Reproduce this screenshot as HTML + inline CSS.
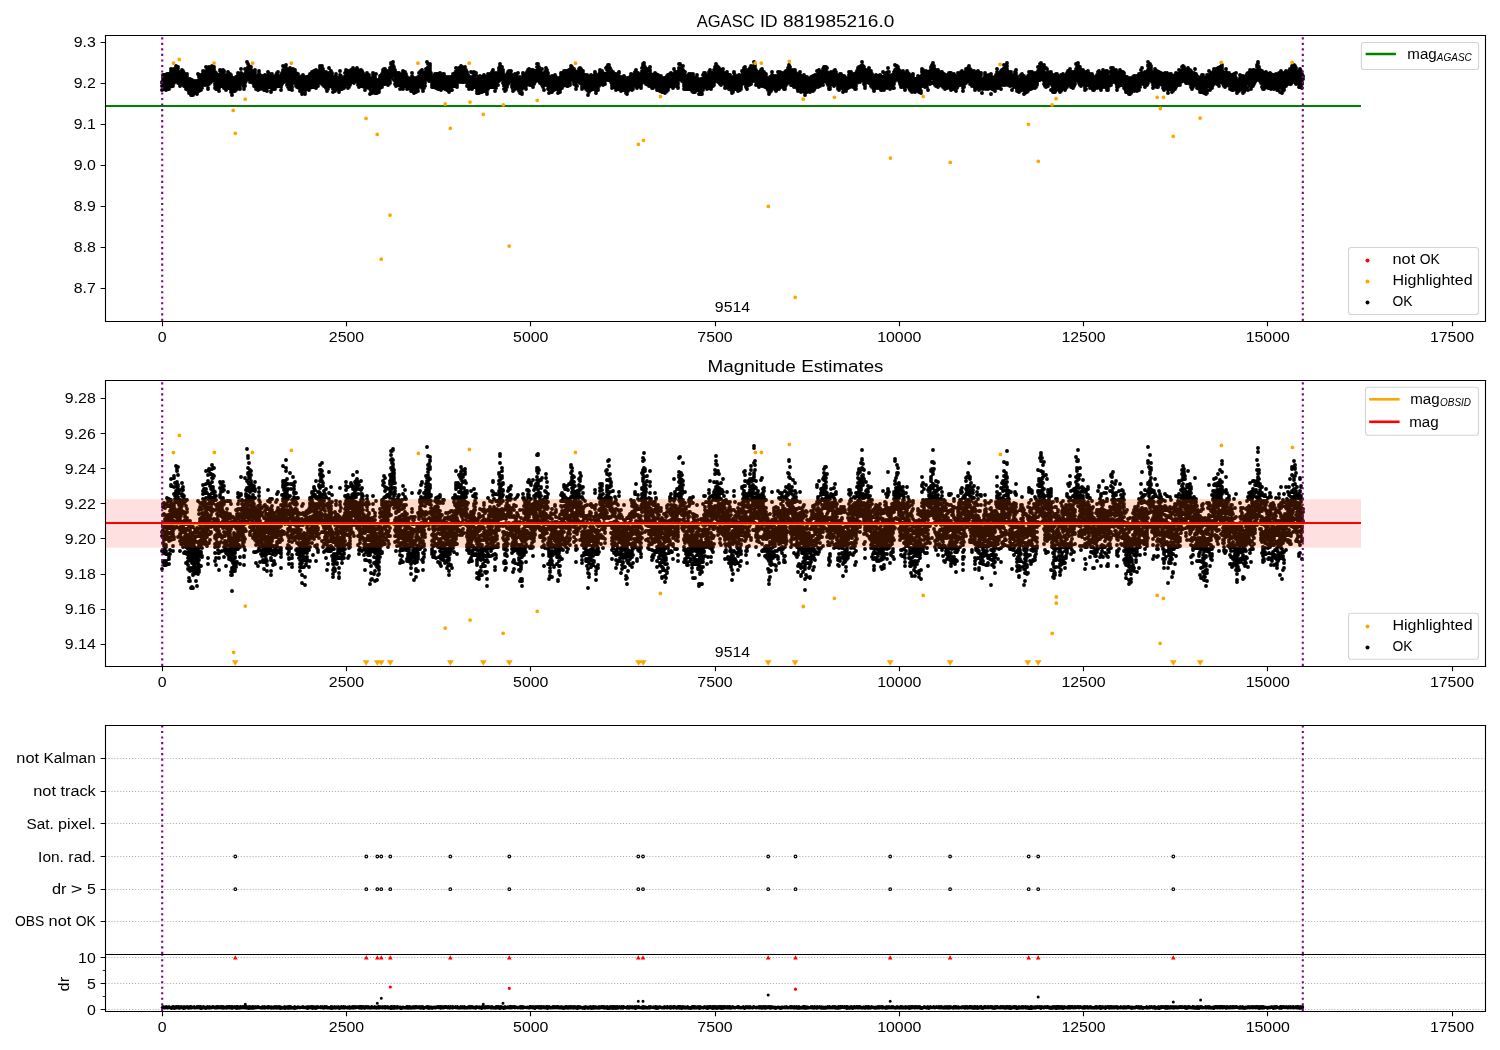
<!DOCTYPE html>
<html><head><meta charset="utf-8"><title>AGASC ID 881985216.0</title><style>html,body{margin:0;padding:0;background:#fff;}svg{display:block;}text{font-family:"Liberation Sans",sans-serif;}svg{will-change:transform;}</style></head><body><svg width="1500" height="1050" viewBox="0 0 1500 1050" font-family="'Liberation Sans', sans-serif" fill="#000">
<rect width="1500" height="1050" fill="#fff"/>
<defs>
<clipPath id="c1"><rect x="105.5" y="35.5" width="1380" height="286"/></clipPath>
<clipPath id="c2"><rect x="105.5" y="380.5" width="1380" height="286"/></clipPath>
<clipPath id="c3"><rect x="105.5" y="725.5" width="1380" height="229"/></clipPath>
<clipPath id="c4"><rect x="105.5" y="954.5" width="1380" height="57"/></clipPath>
</defs>
<g clip-path="url(#c1)">
<path d="M105.5 106H1360" stroke="#008000" stroke-width="2" stroke-linecap="square"/>
<path d="M162 86h0m0 4h0m0-7h0m0-1h0m1-2h0m0 1h0m0 3h0m0 5h0m0-14h0m0 1h0m0 2h0m1-3h0m0 2h0m0 6h0m0 3h0m0 3h0m0-7h0m1 4h0m0-4h0m0-3h0m0 10h0m0-6h0m0-8h0m0 3h0m1 10h0m0-5h0m0 7h0m0-3h0m0-5h0m0 4h0m1-7h0m0 2h0m0-6h0m0 7h0m0-4h0m0-4h0m1 0h0m0 2h0m0 5h0m0-3h0m0 4h0m0 1h0m1-9h0m0 7h0m0 3h0m0 4h0m0-1h0m0-9h0m0 11h0m1-12h0m0 9h0m0-5h0m0 2h0m0 4h0m0-7h0m0-5h0m1 5h0m0-4h0m0 2h0m0-4h0m0-3h0m0 13h0m0-2h0m0-13h0m1 7h0m0 2h0m0 3h0m0 2h0m0-8h0m1 5h0m0-5h0m0 7h0m0-5h0m0 8h0m0 1h0m1-7h0m0-2h0m0-4h0m0 2h0m0 8h0m0-12h0m0-2h0m0 12h0m1-7h0m0 2h0m0-3h0m0 5h0m0 3h0m0-11h0m1 10h0m0-8h0m0 2h0m0 1h0m0-9h0m0 12h0m1-10h0m0 9h0m0-5h0m0-2h0m0-3h0m0 14h0m0-8h0m0 1h0m0 5h0m1-2h0m0-5h0m0 7h0m0-8h0m0 12h0m0-8h0m0-7h0m0-1h0m1 9h0m0-1h0m0-3h0m0 6h0m0 1h0m0 2h0m1-4h0m0 2h0m0 7h0m0-5h0m0-6h0m0 7h0m0 2h0m0-10h0m1 2h0m0 4h0m0-2h0m0 5h0m0 2h0m0-10h0m1 0h0m0-3h0m0 4h0m0 5h0m0-2h0m0-9h0m0 13h0m1-9h0m0 10h0m0-3h0m0-10h0m0 9h0m0-3h0m0 8h0m1-2h0m0-8h0m0 7h0m0-5h0m0 2h0m0 5h0m0-10h0m0-1h0m0 13h0m1-3h0m0-4h0m0 7h0m0-5h0m0-4h0m0-2h0m1 5h0m0 2h0m0 3h0m0-6h0m0 10h0m0-13h0m1 5h0m0 6h0m0-9h0m0 5h0m0-9h0m0 15h0m0-13h0m0 8h0m1 0h0m0 4h0m0-3h0m0-2h0m0 7h0m0-11h0m1 8h0m0 3h0m0 3h0m0-8h0m0-1h0m0-1h0m0-3h0m1 6h0m0-7h0m0 12h0m0-9h0m0 3h0m0 2h0m0 1h0m0 5h0m1-5h0m0-5h0m0-2h0m0 6h0m0 8h0m0-11h0m0 7h0m1-6h0m0 1h0m0-6h0m0 15h0m0-5h0m0-1h0m0-6h0m1 2h0m0-4h0m0 14h0m0-13h0m0 10h0m0-4h0m0 3h0m1-4h0m0-3h0m0 5h0m0 1h0m0 1h0m1-2h0m0-3h0m0-2h0m0-2h0m0-1h0m0 10h0m1-6h0m0 3h0m0 3h0m0-8h0m0 10h0m1-4h0m0 1h0m0-9h0m0 10h0m0-4h0m0 7h0m0-10h0m1 5h0m0-8h0m0 5h0m0 4h0m0-7h0m0 8h0m0-17h0m1 15h0m0-9h0m0 7h0m0 3h0m0-6h0m0 7h0m0-14h0m0-1h0m1 6h0m0 2h0m0 1h0m0-10h0m0 4h0m0-3h0m1 10h0m0-1h0m0-1h0m0-6h0m0 1h0m0 4h0m0 7h0m0-10h0m0 7h0m1 1h0m0-2h0m0-3h0m0-1h0m0-2h0m0-3h0m0-1h0m1-5h0m0 4h0m0 3h0m0-5h0m0 6h0m0 5h0m1-6h0m0 2h0m0 1h0m0 2h0m0-8h0m0-3h0m1 2h0m0 7h0m0-1h0m0-4h0m0 1h0m0 7h0m0-11h0m0 12h0m0-13h0m1-5h0m0 5h0m0 7h0m0-8h0m0 3h0m0 3h0m0 7h0m0-1h0m0-2h0m1-2h0m0-6h0m0 3h0m0 7h0m0-2h0m0 4h0m1 3h0m0 1h0m0-8h0m0-3h0m0-10h0m0 2h0m0 6h0m1 3h0m0-12h0m0 8h0m0 1h0m0-3h0m0 11h0m0-4h0m1-5h0m0 7h0m0-8h0m0-4h0m0 3h0m0 10h0m0-7h0m0 2h0m1-6h0m0 8h0m0-5h0m0 7h0m0-5h0m0-9h0m1 8h0m0-10h0m0 11h0m0-7h0m0-1h0m0 5h0m0 6h0m0-9h0m1 0h0m0-3h0m0 12h0m0-6h0m0 3h0m1-3h0m0-5h0m0 10h0m0-12h0m0 10h0m0-5h0m1 9h0m0-2h0m0-7h0m0 1h0m0 10h0m0 1h0m0 4h0m0-3h0m1 4h0m0-10h0m0-5h0m0 14h0m0-8h0m0-5h0m0 8h0m0-10h0m0 4h0m1 2h0m0 2h0m0 2h0m0-7h0m0 8h0m0-9h0m0 10h0m1-7h0m0 1h0m0 2h0m0-5h0m0-1h0m0 8h0m0 3h0m0 1h0m1-10h0m0 10h0m0 4h0m0-6h0m0-1h0m0-3h0m0-1h0m0-5h0m0 13h0m1-12h0m0 6h0m0 2h0m0-6h0m0-4h0m0-3h0m0 9h0m0-10h0m0 16h0m1-10h0m0 1h0m0 1h0m0 2h0m0 4h0m0-13h0m0 1h0m0 2h0m0 9h0m1-11h0m0 8h0m0-6h0m0 3h0m0 9h0m0-3h0m1 0h0m0-9h0m0 7h0m0-6h0m0 2h0m0-5h0m0-1h0m0-1h0m0 8h0m1-3h0m0 4h0m0 1h0m0-9h0m0 1h0m0 10h0m0 3h0m0 3h0m0-10h0m1 1h0m0-2h0m0 9h0m0-2h0m0-4h0m0 3h0m1-1h0m0-5h0m0 8h0m0-5h0m0 6h0m0 1h0m0 3h0m1-8h0m0 4h0m0-7h0m0-2h0m0-2h0m1 11h0m0-7h0m0 6h0m0 2h0m0-12h0m0-3h0m0 8h0m0 4h0m0-6h0m1 0h0m0 3h0m0 2h0m0 5h0m0-2h0m1-8h0m0 4h0m0 3h0m0 2h0m0-13h0m0 7h0m1-3h0m0 2h0m0-5h0m0 6h0m0 3h0m0 7h0m0-4h0m0 5h0m0-4h0m1 2h0m0-2h0m0-3h0m0-2h0m0 12h0m0-3h0m1-5h0m0 2h0m0-4h0m0-6h0m0 4h0m0-5h0m0 2h0m1 0h0m0 10h0m0-11h0m0 6h0m0 4h0m0-6h0m0 5h0m1-5h0m0-3h0m0 7h0m0 3h0m0 1h0m0-7h0m0-5h0m1-2h0m0 8h0m0-5h0m0 10h0m0-8h0m0 7h0m1-11h0m0 11h0m0-6h0m0 2h0m0-4h0m0 5h0m0-9h0m1-4h0m0 1h0m0 1h0m0 8h0m0-5h0m0 8h0m0-5h0m1 1h0m0-4h0m0 5h0m0 2h0m0-11h0m0 7h0m0-5h0m1 1h0m0-1h0m0 9h0m0-4h0m0-1h0m0 9h0m0-7h0m0 6h0m1-5h0m0-5h0m0-5h0m0 7h0m0-4h0m0-7h0m1 11h0m0-3h0m0-2h0m0-1h0m0 10h0m0-1h0m1-4h0m0 5h0m0-4h0m0-4h0m0 6h0m0 3h0m1 3h0m0-7h0m0 3h0m0 5h0m0-2h0m0-10h0m0 2h0m1-1h0m0-9h0m0 5h0m0 2h0m0 5h0m0 5h0m0-3h0m1-7h0m0-3h0m0 5h0m0-6h0m0 9h0m1-4h0m0-2h0m0-1h0m0-3h0m0-1h0m0-8h0m1 15h0m0-1h0m0-6h0m0-6h0m0 14h0m0-5h0m0-6h0m0 12h0m1-7h0m0-4h0m0 11h0m0-6h0m0-4h0m0 6h0m0-9h0m0 12h0m1-11h0m0 15h0m0-10h0m0 2h0m0 2h0m0-8h0m0 13h0m0-12h0m0 8h0m1-3h0m0 4h0m0-11h0m0 8h0m0-5h0m0 2h0m1 2h0m0 7h0m0-2h0m0-3h0m0-5h0m1 4h0m0 8h0m0-6h0m0 3h0m0-6h0m0-2h0m1 5h0m0-1h0m0 6h0m0-10h0m0 9h0m0 2h0m0-3h0m0-9h0m0 4h0m0 11h0m1-14h0m0 4h0m0-6h0m0 8h0m0 1h0m0 3h0m0-8h0m0 10h0m1-5h0m0 1h0m0 4h0m0-6h0m0 8h0m0-4h0m0 7h0m1-11h0m0 7h0m0-4h0m0 1h0m0-5h0m1 5h0m0 3h0m0 5h0m0-14h0m0 5h0m0-4h0m0 9h0m0-6h0m1-2h0m0 8h0m0-5h0m0 1h0m0-9h0m0 4h0m0-6h0m0 12h0m0-9h0m1 2h0m0-1h0m0 6h0m0-4h0m0 6h0m0 6h0m0-11h0m0 6h0m1-2h0m0 2h0m0 3h0m0-6h0m0-5h0m0 2h0m1 4h0m0-5h0m0 4h0m0-5h0m0 9h0m0 2h0m0-9h0m1 8h0m0 2h0m0-8h0m0 5h0m0 4h0m0-7h0m1-6h0m0 10h0m0-4h0m0 3h0m0 2h0m0-7h0m0 10h0m0-12h0m1 3h0m0-4h0m0-2h0m0 14h0m0-9h0m0 6h0m0-4h0m0 2h0m1 3h0m0-9h0m0 7h0m0-8h0m0 11h0m0-5h0m0-2h0m0-5h0m1 12h0m0-2h0m0-6h0m0 5h0m0 6h0m0-9h0m0-6h0m0 3h0m1 4h0m0-2h0m0-9h0m0 12h0m0-9h0m0 5h0m0-4h0m0 3h0m1 3h0m0-4h0m0 1h0m0 7h0m0 1h0m0-3h0m1-6h0m0-1h0m0-3h0m0 7h0m0 1h0m0 4h0m0-3h0m1-7h0m0 4h0m0 1h0m0 2h0m0 2h0m0 3h0m0 3h0m0 1h0m0-15h0m1 6h0m0 4h0m0-6h0m0-4h0m0-3h0m0 10h0m0-5h0m1 2h0m0-1h0m0 2h0m0-3h0m0-1h0m0 5h0m0 6h0m0-3h0m1-8h0m0-1h0m0 2h0m0 2h0m0 1h0m0 3h0m0 4h0m0-2h0m1-8h0m0 6h0m0-3h0m0 4h0m0 3h0m0-11h0m1 2h0m0 2h0m0 1h0m0 4h0m0-1h0m0-8h0m0-3h0m1 4h0m0 5h0m0-11h0m0 9h0m0-8h0m0 3h0m0 8h0m1-4h0m0-3h0m0 4h0m0 4h0m0-10h0m0-4h0m1 7h0m0-1h0m0 6h0m0-7h0m0 5h0m0 4h0m1-1h0m0-3h0m0-5h0m0 3h0m1-5h0m0 7h0m0 1h0m0 3h0m0 1h0m0-7h0m0 10h0m0-13h0m1 7h0m0-3h0m0-3h0m0-2h0m0-3h0m1 3h0m0-5h0m0-1h0m0-4h0m0 7h0m0 4h0m1-5h0m0 5h0m0 1h0m0-8h0m0 9h0m0-3h0m0 6h0m0-9h0m1 0h0m0 7h0m0-5h0m0 2h0m0-6h0m0-1h0m1 4h0m0-3h0m0-1h0m0-2h0m0 11h0m0-4h0m0 3h0m0-13h0m1 11h0m0-3h0m0 5h0m0-6h0m0-3h0m0 13h0m0 3h0m1-3h0m0-1h0m0-1h0m0-9h0m0 3h0m0 11h0m0-6h0m0-2h0m0 10h0m1-6h0m0 2h0m0 1h0m0 2h0m0 2h0m0 1h0m1-6h0m0-2h0m0-3h0m0-2h0m0-1h0m0-2h0m0-5h0m1 12h0m0-3h0m0-5h0m0-2h0m0 6h0m0 9h0m1-8h0m0 6h0m0-1h0m0-1h0m0 6h0m0-13h0m0 16h0m0-6h0m0-4h0m1-1h0m0 1h0m0-3h0m0-2h0m0 6h0m0-12h0m1 11h0m0-10h0m0 2h0m0 2h0m0 1h0m0 7h0m0-5h0m1 3h0m0-3h0m0 6h0m0-9h0m0-4h0m1 10h0m0 6h0m0-7h0m0-2h0m0-1h0m0-1h0m0-2h0m1 8h0m0 5h0m0-12h0m0 2h0m0 3h0m0 3h0m0 5h0m0-3h0m1-3h0m0-1h0m0 6h0m0-8h0m0-4h0m0 8h0m0-5h0m0 6h0m1-3h0m0-1h0m0 3h0m0-5h0m0 8h0m0 2h0m0 1h0m1-5h0m0 3h0m0 5h0m0-4h0m0 1h0m0-6h0m0-2h0m1 9h0m0-3h0m0-3h0m0-6h0m0 5h0m0-1h0m0-1h0m1 10h0m0-1h0m0 3h0m0 2h0m0-7h0m0-8h0m0 6h0m0-3h0m0-6h0m1 12h0m0-4h0m0-7h0m0 10h0m0-7h0m0-5h0m0 8h0m1 2h0m0-6h0m0 9h0m0-10h0m0 4h0m0 8h0m1 4h0m0-11h0m0 1h0m0 4h0m0-2h0m0 6h0m0-13h0m0-1h0m1 1h0m0 10h0m0-7h0m0 6h0m0-4h0m0-7h0m0 8h0m1-4h0m0 5h0m0 1h0m0-10h0m0 2h0m0 6h0m0 3h0m1-11h0m0 2h0m0 7h0m0-5h0m0 3h0m1-1h0m0-7h0m0 14h0m0-4h0m0-6h0m1 3h0m0 5h0m0-14h0m0 4h0m0 4h0m0 3h0m0-9h0m0 3h0m1-4h0m0 1h0m0 6h0m0-8h0m0 6h0m0-1h0m0 4h0m1-5h0m0 1h0m0-5h0m0 8h0m0 2h0m0-12h0m0 3h0m1 4h0m0-1h0m0 5h0m0-11h0m0 9h0m0-4h0m0-2h0m0 12h0m1-7h0m0 3h0m0-7h0m0-5h0m0 6h0m1 8h0m0-7h0m0-5h0m0 6h0m0 2h0m0-5h0m0-4h0m1 5h0m0-1h0m0-6h0m0 10h0m0-5h0m0 7h0m0-8h0m0 14h0m1-11h0m0 5h0m0-4h0m0 7h0m0-5h0m1 1h0m0 5h0m0-12h0m0 4h0m0-3h0m0 7h0m0-10h0m1 0h0m0 2h0m0 9h0m0-5h0m0-3h0m0-4h0m0 11h0m1-12h0m0 3h0m0 2h0m0-7h0m0-1h0m0 10h0m0-11h0m1 4h0m0 8h0m0-3h0m0-8h0m0 12h0m1-5h0m0 10h0m0-11h0m0-5h0m0 14h0m0-11h0m0 5h0m0-10h0m1 4h0m0-1h0m0 7h0m0 3h0m0-8h0m0 3h0m0 6h0m0 5h0m1-13h0m0 9h0m0-1h0m0-4h0m0-3h0m0 6h0m0 7h0m0-4h0m0 3h0m1-7h0m0-1h0m0-3h0m0 9h0m0-4h0m0-6h0m0 8h0m0 5h0m1-2h0m0 4h0m0-16h0m0 6h0m0 4h0m0-7h0m0 5h0m1 2h0m0-2h0m0-2h0m0 5h0m0 3h0m0 5h0m0-16h0m1 14h0m0-7h0m0 2h0m0-4h0m0-1h0m0-4h0m0 10h0m0-9h0m0 10h0m1-8h0m0 3h0m0-4h0m0-2h0m0-1h0m0-1h0m0-5h0m1 16h0m0-9h0m0 11h0m0-8h0m0 4h0m0-2h0m1 5h0m0-2h0m0 3h0m0-5h0m0-5h0m0 3h0m0-8h0m1 6h0m0-4h0m0 10h0m0-3h0m0 7h0m0-3h0m0-9h0m1 7h0m0 7h0m0-5h0m0 4h0m0 4h0m0-6h0m1-2h0m0 5h0m0 2h0m0-12h0m0 8h0m0-5h0m1-2h0m0 4h0m0-6h0m0 4h0m0 8h0m0-13h0m0 14h0m1-3h0m0-6h0m0 1h0m0 4h0m0-2h0m0-7h0m0 3h0m0-6h0m0-1h0m1 7h0m0-3h0m0 7h0m0-3h0m0 7h0m0-2h0m1-9h0m0 5h0m0-3h0m0 7h0m0-1h0m1-1h0m0 2h0m0-5h0m0 10h0m0-1h0m0-3h0m1-1h0m0-3h0m0-9h0m0 4h0m0-1h0m0-7h0m0 10h0m1 3h0m0-2h0m0-2h0m0-1h0m0 6h0m0-9h0m0 12h0m1-4h0m0 3h0m0-7h0m0 9h0m0-10h0m0 2h0m1 3h0m0 1h0m0-5h0m0 2h0m0 5h0m1-9h0m0 3h0m0 6h0m0 1h0m0-5h0m0 2h0m1 1h0m0-1h0m0-4h0m0 1h0m0-6h0m0-3h0m0 6h0m1-3h0m0 5h0m0-10h0m0 6h0m0 2h0m0-6h0m0-3h0m1 8h0m0 4h0m0-3h0m0-3h0m0-3h0m1-2h0m0 7h0m0 1h0m0 3h0m0 6h0m0-4h0m0-9h0m0-2h0m1 5h0m0-4h0m0 8h0m0-2h0m0-3h0m0 9h0m0-1h0m0 2h0m1-8h0m0 3h0m0-6h0m0-2h0m0 10h0m0 1h0m1-7h0m0 3h0m0 1h0m0-11h0m0 5h0m0-1h0m0-5h0m1 8h0m0-2h0m0 3h0m0-5h0m0 6h0m0-9h0m0 11h0m1-14h0m0 8h0m0-3h0m0-1h0m0 8h0m0-3h0m0 5h0m1-8h0m0-1h0m0-2h0m0 8h0m0-4h0m0 3h0m0 2h0m0 3h0m1-11h0m0 7h0m0-5h0m0 4h0m0-1h0m0-7h0m0 10h0m1-9h0m0 1h0m0-2h0m0 4h0m0 4h0m0-3h0m0 5h0m1-11h0m0 9h0m0-7h0m0-3h0m0 8h0m0-1h0m0 6h0m1-1h0m0-10h0m0 1h0m0 5h0m0 3h0m0 4h0m0-8h0m0-2h0m0 12h0m1-14h0m0 4h0m0-3h0m0 14h0m0-5h0m0 6h0m0-4h0m0-7h0m0 1h0m0 2h0m1 3h0m0-3h0m0 7h0m0-8h0m0 6h0m0-9h0m1 7h0m0-3h0m0-7h0m0 4h0m0-6h0m0 5h0m0 8h0m1-8h0m0-4h0m0 3h0m0 4h0m0 5h0m0-4h0m0 7h0m0-6h0m1-6h0m0 3h0m0 1h0m0 4h0m0-3h0m0-6h0m0 10h0m1-2h0m0-3h0m0 8h0m0-4h0m0 2h0m0 3h0m1-9h0m0 6h0m0 1h0m0-3h0m0-3h0m0 7h0m0 2h0m0 2h0m1-12h0m0 3h0m0 2h0m0 2h0m0 3h0m0-13h0m1 4h0m0-2h0m0-1h0m0-1h0m0 6h0m0-7h0m0 11h0m0-12h0m1 8h0m0-6h0m0 3h0m0 8h0m0-2h0m0 3h0m1-9h0m0 5h0m0 1h0m0-4h0m0 5h0m0-8h0m0-2h0m0 13h0m1-9h0m0 3h0m0 5h0m0 7h0m0-8h0m0 3h0m0-6h0m1 2h0m0-4h0m0 2h0m0 8h0m0-5h0m0-6h0m0 13h0m0-3h0m1-4h0m0-8h0m0 5h0m0-1h0m0 11h0m0-12h0m1 4h0m0-5h0m0-7h0m0 13h0m0-3h0m0-6h0m0-2h0m1 6h0m0 5h0m0-1h0m0 3h0m0-5h0m0-4h0m0 12h0m1 2h0m0-2h0m0-9h0m0-4h0m0 5h0m0 4h0m0-10h0m0 4h0m0 5h0m1-12h0m0 7h0m0 1h0m0-2h0m0 4h0m0 2h0m0 3h0m1 1h0m0-3h0m0-2h0m0 8h0m0-12h0m1 8h0m0-9h0m0 3h0m0 4h0m0 3h0m0 2h0m0-7h0m1-1h0m0-4h0m0 8h0m0-6h0m0 4h0m0 6h0m0-2h0m1-6h0m0-1h0m0 5h0m0-11h0m0 1h0m0 8h0m0-5h0m0-5h0m1 5h0m0 1h0m0 1h0m0 2h0m0-6h0m0-2h0m1 5h0m0-7h0m0 8h0m0-6h0m0 9h0m0 1h0m0-6h0m0-3h0m0-4h0m1 3h0m0-6h0m0 4h0m0 3h0m0-4h0m0 5h0m0-9h0m0 13h0m1-4h0m0 2h0m0-4h0m0-3h0m0-5h0m0 1h0m0 14h0m1-9h0m0-6h0m0 3h0m0 10h0m0-4h0m0 2h0m0 3h0m0 1h0m1-7h0m0-1h0m0-1h0m0 8h0m0-11h0m0 6h0m0 3h0m1-1h0m0-4h0m0 6h0m0-5h0m0-2h0m0-4h0m0 2h0m1 0h0m0 6h0m0 3h0m0-4h0m0-1h0m0 8h0m1-8h0m0-4h0m0 7h0m0 4h0m0-3h0m0-5h0m0-4h0m1-1h0m0 2h0m0 10h0m0-13h0m0 11h0m0-5h0m0-8h0m0 10h0m1 0h0m0-7h0m0-2h0m0 3h0m0-5h0m0-3h0m0-1h0m1 7h0m0-5h0m0 10h0m0-7h0m0 3h0m0 2h0m0-10h0m1 11h0m0-8h0m0 1h0m0 1h0m0-6h0m0 8h0m0-5h0m1 2h0m0 1h0m0 5h0m0-4h0m0 1h0m0 6h0m0 4h0m1-8h0m0-1h0m0 2h0m0 8h0m0-11h0m0 9h0m0-3h0m0 8h0m1-7h0m0 4h0m0-2h0m0 7h0m0-4h0m0 1h0m0-9h0m1 6h0m0 2h0m0 3h0m0-8h0m0-1h0m0-1h0m1 4h0m0-4h0m0 7h0m0-5h0m0 7h0m0-11h0m1 1h0m0 5h0m0 3h0m0 1h0m0-7h0m0-3h0m1 9h0m0 4h0m0-1h0m0 4h0m0-14h0m0 4h0m1 1h0m0 8h0m0-6h0m0 2h0m0-6h0m0-3h0m0 10h0m1-3h0m0-8h0m0 4h0m0-2h0m0 3h0m0 4h0m0 2h0m0 2h0m1-4h0m0 6h0m0-8h0m0-3h0m0 8h0m0-13h0m0-2h0m1 8h0m0 3h0m0-6h0m0 8h0m1-3h0m0-7h0m0 12h0m0-6h0m0 4h0m0-12h0m0 5h0m1 6h0m0-3h0m0 6h0m0-7h0m0-4h0m0-1h0m1 11h0m0-8h0m0 6h0m0-1h0m0 6h0m0 1h0m1-3h0m0 1h0m0-3h0m0-6h0m0 2h0m0 3h0m1 4h0m0 1h0m0-2h0m0-3h0m0-1h0m0-3h0m1 9h0m0-6h0m0 5h0m0 2h0m0-8h0m0 2h0m0 1h0m1-1h0m0 4h0m0 1h0m0 1h0m0-4h0m0-7h0m0 13h0m1-4h0m0-2h0m0-2h0m0-1h0m0-5h0m0-1h0m0 5h0m0-1h0m0-7h0m1 11h0m0-6h0m0 9h0m0 2h0m0-7h0m0-3h0m1 8h0m0 6h0m0-7h0m0-2h0m0-5h0m0 10h0m0-8h0m1 7h0m0-2h0m0-8h0m0 4h0m0-1h0m0 8h0m0-5h0m1 2h0m0 6h0m0-8h0m0-1h0m0 5h0m0-7h0m0 10h0m1-5h0m0-3h0m0-3h0m0 9h0m1-12h0m0 10h0m0-2h0m0 3h0m0-5h0m0 8h0m0-10h0m1 2h0m0 2h0m0 1h0m0-6h0m0-1h0m0-1h0m0-1h0m0-4h0m1-1h0m0 12h0m0 2h0m0-5h0m0-5h0m0-2h0m0 3h0m0 1h0m1 2h0m0 2h0m0-8h0m0 3h0m0-4h0m0-2h0m1 3h0m0-4h0m0 7h0m0 4h0m0 4h0m0-3h0m0 6h0m1-8h0m0 4h0m0 3h0m0-4h0m0 6h0m0 2h0m0-14h0m1 5h0m0-4h0m0 1h0m0 5h0m0 4h0m0-15h0m0 12h0m0-11h0m1 12h0m0-7h0m0-3h0m0 4h0m0-5h0m0-2h0m0 10h0m1-6h0m0-5h0m0 7h0m0-8h0m0 3h0m0-5h0m1 2h0m0 7h0m0-6h0m0-3h0m0 8h0m0-4h0m0-11h0m0 13h0m1-2h0m0-1h0m0-2h0m0 4h0m0-7h0m0-3h0m0 16h0m1-9h0m0-5h0m0 9h0m0-1h0m0-5h0m0 12h0m0-3h0m1-13h0m0-1h0m0 10h0m0 1h0m0-4h0m0 6h0m0-8h0m0-2h0m1 6h0m0 3h0m0 3h0m0 1h0m1-1h0m0 7h0m0-9h0m0 7h0m0-2h0m0 5h0m0-11h0m1 11h0m0-3h0m0-6h0m0 2h0m0 2h0m1-1h0m0-1h0m0-3h0m0 7h0m0 3h0m1-11h0m0 4h0m0 6h0m0-3h0m0-4h0m0-5h0m1 0h0m0 6h0m0 3h0m0-6h0m0 11h0m0-3h0m1-5h0m0-1h0m0 6h0m0-10h0m0 1h0m0-2h0m0 7h0m1-2h0m0 3h0m0-5h0m0-3h0m0 15h0m0-4h0m1-8h0m0 1h0m0 7h0m0-11h0m0 7h0m0 3h0m0 4h0m1-4h0m0-11h0m0 1h0m0 5h0m0-4h0m0 2h0m0 9h0m0 3h0m0-7h0m1-4h0m0 9h0m0-6h0m0 2h0m0 1h0m0 6h0m1-6h0m0-3h0m0-6h0m0 5h0m0-2h0m0 7h0m1-10h0m0 8h0m0-1h0m0-3h0m0 9h0m0-14h0m0 10h0m0 1h0m1-2h0m0-2h0m0 4h0m0-5h0m0 8h0m0-14h0m0 5h0m1 1h0m0 8h0m0-5h0m0 6h0m0-11h0m0 8h0m1 1h0m0-1h0m0-4h0m0 1h0m0-3h0m0-3h0m0 12h0m1-6h0m0 1h0m0 2h0m0-6h0m0 7h0m0 3h0m1-6h0m0-2h0m0-5h0m0 3h0m0 8h0m0-1h0m0 3h0m1-2h0m0-3h0m0-4h0m0 10h0m0-8h0m0-5h0m0 14h0m1-11h0m0 4h0m0-3h0m0-2h0m0 7h0m0-10h0m1 12h0m0-3h0m0-6h0m0 1h0m0-4h0m0 5h0m1-3h0m0 7h0m0-5h0m0-3h0m0 7h0m0-2h0m0 7h0m0-13h0m1 6h0m0-2h0m0 4h0m0-5h0m0-1h0m0-5h0m1 6h0m0 4h0m0-2h0m0-7h0m0 4h0m0-1h0m0-4h0m0 12h0m1-7h0m0-1h0m0 2h0m0 4h0m0-1h0m0-10h0m0 2h0m1-3h0m0 4h0m0 7h0m0-4h0m0-8h0m0-3h0m0 14h0m1-3h0m0 3h0m0-6h0m0 11h0m0-2h0m1-6h0m0-3h0m0-6h0m0 11h0m0 1h0m0-7h0m0-2h0m1 8h0m0-6h0m0 1h0m0-8h0m0 3h0m0 6h0m0-5h0m1-4h0m0 1h0m0 8h0m0-2h0m0 7h0m0-11h0m0 9h0m0-6h0m1 6h0m0-2h0m0-6h0m0 3h0m0-4h0m0 10h0m0-12h0m0-1h0m0-2h0m1 12h0m0-1h0m0-1h0m0 6h0m0-2h0m0-9h0m0 4h0m0-2h0m0-3h0m0-3h0m1 3h0m0 7h0m0-8h0m0 6h0m0-1h0m0 8h0m0-1h0m0-8h0m0-5h0m0 11h0m1-2h0m0 3h0m0 2h0m0-6h0m0-1h0m0-1h0m0-1h0m0-2h0m1-1h0m0 2h0m0 3h0m0-8h0m1 3h0m0 6h0m0-3h0m0 5h0m0 1h0m0 1h0m1-7h0m0-1h0m0 6h0m0 2h0m0 3h0m0 3h0m0-11h0m1 8h0m0-8h0m0 5h0m0 5h0m1-5h0m0 5h0m0-7h0m0 3h0m0 6h0m0 2h0m0-7h0m1-3h0m0 6h0m0-4h0m0 7h0m1-5h0m0 1h0m0-2h0m0-5h0m0 3h0m0 8h0m0-16h0m1 11h0m0-3h0m0-2h0m0 9h0m0 2h0m1-6h0m0-1h0m0-5h0m0 3h0m0 6h0m0 1h0m0-14h0m1 2h0m0 7h0m0 5h0m0-6h0m0-5h0m0 1h0m0 2h0m0-7h0m1 1h0m0 6h0m0 7h0m0-6h0m0-6h0m0 2h0m0 7h0m1-9h0m0 1h0m0 6h0m0-2h0m0-6h0m0 9h0m0 2h0m0 3h0m1-6h0m0 7h0m0 5h0m0-4h0m0-2h0m0-1h0m0-2h0m0 7h0m1-8h0m0-3h0m0-1h0m0 9h0m0-4h0m0 1h0m1 6h0m0 1h0m0 1h0m0-5h0m0-8h0m0 4h0m0-3h0m0 4h0m0-8h0m1 14h0m0-5h0m0-10h0m0 2h0m0 2h0m0 1h0m0 2h0m0 4h0m0 1h0m1-3h0m0 3h0m0 3h0m0-11h0m1 6h0m0-7h0m0 4h0m0 5h0m0-11h0m0 5h0m0 10h0m1-15h0m0 9h0m0-5h0m0 9h0m0-3h0m0-4h0m0-4h0m1 8h0m0-7h0m0-5h0m0 9h0m0-3h0m0-4h0m1 5h0m0-5h0m0 2h0m0 11h0m0-7h0m0 8h0m0-3h0m0-1h0m0-1h0m1-4h0m0-5h0m0 6h0m0 8h0m0-6h0m0-5h0m0 6h0m0 1h0m1-3h0m0 9h0m0 1h0m0-7h0m0 1h0m0-9h0m0 4h0m0 8h0m1-8h0m0-6h0m0 8h0m0 4h0m0-9h0m0-6h0m0 13h0m1-7h0m0 1h0m0 2h0m0 4h0m0-8h0m0-1h0m0-1h0m0 8h0m1-11h0m0 8h0m0-6h0m0 5h0m0 2h0m0-3h0m0-2h0m1 3h0m0 3h0m0-7h0m0 9h0m0-6h0m0 7h0m1-2h0m0-10h0m0 7h0m0-10h0m0 8h0m0-3h0m1 9h0m0-8h0m0 9h0m0-6h0m0-11h0m0 2h0m0 5h0m0-4h0m1 9h0m0-4h0m0 2h0m0-3h0m0 7h0m0-8h0m0-2h0m1 5h0m0 8h0m0-2h0m0-7h0m0 4h0m0 6h0m0 3h0m0-14h0m1 11h0m0-7h0m0 6h0m0-3h0m0-9h0m0 5h0m0-7h0m1 5h0m0-3h0m0 8h0m0-3h0m1 1h0m0-3h0m0-1h0m0 8h0m0-10h0m1 6h0m0-9h0m0 3h0m0 3h0m0-8h0m0-2h0m1 12h0m0-6h0m0-3h0m0-7h0m0 6h0m0-1h0m0-3h0m0 11h0m1-3h0m0 1h0m0 3h0m0-5h0m0-1h0m0-1h0m0 8h0m1-7h0m0 1h0m0-6h0m0 2h0m0 8h0m0-3h0m0 4h0m1-6h0m0-1h0m0-1h0m0 3h0m0 5h0m0-4h0m0 6h0m0 3h0m0-6h0m1 12h0m0-4h0m0 1h0m0-4h0m0-6h0m1 9h0m0 2h0m0 1h0m0-6h0m0-6h0m0 2h0m0 13h0m1-1h0m0-10h0m0 4h0m0 5h0m0-3h0m0-10h0m0 6h0m0-3h0m1 3h0m0 4h0m0-1h0m0 2h0m0-9h0m0-4h0m0 3h0m0 4h0m1 2h0m0-5h0m0 6h0m0-7h0m0-3h0m0-2h0m1 8h0m0-4h0m0 2h0m0 3h0m0-10h0m0 3h0m0 8h0m1-2h0m0-6h0m0 4h0m0-2h0m0-3h0m0 8h0m0-9h0m1-1h0m0 6h0m0-3h0m0 6h0m0 2h0m1-4h0m0 4h0m0 4h0m0-1h0m0-9h0m0 5h0m0 6h0m1-6h0m0 8h0m0-6h0m0-3h0m0 5h0m0 6h0m1-1h0m0-10h0m0 6h0m0-5h0m0 2h0m0 5h0m0-10h0m0-3h0m1 4h0m0 6h0m0 1h0m0 3h0m0-7h0m0-4h0m0-2h0m0-2h0m1 9h0m0-1h0m0-4h0m0 1h0m0 5h0m0 2h0m0-10h0m1 5h0m0 1h0m0-3h0m0-2h0m0-3h0m0 12h0m1-1h0m0-4h0m0 2h0m0-3h0m0 7h0m0-9h0m0 11h0m0-16h0m1 13h0m0-5h0m0 4h0m0 2h0m0-5h0m0 6h0m0-8h0m0 11h0m1-4h0m0 2h0m0-4h0m0-8h0m0 14h0m0-9h0m0-2h0m0 13h0m1-7h0m0-4h0m0 1h0m0 7h0m0-1h0m0 4h0m0-15h0m1 5h0m0 10h0m0-11h0m0 2h0m0 2h0m0 8h0m0-6h0m0 1h0m1-6h0m0 4h0m0-7h0m0 6h0m0-9h0m0-3h0m0-1h0m1 1h0m0 5h0m0 2h0m0-4h0m0 7h0m0 1h0m0 2h0m1-10h0m0 3h0m0 6h0m0-10h0m0 5h0m0-6h0m0 7h0m1-5h0m0 6h0m0-3h0m0-4h0m0 10h0m0-11h0m0 14h0m1-4h0m0-8h0m0 4h0m0 2h0m0-7h0m0 4h0m0-5h0m0-3h0m1 1h0m0 3h0m0 3h0m0-9h0m0 12h0m1-7h0m0-2h0m0 4h0m0 1h0m0-9h0m0 11h0m0-10h0m1 7h0m0 4h0m0-3h0m0 4h0m0-6h0m0 9h0m0-15h0m1 15h0m0-4h0m0-5h0m0-1h0m0-4h0m0-1h0m0 4h0m0 5h0m1 3h0m0 1h0m0-2h0m0 4h0m0-6h0m0-2h0m0-2h0m1 12h0m0-5h0m0 3h0m0-10h0m0 5h0m0-3h0m0-7h0m1 7h0m0-2h0m0 3h0m0-5h0m0-1h0m0 11h0m0-4h0m0 2h0m0 3h0m1-8h0m0-2h0m0 8h0m0-11h0m0 10h0m0-1h0m1-2h0m0-7h0m0 6h0m0-1h0m0 5h0m0-8h0m1-3h0m0-3h0m0-3h0m0 7h0m0 2h0m0 2h0m1-7h0m0 11h0m0-8h0m0 2h0m0-9h0m0 3h0m1 6h0m0 8h0m0-5h0m0-9h0m0 13h0m0-10h0m0 8h0m1-4h0m0 1h0m0-2h0m0 4h0m0-7h0m0 13h0m0-5h0m0 3h0m1-10h0m0 8h0m0-9h0m0 10h0m0-7h0m0 8h0m0-4h0m0-2h0m1 2h0m0 4h0m0-6h0m0-6h0m0 9h0m0 7h0m0-3h0m1-2h0m0-6h0m0 3h0m0 5h0m0 5h0m0-4h0m0 1h0m1 1h0m0-3h0m0-1h0m0-2h0m0 11h0m0-13h0m0-1h0m1 3h0m0-7h0m0 9h0m0-8h0m0 12h0m0-2h0m0-7h0m1 6h0m0-10h0m0 8h0m0-2h0m0-9h0m0 7h0m0-1h0m0-7h0m1 12h0m0 1h0m0-5h0m0 2h0m0-4h0m0-3h0m0-1h0m0 12h0m1-1h0m0 4h0m0-10h0m0 5h0m0-2h0m0-5h0m0 16h0m0-5h0m0 2h0m1 1h0m0-6h0m0 3h0m0 9h0m1-8h0m0 6h0m0-1h0m0-6h0m0 5h0m0 3h0m0-5h0m0-9h0m1 5h0m0 3h0m0-8h0m0 3h0m0 6h0m0 1h0m0-11h0m1 6h0m0-4h0m0 6h0m0-9h0m0 13h0m0-7h0m0 10h0m0-6h0m1-5h0m0 1h0m0 5h0m0-7h0m0 6h0m0-3h0m1-3h0m0 10h0m0-5h0m0-2h0m0 3h0m0-8h0m0 9h0m1-10h0m0 3h0m0 4h0m0 2h0m0-10h0m0 5h0m0-6h0m0 12h0m1-6h0m0 5h0m0-4h0m0-4h0m0-1h0m0 6h0m1 4h0m0-8h0m0 6h0m0-1h0m0-1h0m0 6h0m0-7h0m1 3h0m0 1h0m0 1h0m0 6h0m0-9h0m1-1h0m0 4h0m0-1h0m0-6h0m0 11h0m0-3h0m0-10h0m1 0h0m0 8h0m0 1h0m0-5h0m0 2h0m0 8h0m0-2h0m0-10h0m1 5h0m0-2h0m0-4h0m0-3h0m0-2h0m0-1h0m0 7h0m1-3h0m0 6h0m0 5h0m0-9h0m0-3h0m0-3h0m0 9h0m1 1h0m0-3h0m0 4h0m0-5h0m0-5h0m0 12h0m0-9h0m1 0h0m0 2h0m0 3h0m0-11h0m0 5h0m0-3h0m1 11h0m0-12h0m0 13h0m0-4h0m0-4h0m0 2h0m0-5h0m0-3h0m1 7h0m0-6h0m0 2h0m0 1h0m0 10h0m0-5h0m0 1h0m1-1h0m0-3h0m0-6h0m0 5h0m0-2h0m0 10h0m0-1h0m0 3h0m1-6h0m0 6h0m0-10h0m0 6h0m0-7h0m0 4h0m0 5h0m0-12h0m1 8h0m0 4h0m0-14h0m0 7h0m0 4h0m0-5h0m0-2h0m1 6h0m0 5h0m0-9h0m0 7h0m0-9h0m0 4h0m1 2h0m0-5h0m0-1h0m0-4h0m0-3h0m0 11h0m0-12h0m1 1h0m0 9h0m0-3h0m0 4h0m0-5h0m0-1h0m0-2h0m0 10h0m1-6h0m0-1h0m0-1h0m0 6h0m0 1h0m0-3h0m0-6h0m0 10h0m1 0h0m0 3h0m0 2h0m0-10h0m0 1h0m0-6h0m0 1h0m1 4h0m0 4h0m0-1h0m0-6h0m0 8h0m0 2h0m1 0h0m0 1h0m0 4h0m0-6h0m0-4h0m0 7h0m0 6h0m1-7h0m0 4h0m0-11h0m0 4h0m0-1h0m0-6h0m1 0h0m0 3h0m0 2h0m0 1h0m0 3h0m1-9h0m0 1h0m0-2h0m0 3h0m0 1h0m0 1h0m0 1h0m0-8h0m1 0h0m0-1h0m0 11h0m0 2h0m0 2h0m0-8h0m0-4h0m0 7h0m0-6h0m1 0h0m0 4h0m0 2h0m0-9h0m0 11h0m0-5h0m1 3h0m0 9h0m0-4h0m0 6h0m0-12h0m0 8h0m0-3h0m0-10h0m0 1h0m1-2h0m0 2h0m0 3h0m0 8h0m0-7h0m0 3h0m0 2h0m1 5h0m0-2h0m0-9h0m0 3h0m0 1h0m0 1h0m0 1h0m1 2h0m0-8h0m0 7h0m0-5h0m0 3h0m0-6h0m0 10h0m0 2h0m1-5h0m0 5h0m0-2h0m0-5h0m0-2h0m0 11h0m1 1h0m0-11h0m0 7h0m0-3h0m0-8h0m0 3h0m0 4h0m1 8h0m0-6h0m0-3h0m0 7h0m0-2h0m0 5h0m0 4h0m1-9h0m0-4h0m0-4h0m0 6h0m0 5h0m0 3h0m1-10h0m0-6h0m0 4h0m0 7h0m0-1h0m0-3h0m0 5h0m0-11h0m1 1h0m0 12h0m0-13h0m0 5h0m0 1h0m0 3h0m0 3h0m0-14h0m0 6h0m1 5h0m0-3h0m0-2h0m0 6h0m0-11h0m0 12h0m1-1h0m0-6h0m0 4h0m0-2h0m0 6h0m0-13h0m1 5h0m0-2h0m0 10h0m0-1h0m0-10h0m0 7h0m0-1h0m1-5h0m0 3h0m0-10h0m0 13h0m0-12h0m0 3h0m1-1h0m0 9h0m0-7h0m0 4h0m0 4h0m0 5h0m0 1h0m0 2h0m0-6h0m0-8h0m1 8h0m0-5h0m0-1h0m0 5h0m0-3h0m0-5h0m1 9h0m0-7h0m0 9h0m0-3h0m0-1h0m0-1h0m0 6h0m0-11h0m0 3h0m1 4h0m0-8h0m0-1h0m0 6h0m0-9h0m0 7h0m1-6h0m0 5h0m0-2h0m0-5h0m0-1h0m0-2h0m1 5h0m0 5h0m0-4h0m0 1h0m0-3h0m0 8h0m0 2h0m1-13h0m0 12h0m0-2h0m0-5h0m0 4h0m0-2h0m0-6h0m0 3h0m1 3h0m0-2h0m0-2h0m0 6h0m0 5h0m0-2h0m0-10h0m1 3h0m0 2h0m0-4h0m0 6h0m0 1h0m1 3h0m0-3h0m0-3h0m0-1h0m0-3h0m1 3h0m0-9h0m0 6h0m0 4h0m1-5h0m0 2h0m0-5h0m0-3h0m0 10h0m1-2h0m0 5h0m0-6h0m0-9h0m0 7h0m0 4h0m0 2h0m0-7h0m1 2h0m0 7h0m0-2h0m0-10h0m0-2h0m0-1h0m0 10h0m0-3h0m1-1h0m0 3h0m0-5h0m0 7h0m0 4h0m0-12h0m1 10h0m0-4h0m0-4h0m0 1h0m0 5h0m0 6h0m1-7h0m0 10h0m0-7h0m0 3h0m0 3h0m0 2h0m0 2h0m1-3h0m0-1h0m0-4h0m0 1h0m0-4h0m0-5h0m1 15h0m0-6h0m0-4h0m0 6h0m0-8h0m0 4h0m0 5h0m1-1h0m0-2h0m0 3h0m0-7h0m0-3h0m0 6h0m0 5h0m1 2h0m0-9h0m0 2h0m0-6h0m0 1h0m0 13h0m0-7h0m0 2h0m0 7h0m0-4h0m1-5h0m0 1h0m0 3h0m0-6h0m0-4h0m0 3h0m0 8h0m0 1h0m0 2h0m1-4h0m0-4h0m0-1h0m0 2h0m0-7h0m0 2h0m0 12h0m0-2h0m1-6h0m0 1h0m0 2h0m0-7h0m0-5h0m0 1h0m0 7h0m1-3h0m0 6h0m0 4h0m0-6h0m0 7h0m0-9h0m1 7h0m0-3h0m0 4h0m0-9h0m0 13h0m0-14h0m1 5h0m0-4h0m0 8h0m0-1h0m0 4h0m0 1h0m0-9h0m1 3h0m0 4h0m0-7h0m0 4h0m0 4h0m0-9h0m1 0h0m0 5h0m0-6h0m0 3h0m0-6h0m0 14h0m1-9h0m0 2h0m0-4h0m0 8h0m0-2h0m0 5h0m1-8h0m0 4h0m0 2h0m0-4h0m0 9h0m0-1h0m1-3h0m0-2h0m0-4h0m0 1h0m0-6h0m0 4h0m0 10h0m0 2h0m1-5h0m0-8h0m0 3h0m0 2h0m0-7h0m0 12h0m1-2h0m0-6h0m0-2h0m0 3h0m0-4h0m0-2h0m1 10h0m0-1h0m0-1h0m0-2h0m0-7h0m0 12h0m0-8h0m1 2h0m0-2h0m0-2h0m0-1h0m0-4h0m0 12h0m1-11h0m0 3h0m0 3h0m0 5h0m0-2h0m0 6h0m0-2h0m1-6h0m0 3h0m0 1h0m0-5h0m0 8h0m0-12h0m1 1h0m0 8h0m0-3h0m0-7h0m0-2h0m0 8h0m0-1h0m1-8h0m0 7h0m0 5h0m0-7h0m0-3h0m0-3h0m0 10h0m1-6h0m0 6h0m0-2h0m0-1h0m0 6h0m0-15h0m1 11h0m0-2h0m0 4h0m0-5h0m0-2h0m0 12h0m1-7h0m0-7h0m0 8h0m0-3h0m0 7h0m0-8h0m0 5h0m0-10h0m0 3h0m1 0h0m0-2h0m0 6h0m0 6h0m0-4h0m0 1h0m0-5h0m1 4h0m0-4h0m0 1h0m0-3h0m0 7h0m0 1h0m0 2h0m1-3h0m0-2h0m0 4h0m0-6h0m0-3h0m0 11h0m0 1h0m1-6h0m0-7h0m0-1h0m0 7h0m0-9h0m0 5h0m0 6h0m0-4h0m0-11h0m0 3h0m1-6h0m0 4h0m0 1h0m0-2h0m0 7h0m0-4h0m0 2h0m0-9h0m1 3h0m0 5h0m0 4h0m0-1h0m0-5h0m0-7h0m0 2h0m1 8h0m0-1h0m0-5h0m0 8h0m0 2h0m0 2h0m0 3h0m1-8h0m0 2h0m0 3h0m0 2h0m0 3h0m0-12h0m0-1h0m1 8h0m0-10h0m0 8h0m0-2h0m0 5h0m0-10h0m1 7h0m0 2h0m0-3h0m0 7h0m0 2h0m0-10h0m0 5h0m1 0h0m0 4h0m0-5h0m0 6h0m0-7h0m0-2h0m0 5h0m0-6h0m0-1h0m0 12h0m1-5h0m0-4h0m0-2h0m0 4h0m0-6h0m0 9h0m0-11h0m0-1h0m0-3h0m1 9h0m0 5h0m0-1h0m0-1h0m0-4h0m0-1h0m0 9h0m1 5h0m0-5h0m0-2h0m0 6h0m0-2h0m0-6h0m0-1h0m0-1h0m1 1h0m0 1h0m0-4h0m0 13h0m0-6h0m0 5h0m0-3h0m1 3h0m0-4h0m0-7h0m0 10h0m0-6h0m0-2h0m0-3h0m1 4h0m0-6h0m0 11h0m0-2h0m0-7h0m0 2h0m1-3h0m0 3h0m0 5h0m0-3h0m0 7h0m0-2h0m1 6h0m0-5h0m0-2h0m0 5h0m0-7h0m0-4h0m0 3h0m1 4h0m0-7h0m0-2h0m0 3h0m0 3h0m0 4h0m0 1h0m1-2h0m0 3h0m0 1h0m0-9h0m0-1h0m0-2h0m0 6h0m1-3h0m0 5h0m0-3h0m0-4h0m0 12h0m0-4h0m0 2h0m0 4h0m1-15h0m0 4h0m0 2h0m0 8h0m0-11h0m0 8h0m0-3h0m1 8h0m0-12h0m0 1h0m0 4h0m0-6h0m0 8h0m0 3h0m0-12h0m1 2h0m0 2h0m0 3h0m0 5h0m0-2h0m0-9h0m1 8h0m0-1h0m0-2h0m0 7h0m0-13h0m0 1h0m0 2h0m1-3h0m0 2h0m0 2h0m0 1h0m0 4h0m0 6h0m0-9h0m0 5h0m0 3h0m1-14h0m0 4h0m0 5h0m0 4h0m0 1h0m0-13h0m0 9h0m0-5h0m0 2h0m1-4h0m0-3h0m0-2h0m0 7h0m0 1h0m0 5h0m0 2h0m1-11h0m0 5h0m0-2h0m0 7h0m0-15h0m1 4h0m0 5h0m0-2h0m0 4h0m0 1h0m1-3h0m0-10h0m0 3h0m0 5h0m0-2h0m1-1h0m0-1h0m0 3h0m0 5h0m0-4h0m0-6h0m0-3h0m1 7h0m0 2h0m0-5h0m0-3h0m0 12h0m1-9h0m0 3h0m0 5h0m0-1h0m0-1h0m0 5h0m1-13h0m0 1h0m0 2h0m0 1h0m0-5h0m0-5h0m0 11h0m0 2h0m0 1h0m1-6h0m0-5h0m0 1h0m0 1h0m0 4h0m0 8h0m0-5h0m0 1h0m1-4h0m0 3h0m0 1h0m0-6h0m0 7h0m1-5h0m0 8h0m0-9h0m0-4h0m0-1h0m0 8h0m0 2h0m1-6h0m0 6h0m0-2h0m0 4h0m0 4h0m0-1h0m1-10h0m0-3h0m0-3h0m0-2h0m0-5h0m0 4h0m0 11h0m1-6h0m0 3h0m0-5h0m0-1h0m0 7h0m0-13h0m0 15h0m1-8h0m0 3h0m0-5h0m0-1h0m0 7h0m0 2h0m1-4h0m0-3h0m0 5h0m0 5h0m0-2h0m0 3h0m0-13h0m1 9h0m0-7h0m0-4h0m0 13h0m0-5h0m0-3h0m0 10h0m1-4h0m0 1h0m0 5h0m0 2h0m0-6h0m0 2h0m0 8h0m0-3h0m1-5h0m0-9h0m0 3h0m0 9h0m0 4h0m0-11h0m0 2h0m1 1h0m0 4h0m0 5h0m0-6h0m0 4h0m0-10h0m0-1h0m1 11h0m0-9h0m0 4h0m0 7h0m0-6h0m0 3h0m1-3h0m0 3h0m0 1h0m0-9h0m0 1h0m0 1h0m0 9h0m0-12h0m1 7h0m0-1h0m0-8h0m0 2h0m0 10h0m0-7h0m0-6h0m1 10h0m0-1h0m0-3h0m0 6h0m0-11h0m0-1h0m0 3h0m0 12h0m1-15h0m0 7h0m0 4h0m0-3h0m0 6h0m1-2h0m0 5h0m0-11h0m0 10h0m0-7h0m0 4h0m1-7h0m0-6h0m0 4h0m0 3h0m0-6h0m0 7h0m0 1h0m0 9h0m0-6h0m1-1h0m0-5h0m0 6h0m0-2h0m0-5h0m0-1h0m0 9h0m0 1h0m1-5h0m0-5h0m0 7h0m0 4h0m0-10h0m0 9h0m0 4h0m1-3h0m0-8h0m0 3h0m0 1h0m0 1h0m1-11h0m0 12h0m0-7h0m0 6h0m0-8h0m0 5h0m0 6h0m1-1h0m0 2h0m0-8h0m0-3h0m0 6h0m1 5h0m0-10h0m0 2h0m0 3h0m0 9h0m0-5h0m1-4h0m0 2h0m0 3h0m0 4h0m0-3h0m0-10h0m1 3h0m0 3h0m0 4h0m0-10h0m0-2h0m0 9h0m1 0h0m0-1h0m0 4h0m0-12h0m0 7h0m0-4h0m0 12h0m1-14h0m0 5h0m0 4h0m0-1h0m0 2h0m0-7h0m0-4h0m0-4h0m1 3h0m0 7h0m0 1h0m0-4h0m0-1h0m0-8h0m1 4h0m0 4h0m0-5h0m0-3h0m0 5h0m0 4h0m0 3h0m0 2h0m1-2h0m0-6h0m0 3h0m0-4h0m0-3h0m1 3h0m0 7h0m0 4h0m0-5h0m0-2h0m0-3h0m1 4h0m0-3h0m0 8h0m0-11h0m0 7h0m0 1h0m1-1h0m0-5h0m0-3h0m0-2h0m0 7h0m0-8h0m0-1h0m1-2h0m0 6h0m0-3h0m0 4h0m0 3h0m0 6h0m1-9h0m0 7h0m0-4h0m0 3h0m0 2h0m0-10h0m0 13h0m0 1h0m1-9h0m0 3h0m0-5h0m0 7h0m0 1h0m0-10h0m0-3h0m1 12h0m0-4h0m0-5h0m0 4h0m0 6h0m0-8h0m0 5h0m0-9h0m1 11h0m0-2h0m0-11h0m0 4h0m0 5h0m0-3h0m0-5h0m0-3h0m1 11h0m0-5h0m0-4h0m0-4h0m0-1h0m0 10h0m0 3h0m0-7h0m1 6h0m0-8h0m0 5h0m0 4h0m0-6h0m0-6h0m0-1h0m0-2h0m0-1h0m1 7h0m0-5h0m0 6h0m0-2h0m0 7h0m0-1h0m0 5h0m0-7h0m0 4h0m1-3h0m0 6h0m0-7h0m0-3h0m0 6h0m0 2h0m0-12h0m0 15h0m1-14h0m0 4h0m0 6h0m0-3h0m0 7h0m0-11h0m1 9h0m0 1h0m0-7h0m0 9h0m0-4h0m0-3h0m0-4h0m0 12h0m1-3h0m0-2h0m0-1h0m0-2h0m0 6h0m0 3h0m0-10h0m0-5h0m0 4h0m0-2h0m1 8h0m0-4h0m0-3h0m0 6h0m0-7h0m0 10h0m1-2h0m0-8h0m0 4h0m0-7h0m0 6h0m0 6h0m0-2h0m1-1h0m0-5h0m0 3h0m0 6h0m0-1h0m0 2h0m1-2h0m0-2h0m0-3h0m0 7h0m0 2h0m0 3h0m1-3h0m0-4h0m0-6h0m0-1h0m0 5h0m0-1h0m0 8h0m1-5h0m0-9h0m0 6h0m0-1h0m0 5h0m0 1h0m1-2h0m0-4h0m0 1h0m0 6h0m0 4h0m0-13h0m1 9h0m0 5h0m0-13h0m0 3h0m0 6h0m0-4h0m0-6h0m1 10h0m0-5h0m0-2h0m0-3h0m0 8h0m0 3h0m1-8h0m0 11h0m0-1h0m0 2h0m0-3h0m0-4h0m0 3h0m0-9h0m1 0h0m0 5h0m0 7h0m0-2h0m0 4h0m0 2h0m0-13h0m0 6h0m1 2h0m0-5h0m0-2h0m0 6h0m0-7h0m0-1h0m0 5h0m0 8h0m1-10h0m0 1h0m0-4h0m0 5h0m0-11h0m0-1h0m0 14h0m0-9h0m1 1h0m0 2h0m0-5h0m0 14h0m0-6h0m0 1h0m0 4h0m1-5h0m0-4h0m0-2h0m0 10h0m0-7h0m0 9h0m1-12h0m0 3h0m0 5h0m0-2h0m0 4h0m1 2h0m0-2h0m0-1h0m0-3h0m0-7h0m0 4h0m0 11h0m1-13h0m0-1h0m0 3h0m0 6h0m0-4h0m0-6h0m0 7h0m0-8h0m1 2h0m0 2h0m0 3h0m0 1h0m0 3h0m0 4h0m1-4h0m0-2h0m0-4h0m0 7h0m0 2h0m0-7h0m0-3h0m0-3h0m1 0h0m0 3h0m0 5h0m0-13h0m0 4h0m0 6h0m1-6h0m0-2h0m0 5h0m0 2h0m0 1h0m0 1h0m1 1h0m0-3h0m0-4h0m0-1h0m0-2h0m0 6h0m0-8h0m0-3h0m1 9h0m0 5h0m0-12h0m0 1h0m0-4h0m0 7h0m0 5h0m0 5h0m1-11h0m0 7h0m0-1h0m0 4h0m0-9h0m0 13h0m0-1h0m0-10h0m1 6h0m0-3h0m0 6h0m0-9h0m0-3h0m0 16h0m0-3h0m1-5h0m0-7h0m0 1h0m0 8h0m0-13h0m0 3h0m0 3h0m1 5h0m0 1h0m0-4h0m0 7h0m0-9h0m0-3h0m1 0h0m0 7h0m0-1h0m0-7h0m0 6h0m0-8h0m0-2h0m1 15h0m0-6h0m0 7h0m0-6h0m0-6h0m0 4h0m0-5h0m0 2h0m0-6h0m0 12h0m0-13h0m1 3h0m0 4h0m0 1h0m0-2h0m0 3h0m0 1h0m0 1h0m0 3h0m1-5h0m0 3h0m0-7h0m0 10h0m0-8h0m1-4h0m0 1h0m0-8h0m0 6h0m0 7h0m0-9h0m0 7h0m1-2h0m0 6h0m0-10h0m0 11h0m0-12h0m0 9h0m0-1h0m0-9h0m0 15h0m1-10h0m0 12h0m0-6h0m0-1h0m0-2h0m0 8h0m0-3h0m0 7h0m1-10h0m0 7h0m0 2h0m0-10h0m0 6h0m0-4h0m0-3h0m1 1h0m0 9h0m0-10h0m0 9h0m0-6h0m0 4h0m0-2h0m0-6h0m1 7h0m0-6h0m0 11h0m0-8h0m0 5h0m0 6h0m1-13h0m0 5h0m0-1h0m0-1h0m0 4h0m0-8h0m1 2h0m0 8h0m0-5h0m0 1h0m0 1h0m0-10h0m0 4h0m1 1h0m0 4h0m0 1h0m0-4h0m0 10h0m0-12h0m0-1h0m0 11h0m0-15h0m1 8h0m0-4h0m0 2h0m0 6h0m0-9h0m0 6h0m0 8h0m0-3h0m1-1h0m0-6h0m0-4h0m0 11h0m0-10h0m0 4h0m0 9h0m0-8h0m1-2h0m0 9h0m0 2h0m0-10h0m0 1h0m0 4h0m0-3h0m1 3h0m0 5h0m0-4h0m0-2h0m0-7h0m0 11h0m0-9h0m0 1h0m0 3h0m1 3h0m0-1h0m0-4h0m0 8h0m0-6h0m0 7h0m0 1h0m1-9h0m0 3h0m0 1h0m0 4h0m0 1h0m0 2h0m0-5h0m1 2h0m0-7h0m0 5h0m0 8h0m0-5h0m0-7h0m0 10h0m0 3h0m1-8h0m0 1h0m0-3h0m0-5h0m0 2h0m0-4h0m0 12h0m0 3h0m1-3h0m0 2h0m0-5h0m0-4h0m0-2h0m0 4h0m1 2h0m0-7h0m0 10h0m0-8h0m0-6h0m0-3h0m0 12h0m1-5h0m0 6h0m0-2h0m0-2h0m0 7h0m1-5h0m0-4h0m0 1h0m0-4h0m0 11h0m0-2h0m0 3h0m1-11h0m0 8h0m0-2h0m0 6h0m0-3h0m0-6h0m1-4h0m0 5h0m0-2h0m0 3h0m0 1h0m0 7h0m0 1h0m1-8h0m0 4h0m0-5h0m0 4h0m0-5h0m0-2h0m1 4h0m0-5h0m0-1h0m0 7h0m0-12h0m0 15h0m0 1h0m0-12h0m0 6h0m0-1h0m1 1h0m0-1h0m0-1h0m0 3h0m0 6h0m0-5h0m0 2h0m0-9h0m0-3h0m1 8h0m0-1h0m0 2h0m0-5h0m0-1h0m0-5h0m0 2h0m0 10h0m1-2h0m0-2h0m0 4h0m0-7h0m0-2h0m0 11h0m1 0h0m0-1h0m0-12h0m0 5h0m0 5h0m0-1h0m0-3h0m0 8h0m1-10h0m0 5h0m0-4h0m0-4h0m0 12h0m0-6h0m1-6h0m0 3h0m0 2h0m0 1h0m0 4h0m0 3h0m0 2h0m0-8h0m1 8h0m0-2h0m0-2h0m0-2h0m0-11h0m0 10h0m0-4h0m0-2h0m1 1h0m0 8h0m0-1h0m0-2h0m0-1h0m0-7h0m0 4h0m0-7h0m1 6h0m0 4h0m0 3h0m0-6h0m0-3h0m0-1h0m0-1h0m0-1h0m1 3h0m0 5h0m0-7h0m0 9h0m0-3h0m0-1h0m0-7h0m0-3h0m1 1h0m0 6h0m0-7h0m0-3h0m0 8h0m0-1h0m0 5h0m1-5h0m0 4h0m0-1h0m0-8h0m0 10h0m0-8h0m0 12h0m0-2h0m1 5h0m0-2h0m0-9h0m0 3h0m0-4h0m0 5h0m0 8h0m0-5h0m1 5h0m0-10h0m0 5h0m0-8h0m0-1h0m0 8h0m0-3h0m0 5h0m0 2h0m1-5h0m0-5h0m0 1h0m0 6h0m0-4h0m0 6h0m0-12h0m1 9h0m0-1h0m0 5h0m0-1h0m0-6h0m0 11h0m1-2h0m0-4h0m0-1h0m0-1h0m0-2h0m0-7h0m0 5h0m0-3h0m0 10h0m1-8h0m0 4h0m0 4h0m0-2h0m0-7h0m0 10h0m0-7h0m0 11h0m1-3h0m0-10h0m0 2h0m0 2h0m0 5h0m0 5h0m0-3h0m0-3h0m1-2h0m0-2h0m0 9h0m0-6h0m0 10h0m0-8h0m0 7h0m1-8h0m0 4h0m0 3h0m0-4h0m0-7h0m0-2h0m0 3h0m1 6h0m0-10h0m0 3h0m0-6h0m0 11h0m0-2h0m1 0h0m0-2h0m0 5h0m0 6h0m0 2h0m0-3h0m0-3h0m1-9h0m0 2h0m0 3h0m0 5h0m0-4h0m0-7h0m0 10h0m1 3h0m0-11h0m0 4h0m0-6h0m0 4h0m0 6h0m0-1h0m0 6h0m1-13h0m0 6h0m0-2h0m0-7h0m0 13h0m0-7h0m0 4h0m0 5h0m1 0h0m0-9h0m0 5h0m0 1h0m0 6h0m0 2h0m0-13h0m1 5h0m0-1h0m0-1h0m0 3h0m0 4h0m0-14h0m0 5h0m0-6h0m0 5h0m1 10h0m0-9h0m0 4h0m0-1h0m0-6h0m0-3h0m1 8h0m0 3h0m0-4h0m0-4h0m0 9h0m0-6h0m0-4h0m1 6h0m0-6h0m0 4h0m0-1h0m0 8h0m0-2h0m1 2h0m0-2h0m0-5h0m0 9h0m0-11h0m0 5h0m1 3h0m0-3h0m0-7h0m0 6h0m0-4h0m0-3h0m0 5h0m0-6h0m1 11h0m0-2h0m0-9h0m0 6h0m0-3h0m1-2h0m0-2h0m0 4h0m0 3h0m0 4h0m0 1h0m0 3h0m0-6h0m1-5h0m0 6h0m0-8h0m0 10h0m0-4h0m0-3h0m0-4h0m0 13h0m0-14h0m1 4h0m0-5h0m0 12h0m0-2h0m0-3h0m0 6h0m1-3h0m0-1h0m0-3h0m0-3h0m0 8h0m1-9h0m0 4h0m0 3h0m0-6h0m0-7h0m0 4h0m1 8h0m0-6h0m0 8h0m0-9h0m0-2h0m0 13h0m0-6h0m0-3h0m1-4h0m0 3h0m0-7h0m0 13h0m0-4h0m0 3h0m0 4h0m1-6h0m0 2h0m0-4h0m0 8h0m0-11h0m0 9h0m1-1h0m0 2h0m0-4h0m0-3h0m0-5h0m0 4h0m0-5h0m1 6h0m0 5h0m0-8h0m0 5h0m0-6h0m0-2h0m1 8h0m0-8h0m0 13h0m0-4h0m0-10h0m0 8h0m0 3h0m0-13h0m0 4h0m0 1h0m0 2h0m1-7h0m0-2h0m0 4h0m0 7h0m0-5h0m0 7h0m1-11h0m0 4h0m0 6h0m0-7h0m0 3h0m0 3h0m0-11h0m0 14h0m1-7h0m0-3h0m0 4h0m0-8h0m0 12h0m0-10h0m0 7h0m1 2h0m0-5h0m0-1h0m0 2h0m0-6h0m0 14h0m0 1h0m0-4h0m1 4h0m0-10h0m0 3h0m0 1h0m0 8h0m0-3h0m0-4h0m0 3h0m1 1h0m0-4h0m0 2h0m0 5h0m0-9h0m0 12h0m0 1h0m1-6h0m0 4h0m0 2h0m0-9h0m0 5h0m0-11h0m0 1h0m0-2h0m1 2h0m0 2h0m0 1h0m0-5h0m0-1h0m0 11h0m0-3h0m1 0h0m0 2h0m0-5h0m0 7h0m0-9h0m1 5h0m0-1h0m0 4h0m0-6h0m0-1h0m0-3h0m1 8h0m0-6h0m0 11h0m0-7h0m0-1h0m0 5h0m0-9h0m0-3h0m1 3h0m0 8h0m0-2h0m0-2h0m0-5h0m0 4h0m0-7h0m1 5h0m0 5h0m0-8h0m0 7h0m0 5h0m0-3h0m0-5h0m1 2h0m0 5h0m0 2h0m0-9h0m0 6h0m0-2h0m0-5h0m1 7h0m0-1h0m0 3h0m0-7h0m0 11h0m0 1h0m0-9h0m0 5h0m1-8h0m0 5h0m0-3h0m0 6h0m0 2h0m0 3h0m1-9h0m0 7h0m0-3h0m0-2h0m0-9h0m1 3h0m0 6h0m0 1h0m0-8h0m0 4h0m0-6h0m0 11h0m1-2h0m0-5h0m0 6h0m0 1h0m0-3h0m0-2h0m0 7h0m1-6h0m0 2h0m0 9h0m0-3h0m0-1h0m0-3h0m0-9h0m1 0h0m0 9h0m0 3h0m0-6h0m0 7h0m0-12h0m1 6h0m0-6h0m0 8h0m0-5h0m0 7h0m0 2h0m1-3h0m0-4h0m0 8h0m0 1h0m0-4h0m0-4h0m1 3h0m0-6h0m0 4h0m0 4h0m0-5h0m1 4h0m0 1h0m0-10h0m0 7h0m0-1h0m0-1h0m0-3h0m1-1h0m0 6h0m0-3h0m0-7h0m0-3h0m0 5h0m1-4h0m0-1h0m0 7h0m0-3h0m0 11h0m0-7h0m0 3h0m1-9h0m0 11h0m0-8h0m0 6h0m0-4h0m0 1h0m0-8h0m1 7h0m0 5h0m0-2h0m0-5h0m1 10h0m0-9h0m0 2h0m0 5h0m0-10h0m0 7h0m1 0h0m0 2h0m0-5h0m0-2h0m0-1h0m0 10h0m0-12h0m1 15h0m0-13h0m0 8h0m0-9h0m0 2h0m0 4h0m0 4h0m0-5h0m0-6h0m1-1h0m0 4h0m0 3h0m0 9h0m0-6h0m0 1h0m0 2h0m1-5h0m0-6h0m0-4h0m0 2h0m0 6h0m0 3h0m0-4h0m0 5h0m1-4h0m0-2h0m0 3h0m0-12h0m0 7h0m0-4h0m1-4h0m0 2h0m0 6h0m0 1h0m0-3h0m0-3h0m1 1h0m0-4h0m0 6h0m0 3h0m0-8h0m0 11h0m0 3h0m1-7h0m0-2h0m0-7h0m0 12h0m0-6h0m0-2h0m0 10h0m1-3h0m0-4h0m0 3h0m0-6h0m0-3h0m0-2h0m0-3h0m1 5h0m0 3h0m0-4h0m0 7h0m0 1h0m0 1h0m1-5h0m0-1h0m0 6h0m0 3h0m0 1h0m0-12h0m0 6h0m0 9h0m0 2h0m1-11h0m0 9h0m0 6h0m0-7h0m0 5h0m0-10h0m0 1h0m0 1h0m0 6h0m1-3h0m0-4h0m0-2h0m0 7h0m0-4h0m0-4h0m0-1h0m0-3h0m1 8h0m0-2h0m0 6h0m0-1h0m0-9h0m0 1h0m1-1h0m0 4h0m0-1h0m0 5h0m0-9h0m0 10h0m1-8h0m0 10h0m0-5h0m0-2h0m0-8h0m0 13h0m1-2h0m0-1h0m0-1h0m0 3h0m0 1h0m0-5h0m0 7h0m0-8h0m0-2h0m1 12h0m0-6h0m0 2h0m0 5h0m0-3h0m0-12h0m0 7h0m0-1h0m1 3h0m0-6h0m0 3h0m0 6h0m0 1h0m0 1h0m0 2h0m1-4h0m0 1h0m0-6h0m0 10h0m0-8h0m0 5h0m0-8h0m1 7h0m0 2h0m0-4h0m0 8h0m0 1h0m1-6h0m0-2h0m0-2h0m0 7h0m0-8h0m0-2h0m0-2h0m1 0h0m0 1h0m0 2h0m0 4h0m0-1h0m0 3h0m0 2h0m0-12h0m1 8h0m0-4h0m0 6h0m0-9h0m0 12h0m0-6h0m1 2h0m0 3h0m0-4h0m0-4h0m0 3h0m0-6h0m1 0h0m0 7h0m0-2h0m0 6h0m0-9h0m0 6h0m0 4h0m1-8h0m0 5h0m0-10h0m0 1h0m0 6h0m0-4h0m1 7h0m0-9h0m0 6h0m0-4h0m0 3h0m0 7h0m0 2h0m1-3h0m0-3h0m0-5h0m0 9h0m0 2h0m0-8h0m0-5h0m1 2h0m0 7h0m0-3h0m0-2h0m0-9h0m0 5h0m0 10h0m0 1h0m1-4h0m0-2h0m0 3h0m0 4h0m0-12h0m0 11h0m0 2h0m1-7h0m0 4h0m0-3h0m0-4h0m0-1h0m0-4h0m1 9h0m0-2h0m0-9h0m0 2h0m0 5h0m0-1h0m0-3h0m1 12h0m0-5h0m0-7h0m0 9h0m0-4h0m0-4h0m0-3h0m0 5h0m1-3h0m0-4h0m0 6h0m0-5h0m0-5h0m0 15h0m0-1h0m1-3h0m0 1h0m0-8h0m0 12h0m0 1h0m0-4h0m0-3h0m0-1h0m0 9h0m1-9h0m0 2h0m0 5h0m0 1h0m0-5h0m0-4h0m0 13h0m1-9h0m0 2h0m0-6h0m0 11h0m0-3h0m0-7h0m1-1h0m0 7h0m0-8h0m0 2h0m0 9h0m0-5h0m1 5h0m0-7h0m0 4h0m0-1h0m0 6h0m1 0h0m0-7h0m0-4h0m0-2h0m0-2h0m0-1h0m0 7h0m0 5h0m1-13h0m0 2h0m0 8h0m0-11h0m0 4h0m0-9h0m1 11h0m0-5h0m0 1h0m0 1h0m0 6h0m0-10h0m1 4h0m0 1h0m0 2h0m0-10h0m0 2h0m0 11h0m0-8h0m1-3h0m0 11h0m0-5h0m0-2h0m0-5h0m0 4h0m0 4h0m0 1h0m1-2h0m0-3h0m0 4h0m0-5h0m0 6h0m0 2h0m0 3h0m1-4h0m0 5h0m0-3h0m0 4h0m0-12h0m0 13h0m1-11h0m0 2h0m0 11h0m0-5h0m0 1h0m0 5h0m0-7h0m0-1h0m0 4h0m0-7h0m0-4h0m1 14h0m0-8h0m0-5h0m0 8h0m0-5h0m0 11h0m0-4h0m1-1h0m0-2h0m0-7h0m0-1h0m0 2h0m0 2h0m0-5h0m0 7h0m1-4h0m0-1h0m0 4h0m0 9h0m0-5h0m0 2h0m0 4h0m1 1h0m0-7h0m0 1h0m0 5h0m0-8h0m0 10h0m0-5h0m0 6h0m1-14h0m0 3h0m0-6h0m0 9h0m0 3h0m0 1h0m1-15h0m0 6h0m0 1h0m0 2h0m0-5h0m0 6h0m0 3h0m1-6h0m0 4h0m0-8h0m0 5h0m0-6h0m0 10h0m0-8h0m0 10h0m1-5h0m0 1h0m0-6h0m0 4h0m0-5h0m0 2h0m0 11h0m0 1h0m0-4h0m1 6h0m0-10h0m0 4h0m0-3h0m0-4h0m0 11h0m0-1h0m1 3h0m0 1h0m0-7h0m0-6h0m0 10h0m0-3h0m0-4h0m0-4h0m1 15h0m0-3h0m0-1h0m0-5h0m0-2h0m0-6h0m0 3h0m1 1h0m0 5h0m0-4h0m0 2h0m0 7h0m0-13h0m0-2h0m1 12h0m0 3h0m0-4h0m0 5h0m0-8h0m0-2h0m1 10h0m0-1h0m0-3h0m0-1h0m0-1h0m0-5h0m0 13h0m1-11h0m0 3h0m0 1h0m0 1h0m0-7h0m0 8h0m0 4h0m1-4h0m0-2h0m0 4h0m0-5h0m0-3h0m0-1h0m1 1h0m0-4h0m0 3h0m0 3h0m0 4h0m0 1h0m0-4h0m0-8h0m1 11h0m0 4h0m0-6h0m0 7h0m0-9h0m0-1h0m0-3h0m1 5h0m0 1h0m0 2h0m0-10h0m0 6h0m0-5h0m0 1h0m0 2h0m0 7h0m1-8h0m0 4h0m0 9h0m0-2h0m0-6h0m0-3h0m0 4h0m0-7h0m0-1h0m1 1h0m0-2h0m0 5h0m0-10h0m0 4h0m0-1h0m0-4h0m0-2h0m1 1h0m0 9h0m0-2h0m0 3h0m0-6h0m0 12h0m0-5h0m0 1h0m1-10h0m0 7h0m0 6h0m0-9h0m0-1h0m0 8h0m0-3h0m1-3h0m0 4h0m0 1h0m0 1h0m0 1h0m0-4h0m0 7h0m1-6h0m0-7h0m0 6h0m0-2h0m0-7h0m0 6h0m0 6h0m1 1h0m0-7h0m0-2h0m0 7h0m0-1h0m0-1h0m0 5h0m0 2h0m1-3h0m0-4h0m0 10h0m0-9h0m0-9h0m0 5h0m1 1h0m0-2h0m0 7h0m0-9h0m0-1h0m0-1h0m1 3h0m0 9h0m0-13h0m0 3h0m0 4h0m0 2h0m1-5h0m0-4h0m0-2h0m0 3h0m0-5h0m0 9h0m1-2h0m0 1h0m0 1h0m0 1h0m0 1h0m0 5h0m0-12h0m0-6h0m0 2h0m1 0h0m0 4h0m0 6h0m0-2h0m0-1h0m0-9h0m0 3h0m0-5h0m1 3h0m0 7h0m0 3h0m0-4h0m0-5h0m0 4h0m0 7h0m0 3h0m1 1h0m0 3h0m0-10h0m0 3h0m0-6h0m0 7h0m1-5h0m0 8h0m0-10h0m0 3h0m0-5h0m0 10h0m0-2h0m0 8h0m0-2h0m1-7h0m0-5h0m0 2h0m0 9h0m0-4h0m0-8h0m1 12h0m0 1h0m0-8h0m0 11h0m0-12h0m0 4h0m0-9h0m0 3h0m1 4h0m0 5h0m0-4h0m0 6h0m0 1h0m0-9h0m0-4h0m1 7h0m0 1h0m0-3h0m0 5h0m0-7h0m0 10h0m0-11h0m1 4h0m0 2h0m0-4h0m0-4h0m0 2h0m0 7h0m1-9h0m0 6h0m0-1h0m0-4h0m0 10h0m0-7h0m0 8h0m0 1h0m0-4h0m0 5h0m1-2h0m0-2h0m0-3h0m0 6h0m0 2h0m0-10h0m0-1h0m1 4h0m0-5h0m0 13h0m0-7h0m0 2h0m0-5h0m0 7h0m0-11h0m1 11h0m0-6h0m0 2h0m0 8h0m0-11h0m0 5h0m0-6h0m0-2h0m1 1h0m0 4h0m0 1h0m0-4h0m0 6h0m0 2h0m0 1h0m0 1h0m1 0h0m0-12h0m0 4h0m0 2h0m0 1h0m0-4h0m0 5h0m0 5h0m0-2h0m1 1h0m0-6h0m0 2h0m0 3h0m0-7h0m0-2h0m1 10h0m0-14h0m0 2h0m0 5h0m0 6h0m0-1h0m0-8h0m1 8h0m0-8h0m0-4h0m0 14h0m0 1h0m0-5h0m0-3h0m1-5h0m0 4h0m0-6h0m0 8h0m0-4h0m0 11h0m0-5h0m0 6h0m0 1h0m0-3h0m1-3h0m0-1h0m0 6h0m0-3h0m0-6h0m0-2h0m0-1h0m1-1h0m0 5h0m0 2h0m0-5h0m0 11h0m0-4h0m1-5h0m0-2h0m0-4h0m0 7h0m0-5h0m0 12h0m1-3h0m0-6h0m0 3h0m0 7h0m0-1h0m1 3h0m0-6h0m0 1h0m0-2h0m0-4h0m0 8h0m0-6h0m0-3h0m1 7h0m0-3h0m0-3h0m0 8h0m0-9h0m0-3h0m1 2h0m0 3h0m0-8h0m0 13h0m0-9h0m0 5h0m1-5h0m0 2h0m0-4h0m0 8h0m0-3h0m1 1h0m0-1h0m0-2h0m0 4h0m0-7h0m0 8h0m0-9h0m0 11h0m1-11h0m0 6h0m0-8h0m0 9h0m0-4h0m0 7h0m1-1h0m0-8h0m0 6h0m0-5h0m0 1h0m0 2h0m0-7h0m0-1h0m1 15h0m0-9h0m0 8h0m0 6h0m0-3h0m0-5h0m0-9h0m0 6h0m1-1h0m0-2h0m0-1h0m0 11h0m0-1h0m0-3h0m0-8h0m0 5h0m0-7h0m1 6h0m0-1h0m0-2h0m0-3h0m0 7h0m0 2h0m1-4h0m0 5h0m0-13h0m0 2h0m0 4h0m0-7h0m0 11h0m0-5h0m1 1h0m0-4h0m0-1h0m0 2h0m0-4h0m0 10h0m0 1h0m1-11h0m0 7h0m0-1h0m0-4h0m0 2h0m0 8h0m0-2h0m0-11h0m1 6h0m0-5h0m0 10h0m0-1h0m0-5h0m0 2h0m0-3h0m0-6h0m1 11h0m0-8h0m0 12h0m0-3h0m0 6h0m0-11h0m0 3h0m0-5h0m1 11h0m0-4h0m0-3h0m0 9h0m0-14h0m0 2h0m0 8h0m1-6h0m0 7h0m0 5h0m0-2h0m0-7h0m1 0h0m0-5h0m0 12h0m0-2h0m0-4h0m0 2h0m0-7h0m1 9h0m0-6h0m0 4h0m0-3h0m0-2h0m0-4h0m0 3h0m0 9h0m0 1h0m1-5h0m0 9h0m0-7h0m0 9h0m0-7h0m0 2h0m0-9h0m1 12h0m0-8h0m0-1h0m0-4h0m0 3h0m0 7h0m0-1h0m0-2h0m1-4h0m0 4h0m0-2h0m0 5h0m0-10h0m0-3h0m1 14h0m0-8h0m0-3h0m0 5h0m0-6h0m0-3h0m0 10h0m0 4h0m0 3h0m0-4h0m1 6h0m0-9h0m0 4h0m0 2h0m0-8h0m0 5h0m0-6h0m0-1h0m1 12h0m0-7h0m0 2h0m0 1h0m0-8h0m0 4h0m0-8h0m1 9h0m0-9h0m0 15h0m0-1h0m0-4h0m0 2h0m0-10h0m0 4h0m1 3h0m0 1h0m0 2h0m0 2h0m0 1h0m0-7h0m0 12h0m1-8h0m0 4h0m0-2h0m0-4h0m0-3h0m1 1h0m0 5h0m0-1h0m0 2h0m0-4h0m0-5h0m1 7h0m0-5h0m0-6h0m0-1h0m0 3h0m0 10h0m0-5h0m0 2h0m0-6h0m1 1h0m0 1h0m0 2h0m0-5h0m0-1h0m0 7h0m0 3h0m0 4h0m0-2h0m1-1h0m0-2h0m0-6h0m0 3h0m0 6h0m1-5h0m0 3h0m0-5h0m0-1h0m0 10h0m0-1h0m1-3h0m0-7h0m0-3h0m0 4h0m0 2h0m0 1h0m0 5h0m1-8h0m0 4h0m0-7h0m0 4h0m0 5h0m0 3h0m1-2h0m0 8h0m0-7h0m0-5h0m0 2h0m0-10h0m0 3h0m0 4h0m0-3h0m1 3h0m0-2h0m0-2h0m0 6h0m0 4h0m0-1h0m0 2h0m0 1h0m1-11h0m0 1h0m0 8h0m0-4h0m0 3h0m0-4h0m1-3h0m0 2h0m0 1h0m0 1h0m0 2h0m0 5h0m0-4h0m0 3h0m1-5h0m0-6h0m0 3h0m0 4h0m0 6h0m0-14h0m0 10h0m0 2h0m1-5h0m0 1h0m0 2h0m0-9h0m0-3h0m0 4h0m0 4h0m0-3h0m1-2h0m0-6h0m0-3h0m0 7h0m0-2h0m1 4h0m0-3h0m0 10h0m0-5h0m0 4h0m0 4h0m0-5h0m0-10h0m1 1h0m0 9h0m0-3h0m0-1h0m0-3h0m0 8h0m0 2h0m1-13h0m0 8h0m0-6h0m0 1h0m0 3h0m0 4h0m1 0h0m0 2h0m0-5h0m0-9h0m0 8h0m0-3h0m0-1h0m0 14h0m0-15h0m1 5h0m0 3h0m0-12h0m0 5h0m0 2h0m0 6h0m0 1h0m1 1h0m0-11h0m0-4h0m0 7h0m0 1h0m0 6h0m0-5h0m0-7h0m0 8h0m1-8h0m0-7h0m0 5h0m0 8h0m0-10h0m0 13h0m0-8h0m0 4h0m0-1h0m1 8h0m0-6h0m0 7h0m0-6h0m0-4h0m0 7h0m1-7h0m0-2h0m0 11h0m0-6h0m0 1h0m0 2h0m0-11h0m0-1h0m0-1h0m1 2h0m0 2h0m0-6h0m0 10h0m0-13h0m0 6h0m0 5h0m1 1h0m0-3h0m0 6h0m0 4h0m0 3h0m1-13h0m0 8h0m0-3h0m0-1h0m0-1h0m1 1h0m0 4h0m0 2h0m0 2h0m0-6h0m0-3h0m0 11h0m1-6h0m0 3h0m0 2h0m0-13h0m0 4h0m0 1h0m1 5h0m0-1h0m0-1h0m0 3h0m0 7h0m0-11h0m0-4h0m0 10h0m1-3h0m0-6h0m0 1h0m0 8h0m0-4h0m0-2h0m0 7h0m1-7h0m0-2h0m0-2h0m0 12h0m0-2h0m0-2h0m0-3h0m1-7h0m0 7h0m0-3h0m0-1h0m0 7h0m0 2h0m0-13h0m1 14h0m0-1h0m0-5h0m0-3h0m0 5h0m0-7h0m0-2h0m0-3h0m1 12h0m0-3h0m0 9h0m0 1h0m0-12h0m0 13h0m0 1h0m0-5h0m0-2h0m1 4h0m0-2h0m0-2h0m0-3h0m0-1h0m0 10h0m1-3h0m0 3h0m0 2h0m0-7h0m0-5h0m0 2h0m1 1h0m0 4h0m0-1h0m0 5h0m0-1h0m0-8h0m0-6h0m1 5h0m0 7h0m0-6h0m0 5h0m0-2h0m0-10h0m0 5h0m0-1h0m0-3h0m1 4h0m0 1h0m0 1h0m0-5h0m0-2h0m0 9h0m0-10h0m1 3h0m0-1h0m0 6h0m0-4h0m0 6h0m0 6h0m0-11h0m1-2h0m0-1h0m0 4h0m0 1h0m0 5h0m0-1h0m0 9h0m0-5h0m0-6h0m0 7h0m1-3h0m0 2h0m0 2h0m0-7h0m0 9h0m0-11h0m0-1h0m1 0h0m0 7h0m0-4h0m0 3h0m0-9h0m0 11h0m1-3h0m0 6h0m0-4h0m0-5h0m0-1h0m0-1h0m0 8h0m0-11h0m1 9h0m0-11h0m0 8h0m0-3h0m0 10h0m0-13h0m1 2h0m0 1h0m0-3h0m0 6h0m0-9h0m0-3h0m1 8h0m0-3h0m0 12h0m0-8h0m0 1h0m0 5h0m0-11h0m1-2h0m0 6h0m0 4h0m0 1h0m0-3h0m0-3h0m0 10h0m0-17h0m0 5h0m0 9h0m1-3h0m0 2h0m0-6h0m0-6h0m0 8h0m0-5h0m0-4h0m1 8h0m0-2h0m0 3h0m0 7h0m0-2h0m0-1h0m0-2h0m1 0h0m0-4h0m0 6h0m0-9h0m0 6h0m0-7h0m1-2h0m0 3h0m0 7h0m0-4h0m0 8h0m0-2h0m0-5h0m0 8h0m1-2h0m0-10h0m0 11h0m0-3h0m0-7h0m0 3h0m0-6h0m1 9h0m0 1h0m0-9h0m0 7h0m0-2h0m0 5h0m0-9h0m1 4h0m0-9h0m0 8h0m0-3h0m0-4h0m0-5h0m1 2h0m0 2h0m0 2h0m0 2h0m0 1h0m0 4h0m0-3h0m1-4h0m0 1h0m0-3h0m0-2h0m0 9h0m0-1h0m0 3h0m0-16h0m1 8h0m0-5h0m0 7h0m0 1h0m0-5h0m0-7h0m0 1h0m1 1h0m0 11h0m0-5h0m0-1h0m0-1h0m0 8h0m0-2h0m0 4h0m0-7h0m1 1h0m0-5h0m0 10h0m0-9h0m0-3h0m0 10h0m0-6h0m0 9h0m1-14h0m0 11h0m0-1h0m0-1h0m0 3h0m0 2h0m0 2h0m0 3h0m0-12h0m1 7h0m0-2h0m0-1h0m0 6h0m0-7h0m0 11h0m0-13h0m0 10h0m1-5h0m0-3h0m0-1h0m0 7h0m0-13h0m0 15h0m0 4h0m1-8h0m0 1h0m0-2h0m0 6h0m0 2h0m0-5h0m0-5h0m0-7h0m1 3h0m0 3h0m0 4h0m0 3h0m0 4h0m0-8h0m1 2h0m0-2h0m0-4h0m0 7h0m0-6h0m0 8h0m1-8h0m0 8h0m0-4h0m0 1h0m0-3h0m0-4h0m1-1h0m0 8h0m0-7h0m0 8h0m0-2h0m0 11h0m0-12h0m0-2h0m1 0h0m0 4h0m0-2h0m0 3h0m0 3h0m0 1h0m1-10h0m0 9h0m0-3h0m0 8h0m0-2h0m0 5h0m1-8h0m0-1h0m0 4h0m0-5h0m0 10h0m0-1h0m0-1h0m1-11h0m0 12h0m0-4h0m0-7h0m0 5h0m0-7h0m0 14h0m0-4h0m0-12h0m1 2h0m0 10h0m0-2h0m0-7h0m0 3h0m0 8h0m0-14h0m0 8h0m0-10h0m1 7h0m0 1h0m0-8h0m0 4h0m0 6h0m1-2h0m0-4h0m0 3h0m0-4h0m0-1h0m0 7h0m0 2h0m1-3h0m0 6h0m0-9h0m0-1h0m0 9h0m0-4h0m0 7h0m0-4h0m1 0h0m0 3h0m0 1h0m0-10h0m0 12h0m0-10h0m0 3h0m1 6h0m0-6h0m0-2h0m0 5h0m0-13h0m0 4h0m1-3h0m0 5h0m0 7h0m0-11h0m0 12h0m0-2h0m0-8h0m0 5h0m1-2h0m0 6h0m0-9h0m0 6h0m0-9h0m0-2h0m1 9h0m0 2h0m0 3h0m0 1h0m0-8h0m0-1h0m0-1h0m0-2h0m1 8h0m0 5h0m0-7h0m0 3h0m0-5h0m0-5h0m0 1h0m0 12h0m1-2h0m0-7h0m0 3h0m0 2h0m0-8h0m0-1h0m0 12h0m0-13h0m1-2h0m0 3h0m0 5h0m0-1h0m0 7h0m0-5h0m0 1h0m0-6h0m0 9h0m1-9h0m0 5h0m0-9h0m0 6h0m0 6h0m0-14h0m1 11h0m0-11h0m0 8h0m0 6h0m0-10h0m0 3h0m0-4h0m1 2h0m0-7h0m0 5h0m0 6h0m0-10h0m0 11h0m0-4h0m1 2h0m0 6h0m0-10h0m0 12h0m0-7h0m0 1h0m0-9h0m0 12h0m0-8h0m1 2h0m0-1h0m0-1h0m0 7h0m0-3h0m0 5h0m0 1h0m1 2h0m0-11h0m0 1h0m0-5h0m0 7h0m0-6h0m0-2h0m0 10h0m1-4h0m0 8h0m0-7h0m0-2h0m0 4h0m0-9h0m0 1h0m1-1h0m0 7h0m0-1h0m0 2h0m0-3h0m0-4h0m0 9h0m0-8h0m0 10h0m1-5h0m0-6h0m0-3h0m0 4h0m0-5h0m0-5h0m1 10h0m0 6h0m0-9h0m0-4h0m0 1h0m0-3h0m1 8h0m0-8h0m0 3h0m0-5h0m0 6h0m0 3h0m0 8h0m0-5h0m0 1h0m1-4h0m0 7h0m0-5h0m0 8h0m0-13h0m0 14h0m0-5h0m1 7h0m0-11h0m0 2h0m0-3h0m0 5h0m0-10h0m0 11h0m0-12h0m1 8h0m0-3h0m0 10h0m0-6h0m0 10h0m0-6h0m1 2h0m0-4h0m0-1h0m0 6h0m0-12h0m0 4h0m0 10h0m0-13h0m1 4h0m0 3h0m0-6h0m0-3h0m1 2h0m0 4h0m0-2h0m0 6h0m0-3h0m0 4h0m0 4h0m1-5h0m0 5h0m0 3h0m0 2h0m0-8h0m0-4h0m0-2h0m1 13h0m0-4h0m0-6h0m0-1h0m0 3h0m0-6h0m0-3h0m1 2h0m0 9h0m0-1h0m0 2h0m0-11h0m0 4h0m0 3h0m0 5h0m1-11h0m0 3h0m0-5h0m0-1h0m0 14h0m0-7h0m0 1h0m0 2h0m1-3h0m0-3h0m0-1h0m0 6h0m0 2h0m0 1h0m0 1h0m1-5h0m0-2h0m0 8h0m0 3h0m0-8h0m0-4h0m0-2h0m1 9h0m0-5h0m0 3h0m0-5h0m0 10h0m1-5h0m0-4h0m0 2h0m0-3h0m0-2h0m1 10h0m0 2h0m0-5h0m0 9h0m0-14h0m0 11h0m0-7h0m1-2h0m0 1h0m0 1h0m0 6h0m0 4h0m0-6h0m0-1h0m1 0h0m0 3h0m0 1h0m0-6h0m1 1h0m0-5h0m0 3h0m0 3h0m0 4h0m0-3h0m1 0h0m0-5h0m0 2h0m0-6h0m0 2h0m0 11h0m0-3h0m1-7h0m0 2h0m0 2h0m0-5h0m0-5h0m0 11h0m0 3h0m1-5h0m0 1h0m0-2h0m0-2h0m0-1h0m0-6h0m1 6h0m0-2h0m0 4h0m0 3h0m0 1h0m0 5h0m0-14h0m1-1h0m0 2h0m0 12h0m0 3h0m0-11h0m0 6h0m0-4h0m0 1h0m1 4h0m0-8h0m0 7h0m0-5h0m0-3h0m0 4h0m0-5h0m0 7h0m1-5h0m0-3h0m0 12h0m0-13h0m0-4h0m0 9h0m0 2h0m1-3h0m0-2h0m0 6h0m0-7h0m0-2h0m0 8h0m0 4h0m1-5h0m0-3h0m0 4h0m0 4h0m0 2h0m0-3h0m1-4h0m0-9h0m0 6h0m0 5h0m0-9h0m0 14h0m0-4h0m1-8h0m0 6h0m0-10h0m0 3h0m0 9h0m0-3h0m0 7h0m0-9h0m0 12h0m1-9h0m0 2h0m0 7h0m0-13h0m0 9h0m0 3h0m0-10h0m1 5h0m0-1h0m0-5h0m0 8h0m0-4h0m0-5h0m0 4h0m1 1h0m0 2h0m0 1h0m0-9h0m0 1h0m0-5h0m0 7h0m1 6h0m0-3h0m0-5h0m0 3h0m0-12h0m0 3h0m1-3h0m0 4h0m0 4h0m0-6h0m0 9h0m0-5h0m1-6h0m0 7h0m0 5h0m0-9h0m0 5h0m0-3h0m0 4h0m0 5h0m1-2h0m0-6h0m0 3h0m0 4h0m1 0h0m0-10h0m0 7h0m0-1h0m0-2h0m0-1h0m1-4h0m0 9h0m0-6h0m0 7h0m0 2h0m0 1h0m0-6h0m1 1h0m0 8h0m0 1h0m0-2h0m0-3h0m0 8h0m0-11h0m0-3h0m1 8h0m0-1h0m0 4h0m0-5h0m0-7h0m0-1h0m0 7h0m0-5h0m1 1h0m0-2h0m0 7h0m0 1h0m0-4h0m0-7h0m0 14h0m1-7h0m0-9h0m0 7h0m0-1h0m0 6h0m1-8h0m0 2h0m0 2h0m0-5h0m0 8h0m0 4h0m1 0h0m0-5h0m0 1h0m0-3h0m0 5h0m0-11h0m0 4h0m0-1h0m1 4h0m0-6h0m0 9h0m0-10h0m0 4h0m0 7h0m1-5h0m0-4h0m0 5h0m0-2h0m0-4h0m0 7h0m0 6h0m0-1h0m0 3h0m1-3h0m0 4h0m0-5h0m0-7h0m0 5h0m0 4h0m0-5h0m1-1h0m0 6h0m0-1h0m0 4h0m0-7h0m0 9h0m0 1h0m0-15h0m1 7h0m0-1h0m0 5h0m0-2h0m0-6h0m0 10h0m0-13h0m1 7h0m0-1h0m0-4h0m0 7h0m0-6h0m0 7h0m0 4h0m1-9h0m0 8h0m0-2h0m0-3h0m0 9h0m0-3h0m0-10h0m1 3h0m0-4h0m0 14h0m0-5h0m0-2h0m0-6h0m0-3h0m1 6h0m0-3h0m0 12h0m0-2h0m0-3h0m0-8h0m1 6h0m0 4h0m0-10h0m0 9h0m0-4h0m0-4h0m0 3h0m1 6h0m0-5h0m0-6h0m0 5h0m0-2h0m0-5h0m0 12h0m1-9h0m0 4h0m0 2h0m0-8h0m0 12h0m0 1h0m0-4h0m0-4h0m0-7h0m1 3h0m0 3h0m0 4h0m0 1h0m0-11h0m0 8h0m1 1h0m0-2h0m0 3h0m0-6h0m0 8h0m0-10h0m0 11h0m0-12h0m1-1h0m0 3h0m0 12h0m0-9h0m0 4h0m0-1h0m0 2h0m1-9h0m0 2h0m0 2h0m0-5h0m0-1h0m0 8h0m1-10h0m0 7h0m0 1h0m0-5h0m0 3h0m0 5h0m0 5h0m1-10h0m0 2h0m0 2h0m0 3h0m0-9h0m1-2h0m0 6h0m0-5h0m0 2h0m0-6h0m0-3h0m0 14h0m1-6h0m0 2h0m0-6h0m0 3h0m0-9h0m0 13h0m1 1h0m0 2h0m0-4h0m0-2h0m0-4h0m0 3h0m1-2h0m0 7h0m0-4h0m0-5h0m0 11h0m0-4h0m1 1h0m0-8h0m0 4h0m0-5h0m0 4h0m0 3h0m0 4h0m0 3h0m0 1h0m1-6h0m0-4h0m0 3h0m0 2h0m0-6h0m0 7h0m1-1h0m0-5h0m0 7h0m0-4h0m0-5h0m0 10h0m1-7h0m0 3h0m0-6h0m0 8h0m0-13h0m0-5h0m0 8h0m0-7h0m0-4h0m1 18h0m0-8h0m0 1h0m0 2h0m0 2h0m0-10h0m1 5h0m0-4h0m0 3h0m0 3h0m0 6h0m0-13h0m0 8h0m0-11h0m0 12h0m1-5h0m0 6h0m0-3h0m0-7h0m0 2h0m0-3h0m1 6h0m0 4h0m0-1h0m0 4h0m0 1h0m0 1h0m0 1h0m1-5h0m0 11h0m0-9h0m0 6h0m0-10h0m0 6h0m0-7h0m0 9h0m1-8h0m0 4h0m0-3h0m0-4h0m0 8h0m0 2h0m0 5h0m1-9h0m0 5h0m0-1h0m0-5h0m0 2h0m0-3h0m0-3h0m0-4h0m1 4h0m0 4h0m0 3h0m0-4h0m0 5h0m1-3h0m0 4h0m0 5h0m0-2h0m0-5h0m0-3h0m0-6h0m1 15h0m0-9h0m0 6h0m0-4h0m0 1h0m0 7h0m0-12h0m1 4h0m0-1h0m0 2h0m0-4h0m0-2h0m0 10h0m0-2h0m0-10h0m1 4h0m0 1h0m0 7h0m0-6h0m0-4h0m0 8h0m0-2h0m0-7h0m1 3h0m0-2h0m0 6h0m0 4h0m0-7h0m0-4h0m0 9h0m1-6h0m0 9h0m0-3h0m0-5h0m0 4h0m0-2h0m1-5h0m0 12h0m0-9h0m0 3h0m0 8h0m0-3h0m0-2h0m1 6h0m0-2h0m0-1h0m0-3h0m0-3h0m0 10h0m1-12h0m0 4h0m0 6h0m0-5h0m0-7h0m0-3h0m0 7h0m0 4h0m1-4h0m0 4h0m0-8h0m0 12h0m0-6h0m0-3h0m1 4h0m0-1h0m0-9h0m0 7h0m0-2h0m0 6h0m0 2h0m1-1h0m0 5h0m0-14h0m0 5h0m0 3h0m0-6h0m0 15h0m1-4h0m0-11h0m0 5h0m0 4h0m0-2h0m0-4h0m0-4h0m1-1h0m0 1h0m0 6h0m0 5h0m0-6h0m0-8h0m0 6h0m0 6h0m0 3h0m1-15h0m0 7h0m0 6h0m0-9h0m0 8h0m0-3h0m0 6h0m1-8h0m0-1h0m0-3h0m0 6h0m0 2h0m0 7h0m0-4h0m1-9h0m0 3h0m0 3h0m0-9h0m0 11h0m0 4h0m1-10h0m0 5h0m0-7h0m0 5h0m0-8h0m1 3h0m0 4h0m0-6h0m0-2h0m0 14h0m0-8h0m0 4h0m1-3h0m0 1h0m0-4h0m0 8h0m0-3h0m0-7h0m0-1h0m0-3h0m1 2h0m0 7h0m0 2h0m0 1h0m0-4h0m0-2h0m1-2h0m0 4h0m0 2h0m0-8h0m0 10h0m0-11h0m0 4h0m1 3h0m0-6h0m0 4h0m0-9h0m0 7h0m0-4h0m1 5h0m0 2h0m0-4h0m0 9h0m0-2h0m1-4h0m0-7h0m0 9h0m0 1h0m0-7h0m0 3h0m1 1h0m0-4h0m0-5h0m0 7h0m0-5h0m0 9h0m0-14h0m1 4h0m0 1h0m0-4h0m0 5h0m0 8h0m0-6h0m0 4h0m0-3h0m0-10h0m1 2h0m0-1h0m0 12h0m0-2h0m0-4h0m0 2h0m0-6h0m1 6h0m0-3h0m0-3h0m0 7h0m0 1h0m1-2h0m0 3h0m0 1h0m0 4h0m0-1h0m0-10h0m1 11h0m0-6h0m0-2h0m0-1h0m0 4h0m0-7h0m1 7h0m0-1h0m0-1h0m0 4h0m0-9h0m0 3h0m0-6h0m1 4h0m0 4h0m0-5h0m0 7h0m0 3h0m1-1h0m0 2h0m0 2h0m0-8h0m0-4h0m0 1h0m0-3h0m1 7h0m0 5h0m0-10h0m0 2h0m0-3h0m0 7h0m0 3h0m0 6h0m0-2h0m1 2h0m0-8h0m0 1h0m0-3h0m0 6h0m0 1h0m0 5h0m0-14h0m1 1h0m0 4h0m0 1h0m0-2h0m0-5h0m0 11h0m0 2h0m1-9h0m0 1h0m0 2h0m0-4h0m0-1h0m0 7h0m0-9h0m0-1h0m1 5h0m0-9h0m0 10h0m0 6h0m0-2h0m0-1h0m0-7h0m1 0h0m0 3h0m0 7h0m0-1h0m0-10h0m0 8h0m1-2h0m0 3h0m0-7h0m0 8h0m0 1h0m0-7h0m0 10h0m1-4h0m0-7h0m0 1h0m0 3h0m0 4h0m1-6h0m0 6h0m0-1h0m0 3h0m0 1h0m0-7h0m0 8h0m0-11h0m1 7h0m0-5h0m0 6h0m0 6h0m0-11h0m0 3h0m0 4h0m0-10h0m1 5h0m0-3h0m0-3h0m0 15h0m0-2h0m0-6h0m0 2h0m1-2h0m0-1h0m0-8h0m0 5h0m0-1h0m0-3h0m0 13h0m0-4h0m1-10h0m0 16h0m0-6h0m0 2h0m0-5h0m0 6h0m0-12h0m1 10h0m0-4h0m0 1h0m0-3h0m0 8h0m0 2h0m0 2h0m0 1h0m1-1h0m0-6h0m0 5h0m0-12h0m0-1h0m0 4h0m0 1h0m1-2h0m0 3h0m0 6h0m0-5h0m0 2h0m0 4h0m0 3h0m1-4h0m0-4h0m0-1h0m0 6h0m0 2h0m0-9h0m0-2h0m0-3h0m0-4h0m1 4h0m0-3h0m0 5h0m0 5h0m0-1h0m0-2h0m1-5h0m0-3h0m0 9h0m0-4h0m0-9h0m0 15h0m1-11h0m0 5h0m0 3h0m0 1h0m0-8h0m0 2h0m0 9h0m0 3h0m1-7h0m0-1h0m0 3h0m0-4h0m0-2h0m0-2h0m0 11h0m1-8h0m0 6h0m0 1h0m0-5h0m0-4h0m0 10h0m0-15h0m0 4h0m1 4h0m0-5h0m0 9h0m0-8h0m0 2h0m0-5h0m0-2h0m1 5h0m0-3h0m0 7h0m0-12h0m0 4h0m0-2h0m1 8h0m0-4h0m0 3h0m0 4h0m0 1h0m0-12h0m0 2h0m1 1h0m0-2h0m0 5h0m0 2h0m0-10h0m0 14h0m0-2h0m1-10h0m0 12h0m0 1h0m0-8h0m0-4h0m0 2h0m0 7h0m0-1h0m0-1h0m1-2h0m0 7h0m0-14h0m0 2h0m0-4h0m0 11h0m0-5h0m1 1h0m0 3h0m0-5h0m0-1h0m0 9h0m0 2h0m0 3h0m1-6h0m0-3h0m0-7h0m0 3h0m0-6h0m0 8h0m1 0h0m0 7h0m0-8h0m0 4h0m0 1h0m0-8h0m1-1h0m0 3h0m0-8h0m0 9h0m0-8h0m0 11h0m0-9h0m0 14h0m1-1h0m0 1h0m0-5h0m0-1h0m0 8h0m0-12h0m0 6h0m1 7h0m0-5h0m0-3h0m0-1h0m0 5h0m0 2h0m0 3h0m0-11h0m1 1h0m0 1h0m0 5h0m0-2h0m0 7h0m0-12h0m1 5h0m0-6h0m0-1h0m0-4h0m0 6h0m0 1h0m0 3h0m0 7h0m0-3h0m0-11h0m1 2h0m0 3h0m0 3h0m0-7h0m0 8h0m1-4h0m0 5h0m0-1h0m0-2h0m0-4h0m0 10h0m1-11h0m0 9h0m0-6h0m0 7h0m0-5h0m0 2h0m0-8h0m1 3h0m0 1h0m0 6h0m0-2h0m0 8h0m0-5h0m0-4h0m0 5h0m0 2h0m1 2h0m0-4h0m0-5h0m0-4h0m0 6h0m0 4h0m0-9h0m0-2h0m1 4h0m0 6h0m0 5h0m0-10h0m0 1h0m0-5h0m0-1h0m0 8h0m1 1h0m0-5h0m0 6h0m0 3h0m0-8h0m0 10h0m0-7h0m0-6h0m1 5h0m0-2h0m0-6h0m0 9h0m0 6h0m0-1h0m0-2h0m1-8h0m0 5h0m0 4h0m0-1h0m0-4h0m0 6h0m0-12h0m0 13h0m1-16h0m0 8h0m0 7h0m0-6h0m0 5h0m0-4h0m0-5h0m0 12h0m1-2h0m0-2h0m0 3h0m0-5h0m0-4h0m0 10h0m0 3h0m1-3h0m0-4h0m0 5h0m0-8h0m0 6h0m0-8h0m1 6h0m0-2h0m0-2h0m0 8h0m0-9h0m0-1h0m1 3h0m0-6h0m0-3h0m0 11h0m0 2h0m0-6h0m0-2h0m1-1h0m0 10h0m0-13h0m0 5h0m0 4h0m0 1h0m0-4h0m1 4h0m0-9h0m0 11h0m0-5h0m0-2h0m0-3h0m1 9h0m0-4h0m0 3h0m0-4h0m0-3h0m0 13h0m0 1h0m0-5h0m0-12h0m1 3h0m0 10h0m0-6h0m0-2h0m0-3h0m0 6h0m0 1h0m0 7h0m0-6h0m1-3h0m0 5h0m0-2h0m0-6h0m0-1h0m0 11h0m1-5h0m0-1h0m0 5h0m0-1h0m0-12h0m0 3h0m0 4h0m0-1h0m1-4h0m0-2h0m0 8h0m0 4h0m0-7h0m0-7h0m1 5h0m0 2h0m0 9h0m0-14h0m0 7h0m0-10h0m1 0h0m0 8h0m0 2h0m0-9h0m0 10h0m0-7h0m0 3h0m1-10h0m0 3h0m0 7h0m0-2h0m0 6h0m0-2h0m0 4h0m1-6h0m0 1h0m0-2h0m0-2h0m0-5h0m0 4h0m0 13h0m1-5h0m0 1h0m0-5h0m0-7h0m0 1h0m0 1h0m0 6h0m0-3h0m1 3h0m0 1h0m0-12h0m0 6h0m0 7h0m0-8h0m0-1h0m0 12h0m0-14h0m1 12h0m0-1h0m0-6h0m0-4h0m0-1h0m0 7h0m0 1h0m0-10h0m1 1h0m0 6h0m0-1h0m0 2h0m0-6h0m0 8h0m0 1h0m0 1h0m1-7h0m0 1h0m0 1h0m0 2h0m0-7h0m0 8h0m1-2h0m0 1h0m0 1h0m0-15h0m0 6h0m0-4h0m0 3h0m0 5h0m0-1h0m1 1h0m0-5h0m0-3h0m0-1h0m0-3h0m0-1h0m0 12h0m0 2h0m0-4h0m1-4h0m0 6h0m0 3h0m0-4h0m0-2h0m0-4h0m1 9h0m0-5h0m0 1h0m0 8h0m0-3h0m0-3h0m0 7h0m0-11h0m1 6h0m0 5h0m0-6h0m0 5h0m0-1h0m0-6h0m0 9h0m0 1h0m1-5h0m0 9h0m0-5h0m0-5h0m0-1h0m0-1h0m0 5h0m0-7h0m0-2h0m0 13h0m1-9h0m0 8h0m0 5h0m0-2h0m0 3h0m0-7h0m0-2h0m0-4h0m1 7h0m0 6h0m0-9h0m0 8h0m0-13h0m0 9h0m0-5h0m0-6h0m0 14h0m1-12h0m0 9h0m0-8h0m0 9h0m0 1h0m0-6h0m0-7h0m0 6h0m1-4h0m0-1h0m0 7h0m0-9h0m0 5h0m0 3h0m0 7h0m0-5h0m0 1h0m1 1h0m0-4h0m0-3h0m0 4h0m0-6h0m1 8h0m0-1h0m0-4h0m0-4h0m0 6h0m0 5h0m0-8h0m0 11h0m1-6h0m0 6h0m0-3h0m0-4h0m0-2h0m0-1h0m0-1h0m1 2h0m0-2h0m0-4h0m0 3h0m0 8h0m0-2h0m0 3h0m1-11h0m0 7h0m0 3h0m0 5h0m0-14h0m0 5h0m0-3h0m1-1h0m0 7h0m0-3h0m0 5h0m0-7h0m0 10h0m1-8h0m0 7h0m0-12h0m0 7h0m0 2h0m0-6h0m1 9h0m0-2h0m0-3h0m0-7h0m0 14h0m0-8h0m0-2h0m1 0h0m0-3h0m0 10h0m0-5h0m0 1h0m0 2h0m0 3h0m0 1h0m1-6h0m0 7h0m0-8h0m0-7h0m0 4h0m0 6h0m0 4h0m0-11h0m1 12h0m0-8h0m0 3h0m0-4h0m0 6h0m0-7h0m0 11h0m1-2h0m0-7h0m0 1h0m0 3h0m0-8h0m0 12h0m0-10h0m1 0h0m0-6h0m0 9h0m0-7h0m0 2h0m0 8h0m0 3h0m1-9h0m0 4h0m0-1h0m0-5h0m0 10h0m0-2h0m0 7h0m1-17h0m0 12h0m0-3h0m0-8h0m0-5h0m0 7h0m0 10h0m0-9h0m0 3h0m1 0h0m0-2h0m0 4h0m0 2h0m0 2h0m0 5h0m1-6h0m0-5h0m0 6h0m0-9h0m0 5h0m0-8h0m0 15h0m0-17h0m1 10h0m0 2h0m0 3h0m0-11h0m0 1h0m0 3h0m0 8h0m0-15h0m0-2h0m1 10h0m0-2h0m0-3h0m1 2h0m0 2h0m0-6h0m0 2h0m0 8h0m0-15h0m1 4h0m0 1h0m0 3h0m0-5h0m0 8h0m1-5h0m0 1h0m0 4h0m0-10h0m0 3h0m0 5h0m0 4h0m1-3h0m0-6h0m0 5h0m0-7h0m0-2h0m0 5h0m0 1h0m1-1h0m0 2h0m0 4h0m0 2h0m0-9h0m0-6h0m0 10h0m1 1h0m0-1h0m0 5h0m0-9h0m0 8h0m0-5h0m0-4h0m0-1h0m1 4h0m0 1h0m0 1h0m0-11h0m0-2h0m0 7h0m0 1h0m0-2h0m1 8h0m0 2h0m0-4h0m0-3h0m0-4h0m0 3h0m1 2h0m0-4h0m0 1h0m0-3h0m0-1h0m0-4h0m1 11h0m0-3h0m0 7h0m0 1h0m0-12h0m0-2h0m0-1h0m0 13h0m0-8h0m1-3h0m0 10h0m0-3h0m0-2h0m0-1h0m0 7h0m0 2h0m0 3h0m1-13h0m0 9h0m0-1h0m0-2h0m0 6h0m0-8h0m0-2h0m1 5h0m0 1h0m0-3h0m0 4h0m0 3h0m0-10h0m1 6h0m0-2h0m0 7h0m0-11h0m0 7h0m0 7h0m0-12h0m1 7h0m0 3h0m0-6h0m0 7h0m0-14h0m0-3h0m0 9h0m0-1h0m0-3h0m1 5h0m0-3h0m0-5h0m0 2h0m0 10h0m0-1h0m1-5h0m0 1h0m0 5h0m0-3h0m0-6h0m0 14h0m0-4h0m1-5h0m0-2h0m0-1h0" stroke="#000" stroke-width="3.9" stroke-linecap="round" fill="none"/>
<path d="M173.5 63.2h0m5.8-3.7h0m34.7 3.7h0m38.7 0h0m38.6 0h0m126.7 0h0m51.2 0h0m-224 36h0m-12 11.2h0m2.1 22.9h0m130.7-14.9h0m11.2 16h0m12.8 80.8h0m-8.8 44h0m64-155.2h0m24.8-1.9h0m13.3 12.3h0m-33 13.9h0m53-23.5h0m33.9-4.5h0m-28 145.8h0m66.3-182.9h0m179.7 0h0m6.1 0h0m28-1.9h0m-128.8 35.2h0m142.7 2.7h0m31.2-1.9h0m88.8-0.8h0m-284.8 47.8h0m5.1-4h0m124.8 66.1h0m26.9 90.9h0m95.2-139.2h0m109.7-93.8h0m221.1-1.9h0m70.9 0h0m-236 36.3h0m-4 6.1h0m105.1-7.5h0m6.4 0h0m-3.2 11.2h0m-132 15.8h0m171.7-6.2h0m-26.9 18.2h0m-222.9 26.1h0m88-1.1h0" stroke="#ffa500" stroke-width="3.8" stroke-linecap="round" fill="none"/>
<path d="M162.2 320.9V35.5M1302.8 320.9V35.5" stroke="#800080" stroke-width="2.08" stroke-dasharray="2.08 3.44" fill="none"/>
</g>
<path d="M105.5 35.5H1485.5M105.5 321.5H1485.5M105.5 35.5V321.5M1485.5 35.5V321.5" stroke="#000" stroke-width="1.11" fill="none" stroke-linecap="square"/>
<path d="M162.5 321.5v4.86M346.5 321.5v4.86M530.5 321.5v4.86M715.5 321.5v4.86M899.5 321.5v4.86M1083.5 321.5v4.86M1267.5 321.5v4.86M1452.5 321.5v4.86" stroke="#000" stroke-width="1.11" fill="none"/>
<text x="157.83" y="341.7" font-size="14.44" textLength="8.84" lengthAdjust="spacingAndGlyphs">0</text>
<text x="328.83" y="341.7" font-size="14.44" textLength="35.35" lengthAdjust="spacingAndGlyphs">2500</text>
<text x="513.08" y="341.7" font-size="14.44" textLength="35.35" lengthAdjust="spacingAndGlyphs">5000</text>
<text x="697.33" y="341.7" font-size="14.44" textLength="35.35" lengthAdjust="spacingAndGlyphs">7500</text>
<text x="877.16" y="341.7" font-size="14.44" textLength="44.18" lengthAdjust="spacingAndGlyphs">10000</text>
<text x="1061.41" y="341.7" font-size="14.44" textLength="44.18" lengthAdjust="spacingAndGlyphs">12500</text>
<text x="1245.66" y="341.7" font-size="14.44" textLength="44.18" lengthAdjust="spacingAndGlyphs">15000</text>
<text x="1429.91" y="341.7" font-size="14.44" textLength="44.18" lengthAdjust="spacingAndGlyphs">17500</text>
<path d="M100.6 42.5h4.86M100.6 83.5h4.86M100.6 124.5h4.86M100.6 165.5h4.86M100.6 206.5h4.86M100.6 247.5h4.86M100.6 288.5h4.86" stroke="#000" stroke-width="1.11" fill="none"/>
<text x="73.69" y="47.3" font-size="14.44" textLength="22.09" lengthAdjust="spacingAndGlyphs">9.3</text>
<text x="73.69" y="88.3" font-size="14.44" textLength="22.09" lengthAdjust="spacingAndGlyphs">9.2</text>
<text x="73.69" y="129.3" font-size="14.44" textLength="22.09" lengthAdjust="spacingAndGlyphs">9.1</text>
<text x="73.69" y="170.4" font-size="14.44" textLength="22.09" lengthAdjust="spacingAndGlyphs">9.0</text>
<text x="73.69" y="211.4" font-size="14.44" textLength="22.09" lengthAdjust="spacingAndGlyphs">8.9</text>
<text x="73.69" y="252.4" font-size="14.44" textLength="22.09" lengthAdjust="spacingAndGlyphs">8.8</text>
<text x="73.69" y="293.4" font-size="14.44" textLength="22.09" lengthAdjust="spacingAndGlyphs">8.7</text>
<text x="696.69" y="27.2" font-size="17.33" textLength="57.93" lengthAdjust="spacingAndGlyphs">AGASC</text><text x="759.92" y="27.2" font-size="17.33" textLength="17.75" lengthAdjust="spacingAndGlyphs">ID</text><text x="782.97" y="27.2" font-size="17.33" textLength="111.34" lengthAdjust="spacingAndGlyphs">881985216.0</text>
<text x="714.83" y="312" font-size="14.44" textLength="35.35" lengthAdjust="spacingAndGlyphs">9514</text>
<rect x="1361.4" y="42.5" width="117.2" height="27" rx="2.8" fill="#fff" fill-opacity="0.8" stroke="#ccc" stroke-opacity="0.85" stroke-width="1.11"/>
<path d="M1366.9 54H1394.7" stroke="#008000" stroke-width="2.5" stroke-linecap="square"/>
<text x="1407.3" y="58.8" font-size="14.44" text-anchor="start" textLength="29.40" lengthAdjust="spacingAndGlyphs">mag</text>
<text x="1436.8" y="60.7" font-size="11.27" text-anchor="start" textLength="35.00" lengthAdjust="spacingAndGlyphs" font-style="italic">AGASC</text>
<rect x="1348.5" y="247.5" width="130" height="67" rx="2.8" fill="#fff" fill-opacity="0.8" stroke="#ccc" stroke-opacity="0.85" stroke-width="1.11"/>
<path d="M1367.5 260.5h0" stroke="#f00" stroke-width="4" stroke-linecap="round"/>
<path d="M1367.5 281.5h0" stroke="#ffa500" stroke-width="4" stroke-linecap="round"/>
<path d="M1367.5 302.5h0" stroke="#000" stroke-width="4" stroke-linecap="round"/>
<text x="1392.50" y="264" font-size="14.44" textLength="22.75" lengthAdjust="spacingAndGlyphs">not</text><text x="1419.66" y="264" font-size="14.44" textLength="20.04" lengthAdjust="spacingAndGlyphs">OK</text>
<text x="1392.50" y="285" font-size="14.44" textLength="80.06" lengthAdjust="spacingAndGlyphs">Highlighted</text>
<text x="1392.50" y="306" font-size="14.44" textLength="20.04" lengthAdjust="spacingAndGlyphs">OK</text>
<g clip-path="url(#c2)">
<path d="M162 551h0m0 18h0m0-33h0m0-4h0m1-6h0m0 4h0m0 13h0m0-18h0m0 37h0m0-30h0m0-5h0m0 10h0m0-33h0m0 3h0m0 8h0m1-12h0m0 11h0m0 25h0m0 11h0m0 15h0m0-12h0m0-21h0m0 14h0m0-6h0m0 21h0m0-17h0m1 9h0m0-20h0m0-14h0m0 33h0m0 12h0m0-25h0m0-35h0m0 43h0m0-20h0m0 10h0m0-22h0m0-7h0m0 26h0m0-13h0m1 40h0m0-25h0m0 29h0m0-26h0m0 15h0m0 8h0m0-28h0m0 17h0m0-4h0m0-2h0m0-13h0m1-12h0m0 9h0m0-1h0m0-24h0m0 28h0m0-10h0m0-6h0m0 7h0m0 4h0m0-29h0m0 27h0m1-25h0m0 6h0m0 21h0m0-12h0m0 6h0m0 12h0m0-7h0m0-9h0m0 11h0m0 9h0m0-36h0m0-2h0m1 0h0m0 28h0m0 14h0m0 18h0m0-26h0m0-33h0m0 58h0m0-4h0m0-37h0m0 3h0m0 44h0m0-24h0m0-15h0m0 31h0m1-42h0m0 36h0m0-39h0m0 17h0m0 10h0m0 16h0m0-21h0m0-10h0m0 4h0m0-8h0m0-14h0m0 35h0m1-16h0m0-16h0m0 9h0m0-16h0m0-15h0m0 28h0m0-12h0m0 38h0m0-31h0m0-9h0m0 26h0m0-41h0m0 49h0m0-55h0m1 30h0m0 8h0m0 1h0m0-6h0m0 18h0m0 6h0m0-17h0m0-15h0m0 18h0m0-17h0m0 27h0m0-6h0m1 1h0m0-22h0m0 19h0m0 10h0m0-20h0m0 32h0m0 5h0m0-30h0m0 9h0m0 1h0m0-15h0m0 20h0m1-15h0m0-9h0m0-18h0m0 19h0m0-8h0m0 34h0m0-52h0m0 50h0m0-61h0m0 35h0m0 18h0m0-51h0m0 28h0m1-7h0m0 10h0m0-13h0m0 5h0m0 15h0m0-21h0m0 33h0m0-26h0m0 21h0m0-40h0m1 41h0m0-33h0m0 10h0m0 1h0m0-36h0m0 51h0m0-18h0m0-1h0m0 18h0m0-5h0m1-40h0m0 40h0m0-20h0m0-9h0m0-12h0m0 57h0m0-33h0m0-26h0m0 45h0m0-27h0m0 15h0m0 20h0m0-31h0m1 22h0m0-23h0m0 30h0m0-33h0m0 51h0m0-35h0m0-27h0m0 10h0m0 13h0m0-1h0m0-30h0m0 36h0m1 6h0m0-4h0m0-15h0m0 25h0m0 7h0m0-10h0m0-10h0m0 14h0m0 2h0m0 10h0m0-35h0m1 21h0m0 5h0m0 32h0m0-22h0m0-26h0m0 14h0m0-8h0m0 26h0m0 6h0m0-11h0m0-30h0m0 37h0m0-3h0m1-27h0m0 20h0m0-11h0m0-7h0m0 6h0m0 22h0m0-6h0m0-18h0m0 31h0m0-19h0m0 8h0m0-31h0m1 0h0m0-13h0m0 1h0m0 4h0m0 12h0m0 24h0m0-34h0m0 26h0m0-39h0m0 30h0m0-2h0m0 28h0m0-36h0m1-3h0m0 43h0m0-14h0m0-2h0m0-30h0m0-10h0m0 39h0m0-36h0m0 23h0m0-18h0m0 52h0m0-15h0m0-20h0m1 27h0m0-36h0m0 28h0m0-19h0m0 10h0m0 18h0m0 2h0m0-21h0m0-22h0m0 39h0m0-42h0m0 57h0m1-17h0m0-14h0m0 30h0m0-23h0m0 1h0m0 12h0m0-29h0m0 24h0m0-5h0m0-30h0m0 18h0m0-3h0m0-2h0m1 9h0m0 10h0m0 13h0m0-17h0m0-1h0m0 13h0m0-23h0m0 26h0m0-5h0m0 23h0m0-57h0m1 23h0m0 25h0m0-24h0m0-12h0m0 19h0m0-37h0m0 63h0m0-54h0m0 44h0m0-11h0m0-30h0m1 31h0m0 15h0m0-14h0m0-5h0m0 30h0m0-20h0m0-28h0m0 31h0m0-6h0m0 15h0m0 4h0m1-11h0m0 15h0m0-13h0m0 22h0m0-30h0m0 33h0m0-41h0m0-5h0m0 35h0m0-34h0m0 15h0m0-25h0m0 31h0m1-8h0m0-28h0m0 50h0m0-37h0m0 11h0m0 8h0m0-23h0m0 1h0m0-6h0m0 33h0m0 23h0m0-13h0m1-7h0m0-3h0m0-21h0m0-10h0m0 26h0m0 35h0m0-45h0m0 27h0m0-25h0m0 9h0m0 1h0m1-7h0m0 2h0m0-24h0m0 61h0m0-19h0m0-5h0m0-24h0m0 8h0m0-20h0m0 42h0m0-13h0m0-10h0m0 15h0m1-15h0m0-19h0m0 61h0m0-55h0m0 41h0m0-27h0m0 13h0m0-25h0m0 36h0m0-29h0m0 33h0m0-20h0m0-10h0m1 8h0m0-11h0m0 23h0m0-22h0m0 25h0m0 4h0m0-11h0m0-3h0m0 16h0m0-28h0m0-6h0m1 23h0m0-14h0m0 12h0m0-20h0m0-10h0m0-1h0m0 7h0m0 1h0m0 18h0m0 15h0m0-39h0m1 16h0m0 9h0m0 16h0m0-21h0m0 11h0m0-8h0m0 17h0m0-3h0m0-19h0m0-14h0m0 45h0m1-19h0m0 5h0m0-39h0m0 45h0m0-19h0m0 14h0m0-7h0m0 25h0m0-44h0m0 18h0m0-28h0m0 27h0m1 4h0m0-34h0m0 20h0m0 5h0m0 13h0m0-10h0m0-21h0m0 12h0m0 26h0m0-21h0m0-23h0m0-29h0m1 64h0m0-41h0m0 32h0m0 11h0m0-25h0m0 18h0m0 12h0m0-2h0m0-19h0m0-6h0m0-31h0m0-4h0m1 23h0m0 11h0m0 1h0m0-9h0m0-33h0m0 40h0m0-22h0m0 7h0m0-21h0m0 34h0m0-22h0m1 33h0m0-5h0m0-4h0m0-25h0m0 3h0m0 24h0m0-5h0m0-4h0m0 30h0m0-39h0m0 1h0m0 26h0m1 3h0m0-9h0m0-9h0m0-4h0m0 9h0m0 12h0m0-33h0m0-10h0m0 18h0m0-7h0m0-3h0m0 22h0m0-26h0m0-8h0m1-24h0m0 20h0m0 10h0m0-1h0m0-12h0m0-8h0m0 28h0m0-23h0m0 42h0m0-50h0m1 25h0m0 8h0m0-4h0m0-2h0m0-3h0m0 13h0m0 11h0m0-9h0m0 7h0m0-33h0m0 30h0m0-45h0m1 12h0m0 30h0m0-5h0m0-18h0m0 5h0m0 27h0m0-47h0m0 19h0m0 32h0m0-16h0m0-23h0m0-16h0m1-18h0m0 18h0m0 3h0m0 27h0m0-35h0m0 14h0m0 13h0m0 31h0m0-6h0m0-6h0m0-9h0m0-17h0m1 17h0m0-28h0m0 14h0m0 29h0m0 1h0m0-8h0m0 4h0m0-7h0m0-11h0m0 9h0m0-11h0m0 33h0m1 12h0m0 6h0m0-34h0m0-13h0m0 5h0m0-7h0m0-40h0m0 52h0m0-6h0m0-38h0m0 26h0m0-28h0m1 38h0m0-48h0m0-2h0m0 34h0m0 4h0m0-12h0m0 27h0m0-26h0m0 4h0m0 43h0m0-19h0m1-22h0m0 32h0m0-31h0m0-3h0m0-16h0m0 11h0m0-9h0m0 12h0m0 42h0m0-32h0m0 8h0m1-27h0m0 35h0m0-22h0m0 30h0m0-21h0m0 8h0m0 8h0m0 6h0m0-23h0m0-3h0m0 8h0m0-12h0m0-29h0m1 35h0m0-44h0m0 47h0m0-30h0m0-4h0m0-9h0m0 29h0m0 6h0m0 19h0m0-36h0m0 6h0m0 6h0m0 1h0m1-13h0m0 1h0m0-13h0m0 51h0m0-48h0m0 22h0m0-7h0m0-3h0m0 21h0m0-12h0m0 4h0m1-5h0m0 2h0m0-24h0m0 43h0m0-51h0m0 42h0m0 12h0m0-31h0m0 1h0m0 5h0m1 31h0m0-7h0m0 4h0m0-33h0m0 4h0m0 33h0m0 7h0m0 8h0m0 17h0m0-14h0m0-9h0m0 15h0m1 12h0m0-43h0m0-22h0m0 58h0m0-35h0m0-18h0m0 31h0m0 3h0m0-12h0m0 8h0m0-39h0m0 14h0m1 11h0m0 10h0m0-12h0m0 18h0m0-29h0m0 6h0m0 28h0m0-20h0m0-17h0m0 41h0m0-16h0m1-14h0m0 4h0m0 10h0m0-24h0m0-2h0m0 32h0m0 14h0m0-26h0m0 10h0m0-6h0m0 25h0m0-32h0m1-10h0m0 42h0m0 17h0m0-24h0m0-2h0m0-13h0m0 5h0m0-12h0m0-20h0m0 54h0m1-48h0m0 24h0m0 9h0m0-7h0m0-21h0m0-18h0m0-9h0m0 17h0m0 20h0m0-22h0m0 6h0m0-27h0m0 70h0m0-57h0m1 14h0m0 5h0m0 2h0m0 7h0m0 3h0m0 16h0m0-58h0m0 6h0m0 2h0m0 6h0m0 38h0m0-29h0m0-4h0m1-14h0m0 34h0m0-22h0m0 12h0m0-4h0m0 16h0m0-18h0m0 44h0m0-49h0m0 35h0m0-31h0m0 32h0m1-2h0m0-38h0m0 30h0m0-26h0m0 9h0m0-20h0m0 23h0m0-28h0m0-4h0m0 19h0m0 17h0m0 3h0m0-16h0m1-3h0m0 20h0m0-21h0m0 25h0m0-40h0m0 17h0m0-13h0m0 42h0m0 15h0m0 10h0m0-42h0m0 28h0m0-39h0m1 16h0m0-7h0m0 37h0m0-9h0m0-18h0m0 26h0m0-22h0m0 24h0m0-32h0m0 17h0m0 8h0m0-11h0m0-16h0m1 17h0m0-21h0m0 35h0m0-23h0m0 26h0m0-23h0m0 19h0m0-12h0m0 18h0m0 13h0m0-23h0m1-10h0m0 17h0m0-31h0m0 13h0m0-19h0m0 2h0m0-14h0m0 33h0m0-10h0m0-15h0m0 14h0m0 6h0m1 21h0m0-27h0m0 22h0m0-23h0m0 33h0m0-54h0m0-9h0m0 34h0m0 15h0m0-23h0m1 0h0m0 12h0m0 7h0m0 21h0m0-7h0m0 8h0m0-20h0m0 14h0m0-17h0m0-2h0m0-8h0m0 30h0m1-42h0m0 20h0m0 11h0m0 11h0m0-10h0m0 1h0m0-12h0m0 19h0m0-18h0m0 14h0m0-49h0m0 30h0m0-15h0m1 2h0m0 9h0m0-11h0m0-12h0m0 25h0m0 13h0m0-20h0m0 50h0m0-34h0m0 16h0m0-11h0m0 32h0m0-15h0m1 9h0m0-11h0m0-12h0m0 15h0m0 7h0m0-29h0m0 52h0m0-16h0m0-23h0m0-1h0m0 4h0m0 17h0m1-17h0m0 8h0m0-7h0m0 3h0m0-11h0m0-1h0m0 5h0m0-30h0m0 17h0m0-22h0m0 9h0m1-1h0m0 40h0m0-44h0m0 24h0m0 19h0m0 3h0m0-30h0m0 21h0m0-35h0m0 39h0m0-21h0m0-8h0m0 11h0m0-9h0m1 4h0m0-14h0m0 32h0m0 13h0m0-17h0m0 18h0m0-13h0m0-17h0m0-21h0m0 43h0m0-11h0m0-2h0m1-40h0m0 37h0m0-21h0m0 20h0m0 21h0m0-32h0m0 30h0m0-26h0m0-2h0m0-9h0m0 34h0m0-44h0m1-3h0m0 2h0m0 45h0m0-24h0m0 8h0m0-4h0m0-13h0m0 20h0m0-10h0m0 4h0m0-32h0m0 3h0m0 8h0m1-29h0m0 4h0m0 7h0m0-10h0m0 42h0m0-18h0m0 31h0m0-22h0m0-18h0m0 26h0m0 3h0m0-6h0m1 1h0m0-16h0m0 20h0m0 8h0m0-44h0m0 39h0m0-11h0m0 7h0m0-27h0m0 17h0m0-29h0m0 35h0m0-14h0m1-4h0m0-5h0m0 38h0m0-20h0m0-1h0m0 38h0m0-30h0m0-2h0m0 25h0m0-29h0m0 1h0m0-8h0m1 15h0m0-21h0m0-21h0m0 33h0m0-18h0m0 20h0m0-19h0m0-33h0m0 46h0m0-6h0m0-22h0m1 30h0m0-15h0m0 4h0m0-10h0m0 11h0m0-15h0m0 40h0m0-39h0m0 25h0m0 10h0m0-20h0m0 11h0m1-8h0m0 24h0m0-17h0m0-20h0m0 4h0m0 24h0m0 11h0m0-13h0m0 7h0m0-19h0m0 7h0m0-14h0m0 1h0m1 43h0m0-27h0m0 11h0m0 24h0m0-9h0m0-9h0m0-35h0m0 25h0m0-8h0m0 13h0m0-20h0m0-2h0m0 19h0m1-23h0m0-38h0m0 23h0m0 8h0m0-5h0m0 25h0m0-15h0m0 36h0m0-11h0m0-8h0m0-7h0m0-3h0m1-13h0m0-12h0m0 13h0m0-14h0m0 22h0m0-23h0m0 10h0m0 9h0m0 3h0m0-26h0m0 22h0m0 19h0m1-21h0m0-7h0m0 5h0m0-8h0m0-12h0m0 25h0m0-8h0m0-15h0m0 8h0m0-17h0m0-32h0m1 64h0m0-3h0m0-28h0m0-26h0m0 59h0m0-19h0m0-28h0m0 5h0m0 1h0m0-16h0m0 63h0m1-30h0m0-16h0m0 44h0m0-23h0m0-20h0m0 2h0m0 27h0m0-42h0m0 24h0m0-3h0m0 33h0m0-7h0m0 4h0m1-44h0m0 62h0m0 2h0m0-42h0m0 7h0m0 36h0m0-25h0m0-1h0m0-36h0m0 54h0m0-26h0m0-23h0m0 8h0m0 25h0m1-12h0m0 15h0m0-43h0m0 34h0m0-22h0m0 7h0m0 26h0m0-16h0m0-12h0m0 3h0m0-16h0m0 6h0m0 17h0m1 2h0m0 29h0m0-8h0m0-14h0m0-1h0m0 21h0m0-23h0m0 9h0m0-2h0m0-26h0m0 32h0m0-16h0m0 9h0m1-8h0m0 35h0m0-23h0m0 10h0m0 6h0m0-7h0m0-4h0m0-20h0m0-9h0m0 23h0m0-18h0m0 43h0m0-12h0m1-16h0m0-4h0m0 28h0m0-46h0m0 41h0m0 7h0m0-11h0m0-39h0m0 18h0m0-6h0m0 54h0m0-35h0m1-26h0m0 17h0m0-26h0m0 33h0m0 8h0m0 10h0m0-43h0m0 8h0m0 21h0m0-30h0m0 23h0m0 28h0m0-14h0m1-7h0m0 5h0m0 17h0m0-24h0m0-1h0m0 36h0m0-19h0m0 30h0m0-18h0m0-7h0m0-3h0m1-20h0m0 29h0m0-13h0m0-11h0m0 10h0m0 5h0m0 7h0m0-17h0m0 12h0m0-16h0m0-11h0m0 28h0m0 3h0m1-8h0m0 11h0m0 22h0m0-60h0m0 21h0m0-15h0m0 39h0m0-23h0m0-4h0m0 16h0m0-30h0m0 21h0m1-13h0m0 30h0m0-20h0m0 7h0m0-39h0m0 20h0m0 9h0m0-11h0m0 10h0m0-36h0m0 35h0m0 13h0m0-36h0m0-8h0m1 17h0m0-7h0m0 3h0m0 23h0m0-18h0m0 26h0m0-25h0m0 51h0m0-46h0m0 5h0m0 4h0m0 17h0m1-10h0m0 9h0m0 1h0m0-4h0m0 16h0m0-8h0m0-17h0m0 7h0m0-27h0m0 42h0m0-37h0m1 19h0m0-20h0m0 15h0m0 1h0m0-21h0m0 37h0m0-7h0m0 18h0m0-41h0m0 22h0m0 18h0m0-23h0m1 19h0m0 9h0m0-35h0m0 23h0m0-4h0m0 10h0m0-8h0m0 16h0m0-27h0m0-2h0m0-5h0m1-22h0m0 43h0m0-15h0m0 13h0m0 7h0m0-29h0m0 1h0m0 43h0m0-18h0m0-11h0m0-8h0m0-14h0m1 11h0m0-18h0m0-6h0m0 57h0m0-38h0m0 28h0m0-21h0m0 9h0m0 16h0m0-2h0m0-16h0m0 11h0m0-13h0m1 19h0m0-40h0m0 30h0m0-31h0m0 45h0m0-22h0m0-9h0m0 32h0m0-17h0m0-24h0m0-10h0m0-2h0m0 18h0m0-3h0m1 39h0m0-10h0m0-28h0m0 27h0m0-3h0m0 24h0m0-19h0m0 13h0m0-33h0m0-25h0m0 15h0m0-3h0m0 12h0m0-17h0m1 23h0m0-10h0m0-37h0m0 50h0m0-11h0m0 13h0m0-41h0m0 23h0m0-15h0m0 11h0m1 13h0m0-16h0m0 1h0m0 1h0m0 30h0m0 4h0m0-5h0m0-25h0m0 19h0m0-8h0m0 11h0m0-5h0m0-26h0m1 4h0m0-5h0m0-1h0m0-13h0m0 30h0m0 3h0m0 18h0m0-12h0m0-17h0m0-19h0m1 6h0m0 17h0m0 3h0m0 10h0m0 6h0m0 14h0m0-17h0m0 9h0m0 21h0m0 4h0m0-15h0m0-13h0m0-36h0m1 28h0m0 15h0m0-26h0m0-15h0m0-14h0m0 42h0m0-12h0m0 4h0m0-27h0m0 4h0m0 11h0m0-5h0m0 19h0m1-6h0m0-5h0m0 8h0m0-10h0m0-4h0m0 20h0m0 27h0m0-14h0m0-16h0m1-17h0m0-5h0m0 9h0m0-8h0m0 5h0m0 9h0m0 4h0m0-1h0m0-6h0m0 21h0m0 15h0m0-8h0m0 9h0m1-42h0m0 28h0m0-16h0m0 19h0m0-22h0m0-2h0m0 37h0m0-48h0m0 39h0m0-20h0m0-10h0m1 0h0m0 7h0m0 5h0m0 16h0m0-30h0m0 26h0m0 5h0m0-37h0m0-15h0m1 18h0m0 23h0m0 1h0m0-50h0m0 39h0m0 9h0m0-42h0m0 26h0m0-14h0m0-1h0m0 35h0m0-9h0m1-8h0m0-14h0m0 20h0m0-16h0m0 32h0m0-34h0m0-9h0m0 5h0m0 9h0m0-30h0m1 27h0m0 1h0m0 2h0m0-6h0m0 24h0m0-30h0m0 25h0m0-22h0m0 14h0m0 5h0m0 20h0m1-4h0m0-13h0m0-21h0m0 26h0m0-14h0m0-14h0m0 20h0m0-15h0m0 10h0m0-6h0m0 21h0m1-37h0m0 27h0m0 7h0m0 11h0m0 3h0m0-27h0m0 42h0m0-11h0m0-19h0m0-2h0m0 18h0m0-6h0m0-36h0m1 28h0m0-9h0m0 3h0m0-18h0m0-7h0m0 3h0m0 5h0m0-22h0m0 25h0m1-11h0m0-24h0m0-4h0m0-15h0m0 21h0m0 8h0m0 1h0m0 15h0m0-10h0m0 4h0m0-6h0m0-17h0m1 8h0m0 22h0m0 6h0m0-37h0m0 41h0m0-13h0m0-3h0m0 26h0m0-17h0m0-19h0m0 8h0m0 30h0m1-41h0m0 31h0m0-20h0m0 7h0m0-5h0m0-21h0m0 6h0m0-2h0m0-8h0m0 3h0m0 4h0m1 9h0m0 2h0m0-14h0m0-2h0m0-12h0m0 50h0m0-25h0m0 7h0m0 12h0m0-55h0m0 8h0m0 34h0m1 4h0m0-11h0m0 23h0m0-7h0m0-20h0m0-12h0m0 18h0m0-3h0m0 40h0m0 14h0m0-38h0m0 2h0m1 20h0m0-3h0m0-5h0m0-40h0m0 14h0m0 47h0m0-56h0m0 31h0m0 3h0m0 13h0m0-37h0m0 15h0m0 40h0m1-25h0m0 9h0m0 3h0m0 11h0m0-1h0m0 7h0m0-8h0m0-20h0m0 34h0m0-18h0m0 13h0m1-23h0m0-8h0m0 1h0m0-15h0m0-4h0m0-4h0m0 12h0m0-3h0m0 12h0m0-23h0m0-8h0m0-23h0m0 40h0m1 10h0m0-13h0m0 7h0m0 2h0m0-30h0m0-5h0m0 24h0m0 16h0m0-9h0m0 33h0m1-38h0m0 26h0m0-3h0m0-2h0m0 24h0m0-55h0m0 67h0m0-9h0m0-16h0m0 22h0m0-26h0m0-14h0m0-10h0m1 5h0m0 5h0m0-2h0m0-10h0m0-10h0m0 15h0m0-3h0m0-13h0m0 10h0m0 19h0m0-53h0m1 46h0m0-40h0m0 9h0m0-3h0m0 12h0m0-3h0m0 6h0m0-7h0m0-4h0m0 40h0m0-20h0m0-27h0m1 39h0m0-14h0m0-1h0m0 29h0m0-40h0m0 38h0m0-55h0m0 27h0m0 13h0m0-9h0m0 19h0m0 8h0m0-10h0m1-4h0m0 24h0m0-31h0m0-7h0m0-3h0m0-7h0m0 2h0m0 20h0m0-4h0m0-15h0m0-12h0m1 37h0m0 19h0m0-51h0m0 12h0m0-6h0m0 17h0m0 11h0m0 22h0m0-35h0m0-2h0m0 5h0m0 21h0m0-7h0m1-8h0m0-4h0m0 28h0m0-34h0m0-20h0m0 21h0m0-4h0m0 20h0m0-22h0m0 24h0m0-10h0m1-3h0m0-5h0m0 16h0m0-22h0m0 32h0m0-23h0m0 21h0m0 12h0m0-16h0m0 19h0m0-7h0m0-2h0m0-18h0m1 7h0m0 12h0m0 21h0m0-24h0m0 6h0m0 7h0m0-4h0m0-23h0m0 34h0m0-23h0m0-19h0m0 39h0m1-1h0m0-14h0m0 2h0m0-15h0m0-22h0m0 29h0m0-8h0m0 11h0m0-8h0m0-8h0m0-5h0m0 27h0m0 3h0m1 12h0m0-4h0m0 12h0m0-14h0m0 22h0m0-29h0m0-32h0m0-3h0m0 28h0m0-12h0m0 21h0m0-50h0m1 53h0m0-16h0m0-29h0m0 43h0m0 3h0m0-35h0m0 15h0m0 5h0m0 6h0m0-38h0m0-9h0m0 42h0m0-9h0m1 10h0m0-26h0m0 37h0m0-36h0m0 27h0m0 10h0m0 1h0m0-45h0m0 30h0m0 12h0m0-4h0m0-20h0m0 34h0m1 18h0m0-49h0m0 6h0m0 17h0m0-8h0m0 26h0m0-57h0m0 17h0m0 15h0m0-37h0m0 32h0m1-29h0m0 43h0m0-27h0m0-11h0m0 42h0m0-25h0m0-19h0m0-9h0m0 36h0m0-10h0m0 26h0m0-49h0m1 13h0m0 23h0m0 2h0m0-42h0m0 39h0m0-31h0m0 25h0m0 13h0m0 2h0m0-34h0m0 21h0m0 15h0m1-48h0m0-1h0m0 9h0m0 29h0m0-21h0m0-11h0m0 13h0m0-6h0m0 17h0m0-3h0m0-16h0m1 14h0m0-1h0m0-27h0m0 58h0m0-18h0m0-26h0m0 9h0m0 11h0m0 7h0m1-11h0m0 22h0m0-61h0m0 17h0m0 15h0m0-34h0m0 49h0m0-41h0m0 12h0m0-6h0m0-8h0m0-1h0m1-1h0m0 6h0m0 27h0m0-37h0m0 25h0m0-3h0m0 4h0m0 14h0m0-10h0m0 6h0m0-25h0m0-6h0m0 26h0m1-12h0m0 4h0m0-21h0m0 35h0m0 8h0m0-51h0m0 11h0m0 33h0m0-43h0m0 4h0m0 13h0m1 12h0m0-6h0m0 21h0m0-45h0m0 35h0m0-16h0m0-6h0m0-2h0m0 28h0m0-11h0m0 14h0m0 21h0m0-59h0m1 30h0m0-2h0m0 15h0m0-6h0m0 4h0m0-31h0m0-18h0m0 24h0m0 19h0m0-44h0m0 24h0m1 35h0m0-31h0m0-20h0m0 25h0m0 11h0m0-8h0m0 6h0m0-21h0m0 10h0m0-28h0m0 6h0m1 17h0m0-6h0m0 3h0m0-29h0m0 46h0m0-23h0m0 29h0m0-35h0m0 63h0m0-42h0m0 3h0m1-10h0m0 23h0m0-20h0m0 19h0m0 14h0m0-21h0m0 9h0m0 9h0m0-21h0m0-2h0m1 6h0m0 22h0m0-51h0m0 18h0m0 5h0m0-1h0m0 31h0m0-55h0m0 33h0m0-25h0m0 29h0m0-42h0m0 28h0m1-28h0m0 8h0m0 38h0m0-24h0m0-11h0m0 1h0m0-19h0m0 49h0m0-16h0m0-10h0m0-22h0m1-5h0m0 14h0m0 9h0m0-16h0m0 9h0m0 5h0m0-2h0m0-26h0m0 1h0m0-5h0m0 42h0m0-47h0m0 28h0m1-13h0m0 36h0m0 1h0m0-12h0m0-35h0m0 51h0m0-17h0m0-1h0m0 19h0m0-44h0m0 35h0m1-15h0m0 43h0m0-40h0m0-6h0m0-20h0m0 57h0m0-46h0m0 23h0m0-32h0m0-14h0m0 18h0m0-10h0m1 12h0m0-7h0m0 33h0m0 11h0m0-34h0m0 12h0m0 26h0m0-3h0m0-18h0m0 44h0m0-22h0m1-34h0m0 37h0m0-1h0m0-19h0m0-14h0m0 27h0m0 31h0m0-46h0m0 26h0m0 12h0m0-43h0m0 15h0m0-1h0m1 0h0m0-4h0m0-13h0m0 41h0m0-19h0m0-26h0m0 34h0m0 23h0m0-27h0m0 13h0m0-7h0m1 13h0m0 15h0m0-69h0m0 29h0m0 16h0m0-29h0m0-8h0m0 45h0m0-19h0m0-8h0m0 20h0m0 9h0m1-11h0m0-9h0m0-6h0m0 21h0m0 10h0m0-4h0m0 25h0m0-66h0m0 34h0m0-1h0m0-9h0m0-6h0m0 5h0m1 37h0m0-31h0m0 9h0m0-17h0m0-5h0m0-16h0m0 42h0m0-38h0m0-2h0m0 45h0m1-36h0m0 14h0m0-18h0m0-8h0m0-4h0m0-6h0m0-21h0m0 50h0m0-5h0m0 9h0m0-20h0m1 35h0m0-36h0m0 46h0m0-49h0m0 47h0m0-34h0m0 16h0m0-8h0m0-10h0m0 7h0m0 15h0m0-9h0m1 20h0m0-8h0m0 13h0m0-22h0m0 5h0m0-25h0m0-3h0m0 29h0m0-16h0m0-7h0m0 27h0m0-52h0m0 28h0m1-2h0m0-18h0m0 44h0m0-16h0m0 33h0m0-36h0m0-2h0m0 19h0m0 4h0m0-10h0m0 3h0m0-32h0m1 32h0m0 30h0m0-22h0m0 19h0m0-28h0m0 26h0m0-18h0m0 36h0m0-3h0m0-37h0m0 33h0m0-22h0m1-8h0m0 24h0m0 7h0m0-49h0m0 33h0m0-21h0m0 20h0m0-16h0m0 31h0m0-1h0m0-7h0m0-4h0m0-8h0m1-24h0m0 17h0m0-25h0m0 16h0m0-12h0m0 48h0m0-57h0m0 59h0m0-51h0m0 19h0m1 20h0m0-25h0m0 4h0m0 16h0m0-9h0m0-27h0m0-3h0m0-1h0m0 15h0m0-10h0m0-15h0m0 1h0m0-4h0m1 30h0m0-15h0m0 3h0m0 26h0m0-12h0m0 30h0m0-19h0m0 13h0m0-34h0m0 7h0m0 10h0m0 24h0m0-9h0m1-40h0m0 21h0m0-12h0m0 29h0m0-2h0m0-29h0m0 10h0m0 22h0m0-5h0m0-22h0m0 20h0m0-9h0m0 3h0m1 3h0m0 9h0m0-21h0m0 45h0m0-4h0m0 5h0m0-45h0m0 25h0m0-20h0m0 13h0m0-5h0m0-3h0m0 25h0m1-15h0m0-10h0m0-38h0m0 15h0m0-3h0m0 25h0m0-31h0m0-9h0m0-14h0m0 62h0m0-19h0m1 12h0m0-10h0m0-6h0m0 13h0m0-12h0m0-7h0m0 3h0m0 20h0m0 3h0m0-39h0m0 31h0m0 18h0m0-19h0m0 12h0m1-7h0m0 12h0m0-15h0m0-13h0m0 36h0m0-44h0m0 25h0m0 12h0m0-27h0m0 8h0m0 22h0m1-17h0m0 5h0m0-24h0m0 2h0m0 6h0m0 24h0m0-19h0m0-7h0m0 14h0m0 3h0m0-11h0m0-3h0m0 18h0m1-34h0m0 12h0m0-2h0m0 28h0m0 4h0m0-20h0m0 7h0m0-23h0m0 9h0m0-14h0m0 36h0m0-33h0m1 29h0m0-4h0m0-17h0m0 4h0m0-23h0m0-13h0m0 26h0m0-18h0m0 31h0m0-8h0m0 14h0m0-28h0m1-7h0m0 21h0m0-41h0m0 27h0m0 8h0m0-14h0m0-11h0m0 1h0m0-15h0m0 44h0m0-8h0m0-17h0m0-11h0m0 38h0m1-12h0m0 19h0m0-17h0m0 2h0m0-14h0m0 22h0m0-32h0m0 12h0m0 3h0m0-11h0m1-13h0m0 31h0m0 1h0m0 16h0m0-9h0m0-5h0m0 37h0m0-14h0m0-14h0m0-26h0m0-9h0m0 16h0m1 7h0m0-19h0m0 35h0m0-9h0m0-12h0m0 35h0m0-41h0m0 39h0m0-38h0m0 48h0m0-40h0m1 5h0m0 14h0m0-27h0m0-10h0m0 46h0m0 3h0m0-9h0m0 3h0m0-28h0m0 11h0m0 2h0m0-24h0m1 15h0m0 11h0m0 1h0m0-3h0m0 6h0m0-46h0m0 22h0m0 11h0m0-35h0m0 20h0m0-21h0m1 33h0m0-8h0m0 7h0m0 7h0m0-23h0m0 26h0m0-28h0m0 15h0m0-27h0m0 47h0m0-37h0m0 6h0m1-26h0m0 33h0m0-14h0m0 13h0m0-1h0m0-7h0m0-10h0m0 34h0m0-12h0m0 22h0m0-8h0m1-27h0m0-3h0m0-8h0m0 1h0m0 33h0m0-19h0m0 13h0m0-8h0m0 16h0m0 13h0m0-33h0m1-14h0m0 33h0m0-31h0m0 6h0m0 17h0m0-3h0m0-9h0m0-7h0m0-1h0m0 22h0m0-34h0m0 41h0m0 2h0m1-37h0m0 2h0m0-9h0m0 16h0m0 17h0m0-30h0m0 21h0m0 4h0m0 9h0m0-16h0m0 23h0m1-46h0m0 37h0m0-30h0m0-14h0m0 34h0m0-2h0m0 14h0m0 10h0m0-4h0m1-1h0m0-41h0m0 2h0m0 26h0m0 11h0m0 15h0m0-32h0m0 24h0m0-20h0m0-14h0m0 17h0m0 34h0m0-21h0m1-39h0m0 18h0m0-14h0m0 61h0m0-23h0m0 3h0m0 24h0m0-18h0m0-29h0m0 6h0m0 7h0m0-4h0m1 17h0m0-12h0m0 29h0m0-32h0m0 22h0m0-16h0m0 11h0m0 8h0m0 5h0m0-11h0m0-32h0m1 27h0m0-14h0m0-28h0m0 16h0m0 2h0m0-27h0m0 23h0m0-4h0m0 12h0m0 17h0m0 7h0m0-25h0m0-17h0m1 8h0m0-14h0m0 9h0m0 21h0m0 19h0m0-24h0m0 1h0m0-20h0m0 28h0m0-15h0m0 44h0m0-26h0m1-25h0m0 10h0m0 7h0m0 16h0m0-11h0m0-8h0m0-18h0m0 8h0m0 34h0m0-6h0m1-4h0m0-13h0m0 5h0m0 29h0m0-17h0m0 12h0m0-4h0m0-10h0m0 11h0m0 14h0m0-7h0m0-27h0m0-2h0m1-2h0m0 25h0m0 5h0m0-14h0m0-14h0m0 25h0m0 5h0m0 11h0m0-35h0m0 45h0m1-53h0m0 14h0m0-5h0m0 1h0m0 12h0m0 6h0m0 15h0m0-57h0m0 2h0m0 47h0m0-32h0m0 31h0m0-3h0m1-27h0m0-11h0m0-3h0m0-2h0m0 24h0m0-12h0m0 14h0m0-13h0m0-19h0m0 46h0m0-49h0m1 35h0m0-29h0m0 16h0m0 31h0m0-9h0m0-15h0m0 27h0m0 3h0m0-7h0m0-19h0m0-6h0m0 13h0m0-21h0m1-1h0m0 24h0m0 2h0m0-15h0m0-7h0m0 27h0m0-32h0m0-9h0m0 57h0m0-11h0m0-3h0m1-27h0m0 12h0m0 23h0m0 29h0m0-62h0m0 28h0m0 12h0m0-1h0m0-35h0m0 12h0m0-7h0m0 9h0m1 4h0m0-13h0m0 7h0m0 8h0m0-13h0m0 40h0m0-45h0m0 7h0m0 17h0m0-2h0m0-23h0m0 14h0m0 39h0m0-14h0m1-17h0m0-31h0m0 19h0m0 10h0m0-13h0m0 5h0m0 40h0m0-50h0m0 3h0m1 13h0m0-21h0m0 1h0m0 1h0m0-30h0m0 55h0m0-13h0m0 5h0m0-33h0m0 19h0m0-9h0m0 1h0m0-17h0m1 25h0m0 21h0m0-4h0m0 11h0m0-19h0m0-2h0m0 12h0m0-26h0m0 20h0m0 32h0m0-11h0m1 18h0m0-10h0m0-38h0m0-17h0m0 22h0m0 15h0m0-19h0m0-21h0m0 17h0m0-10h0m0 28h0m0-8h0m0-11h0m1-28h0m0 28h0m0 5h0m0-9h0m0 18h0m0-3h0m0 11h0m0-7h0m0-7h0m0 25h0m0-15h0m0 18h0m1 2h0m0-10h0m0-9h0m0 11h0m0-14h0m0 16h0m0 19h0m0-51h0m0 15h0m0 6h0m1 13h0m0-39h0m0 15h0m0 15h0m0 12h0m0 9h0m0-29h0m0 15h0m0-5h0m0-19h0m0 13h0m0-21h0m0 20h0m1-6h0m0-17h0m0 33h0m0-26h0m0 7h0m0 8h0m0 26h0m0-4h0m0-3h0m0-5h0m0-24h0m0 16h0m1-12h0m0-6h0m0 21h0m0-44h0m0 4h0m0 21h0m0 14h0m0-25h0m0-1h0m0-17h0m0 40h0m1-19h0m0 1h0m0 5h0m0-8h0m0 18h0m0-24h0m0 22h0m0-3h0m0-29h0m0 9h0m1 13h0m0-29h0m0 35h0m0-27h0m0 39h0m0 1h0m0-17h0m0-33h0m0-2h0m0 30h0m0-15h0m0 7h0m0 22h0m0-45h0m1 14h0m0-29h0m0 18h0m0 14h0m0-10h0m0-6h0m0 19h0m0-39h0m0 31h0m0 24h0m0-15h0m0-16h0m1 17h0m0 5h0m0-7h0m0 8h0m0-18h0m0-12h0m0 13h0m0-35h0m0 32h0m0 8h0m0-33h0m0 59h0m1-39h0m0-25h0m0 13h0m0 43h0m0-17h0m0 8h0m0-38h0m0 41h0m0-4h0m0 14h0m0 6h0m0-31h0m0-16h0m1 17h0m0-7h0m0 2h0m0-5h0m0 35h0m0-50h0m0 13h0m0 14h0m0 2h0m0 12h0m0-33h0m1 27h0m0-16h0m0 24h0m0-21h0m0 9h0m0-15h0m0-17h0m0 29h0m0 16h0m0-7h0m0-12h0m0-19h0m1 0h0m0 25h0m0 14h0m0 1h0m0-19h0m0 17h0m0-23h0m0 37h0m0-24h0m0-9h0m0 27h0m0-17h0m0 12h0m1-26h0m0 3h0m0-17h0m0 28h0m0 20h0m0-13h0m0-15h0m0-10h0m0-17h0m0 13h0m0 7h0m1-25h0m0 11h0m0 41h0m0-53h0m0 45h0m0-22h0m0-31h0m0 15h0m0-9h0m0 12h0m0 22h0m0-26h0m0 9h0m1 17h0m0-28h0m0-11h0m0 14h0m0 2h0m0-24h0m0 9h0m0 2h0m0-24h0m0 30h0m0-25h0m0-9h0m1 33h0m0-25h0m0 43h0m0-28h0m0-11h0m0 25h0m0 16h0m0-25h0m0 14h0m0-13h0m0-10h0m0-19h0m0 17h0m1 31h0m0-35h0m0 5h0m0 4h0m0-23h0m0 21h0m0 10h0m0-13h0m0 33h0m0-41h0m0 14h0m0-25h0m0 16h0m1 5h0m0 3h0m0 23h0m0-18h0m0-4h0m0 6h0m0-3h0m0 11h0m0 20h0m0-15h0m0 9h0m0 22h0m0-1h0m1-32h0m0-3h0m0 6h0m0 36h0m0-47h0m0 37h0m0-13h0m0 15h0m0-17h0m0 37h0m0-6h0m1-23h0m0 17h0m0-8h0m0 5h0m0 24h0m0-39h0m0 19h0m0 1h0m0-14h0m0 18h0m0-36h0m0 2h0m1 24h0m0 6h0m0 3h0m0-11h0m0 22h0m0-34h0m0 18h0m0-22h0m0 33h0m0-5h0m0-34h0m1 18h0m0-17h0m0 31h0m0-23h0m0 21h0m0 8h0m0-43h0m0 7h0m0 38h0m0-41h0m1-1h0m0 22h0m0 12h0m0-10h0m0 13h0m0-31h0m0 5h0m0 6h0m0 21h0m0-30h0m0 18h0m0-31h0m0 32h0m1 8h0m0 16h0m0-6h0m0-11h0m0 29h0m0-60h0m0 16h0m0 5h0m0 22h0m0-17h0m0 4h0m0 22h0m1-31h0m0 36h0m0-27h0m0 10h0m0-5h0m0-4h0m0-18h0m0-11h0m0 21h0m0 18h0m0-42h0m0 46h0m0-13h0m1-2h0m0-33h0m0 15h0m0-6h0m0 26h0m0-15h0m0 18h0m0-7h0m0-7h0m0 20h0m0 12h0m1-20h0m0 26h0m0-31h0m0 8h0m0-23h0m0 34h0m0-56h0m0 54h0m0-27h0m0-35h0m1 33h0m0 14h0m0-9h0m0-17h0m0 34h0m0-36h0m0 3h0m0 36h0m0-30h0m0 17h0m1-2h0m0-30h0m0 50h0m0-23h0m0 15h0m0-51h0m0 7h0m0 39h0m0-24h0m0 8h0m0 25h0m0-7h0m0-16h0m0-6h0m1 20h0m0-13h0m0 4h0m0-1h0m0 24h0m0-31h0m0 29h0m0-43h0m0-6h0m0 44h0m0-1h0m1 6h0m0-34h0m0 23h0m0 8h0m0-13h0m0 27h0m0 2h0m0-26h0m1 14h0m0 7h0m0-16h0m0-22h0m0 33h0m0-25h0m0 11h0m0-3h0m0-12h0m0 6h0m0-4h0m0 30h0m1 1h0m0 5h0m0-9h0m0-11h0m0 13h0m0-16h0m0 19h0m0-6h0m0-15h0m0-16h0m0 4h0m0 4h0m1 33h0m0-28h0m0 23h0m0-21h0m0 28h0m0-34h0m0 11h0m0 4h0m0 4h0m0-9h0m1 0h0m0 16h0m0 4h0m0 1h0m0 5h0m0-8h0m0-10h0m0-29h0m0 57h0m0-34h0m0 28h0m1-12h0m0-11h0m0-5h0m0-3h0m0-5h0m0 1h0m0-21h0m0-3h0m0 20h0m0-5h0m0 22h0m0-53h0m1 50h0m0-26h0m0 37h0m0 8h0m0-16h0m0-12h0m0-16h0m0 33h0m0-31h0m0 22h0m0-18h0m0 26h0m1 3h0m0 27h0m0-29h0m0-7h0m0-24h0m0 41h0m0-5h0m0-26h0m0 27h0m0-33h0m0 19h0m1 15h0m0-9h0m0 4h0m0 3h0m0-39h0m0 14h0m0 30h0m0-31h0m0 33h0m0-19h0m0-3h0m1 11h0m0-1h0m0 26h0m0-37h0m0-3h0m0 21h0m0-28h0m0 27h0m0 14h0m0-2h0m0-28h0m0-10h0m1 20h0m0-13h0m0-13h0m0 21h0m0 16h0m0-34h0m0 6h0m0-5h0m0 25h0m0-15h0m0-8h0m1-18h0m0 42h0m0-9h0m0 11h0m0-20h0m0 12h0m0 22h0m0-44h0m0 26h0m0 5h0m0 1h0m1-20h0m0-1h0m0 7h0m0 4h0m0-25h0m0 3h0m0-8h0m0-2h0m0-2h0m0-1h0m0 17h0m0-38h0m1-2h0m0 51h0m0 7h0m0-20h0m0-20h0m0-9h0m0 2h0m0 11h0m0-6h0m0 23h0m0-15h0m0-4h0m0 28h0m1-12h0m0 5h0m0-31h0m0 12h0m0-9h0m0 21h0m0-9h0m0-19h0m0 26h0m0-38h0m0 21h0m0 4h0m1-12h0m0-15h0m0 31h0m0-32h0m0 47h0m0-1h0m0 19h0m0-42h0m0-3h0m0 44h0m0-11h0m0-2h0m0 27h0m0-28h0m1-5h0m0 17h0m0 9h0m0-16h0m0-13h0m0 38h0m0-21h0m0-10h0m0 39h0m0-36h0m0-22h0m0 47h0m0-40h0m1 16h0m0-20h0m0 7h0m0 22h0m0 13h0m0-64h0m0 53h0m0-16h0m0-29h0m0 23h0m0 30h0m0-23h0m1 19h0m0-31h0m0-13h0m0 20h0m0-5h0m0-19h0m0-9h0m0 44h0m0-40h0m0 18h0m0 19h0m0-21h0m1-1h0m0-22h0m0 30h0m0-33h0m0 34h0m0-22h0m0-1h0m0-22h0m0 37h0m0-29h0m0 9h0m0 4h0m0 3h0m1-13h0m0 27h0m0-24h0m0-12h0m0 35h0m0-17h0m0-12h0m0-37h0m0 36h0m0-2h0m0 22h0m1-7h0m0-5h0m0-9h0m0 18h0m0-31h0m0-13h0m0 16h0m0 9h0m0 44h0m0-60h0m0 10h0m0 17h0m1-5h0m0-23h0m0 40h0m0-6h0m0-20h0m0 17h0m0 34h0m0-39h0m0 2h0m0 26h0m0 7h0m1-64h0m0-4h0m0 44h0m0 1h0m0-15h0m0 1h0m0 24h0m0-15h0m0-37h0m0 19h0m0-12h0m0 18h0m0-16h0m1 26h0m0 1h0m0 12h0m0 13h0m0-16h0m0 15h0m0-6h0m0-13h0m0 22h0m1-5h0m0 34h0m0-2h0m0-38h0m0 29h0m0 8h0m0-30h0m0 16h0m0 10h0m0 9h0m0-45h0m1 46h0m0-15h0m0-23h0m0 40h0m0-33h0m0 10h0m0 1h0m0 6h0m0-5h0m0-10h0m0 2h0m0 1h0m1 2h0m0-1h0m0-6h0m0-13h0m0 3h0m0 6h0m0 21h0m0 15h0m0-27h0m0-10h0m0 27h0m0 8h0m0-19h0m0-13h0m1-15h0m0 18h0m0 27h0m0-16h0m0-13h0m0 6h0m0-17h0m0 25h0m0-20h0m0-16h0m0 43h0m0-22h0m1-24h0m0 25h0m0 15h0m0-26h0m0 25h0m0 21h0m0-13h0m0-44h0m0 43h0m0-35h0m0 16h0m0 10h0m1-12h0m0-3h0m0 24h0m0-41h0m0 16h0m0-13h0m0-6h0m0 16h0m0 13h0m1-6h0m0 10h0m0-20h0m0 12h0m0-28h0m0 21h0m0-8h0m0-3h0m0 55h0m0-15h0m0-8h0m0-10h0m0 15h0m0-29h0m1-2h0m0 4h0m0 30h0m0-46h0m0 28h0m0-11h0m0-4h0m0 27h0m0 16h0m0-14h0m1 0h0m0-48h0m0 2h0m0 24h0m0-18h0m0 19h0m0 20h0m0-31h0m0 7h0m0 33h0m0 12h0m0 1h0m0-30h0m1-19h0m0 40h0m0-27h0m0-1h0m0 12h0m0-23h0m0 26h0m0-12h0m0 17h0m0 19h0m0-7h0m0-1h0m1-15h0m0-14h0m0-27h0m0 22h0m0-9h0m0 30h0m0 3h0m0-26h0m0 11h0m0 1h0m1-31h0m0 33h0m0-4h0m0-11h0m0 8h0m0 31h0m0-36h0m0-24h0m0 44h0m0 4h0m0 4h0m1-15h0m0-10h0m0 19h0m0-20h0m0 31h0m0-57h0m0 20h0m0 23h0m0 11h0m0-33h0m1 4h0m0 36h0m0-24h0m0 2h0m0-7h0m0 31h0m0-45h0m0 34h0m0-29h0m0 33h0m0-26h0m0 18h0m0-26h0m0 23h0m1 8h0m0 3h0m0-6h0m0-16h0m0 2h0m0-9h0m0-14h0m0 49h0m0-29h0m0-7h0m1 11h0m0 5h0m0 7h0m0 3h0m0-29h0m0 1h0m0 29h0m0 15h0m0-13h0m0-16h0m0-14h0m1 19h0m0-11h0m0-20h0m0 12h0m0-8h0m0 12h0m0-11h0m0 41h0m0-5h0m0-5h0m0-30h0m0 47h0m1-6h0m0-15h0m0 5h0m0-20h0m0 22h0m0 19h0m0-34h0m0-19h0m0 40h0m0 7h0m0-16h0m0 26h0m0-40h0m0 29h0m1-36h0m0 16h0m0-9h0m0-11h0m0 12h0m0 18h0m0-2h0m0-40h0m0 35h0m0-6h0m0-14h0m0 4h0m1 34h0m0-15h0m0-26h0m0 3h0m0-16h0m0 23h0m0-14h0m0-3h0m0 13h0m1-11h0m0 29h0m0-20h0m0-12h0m0 29h0m0-9h0m0 7h0m0-21h0m0 46h0m0-57h0m0 23h0m0 6h0m0-14h0m1 12h0m0-8h0m0-2h0m0 20h0m0-24h0m0 11h0m0-17h0m0-20h0m0 35h0m0-8h0m1-2h0m0 18h0m0-8h0m0-31h0m0 19h0m0 17h0m0-24h0m0 10h0m0-25h0m0 53h0m0-23h0m0-17h0m0 33h0m1-25h0m0-4h0m0 9h0m0 17h0m0-3h0m0-42h0m0 29h0m0-21h0m0 6h0m0-16h0m0 9h0m0-5h0m1-10h0m0 17h0m0 33h0m0-20h0m0-34h0m0 36h0m0 16h0m0-24h0m0-42h0m0 12h0m0 4h0m0 46h0m0 2h0m1-15h0m0 15h0m0-27h0m0 14h0m0-4h0m0 9h0m0-13h0m0 11h0m0 3h0m0 2h0m0 24h0m0-10h0m1-22h0m0-14h0m0-25h0m0 28h0m0 20h0m0-10h0m0-19h0m0 1h0m0-6h0m0-11h0m0 13h0m1 32h0m0-28h0m0 27h0m0-21h0m0-3h0m0-31h0m0 12h0m0 25h0m0-20h0m1-17h0m0 2h0m0 34h0m0-6h0m0 2h0m0 28h0m0-50h0m0 47h0m0-30h0m0 23h0m0-26h0m1 24h0m0-9h0m0-25h0m0 14h0m0-4h0m0-14h0m0 46h0m0-34h0m0-18h0m0-7h0m0 20h0m0 23h0m0-28h0m0-20h0m1 48h0m0 2h0m0-6h0m0-2h0m0 26h0m0-2h0m0-9h0m0-36h0m0 17h0m0-11h0m0-13h0m0-11h0m1 12h0m0 32h0m0-37h0m0 25h0m0 2h0m0-5h0m0 34h0m0-4h0m0-24h0m0-12h0m0-18h0m0 45h0m1-9h0m0 13h0m0 9h0m0-24h0m0-7h0m0 13h0m0-17h0m0-1h0m0 3h0m0-12h0m0 26h0m1-32h0m0 10h0m0 10h0m0-9h0m0-12h0m0 10h0m0-22h0m0 3h0m0 33h0m0-10h0m0-21h0m1 9h0m0 24h0m0 1h0m0-15h0m0 1h0m0 3h0m0 19h0m0 4h0m0-3h0m0-6h0m0 14h0m0-23h0m1-9h0m0-2h0m0 23h0m0 11h0m0-8h0m0 20h0m0-1h0m0-3h0m0 17h0m0-45h0m0 42h0m0-2h0m0-36h0m1 28h0m0-34h0m0 22h0m0 5h0m0 18h0m0-3h0m0-18h0m0 4h0m0 12h0m0-3h0m0-8h0m1-7h0m0 20h0m0-28h0m0 11h0m0-12h0m0 37h0m0-31h0m0 40h0m0-29h0m0 3h0m1-15h0m0 25h0m0 1h0m0-19h0m0 32h0m0-40h0m0 3h0m0 28h0m0-32h0m0 12h0m0-6h0m1 14h0m0 3h0m0-9h0m0-21h0m0 31h0m0-18h0m0 6h0m0 27h0m0-21h0m0-11h0m0-35h0m0 22h0m1 27h0m0-14h0m0-9h0m0 19h0m0-17h0m0 36h0m0-28h0m0-12h0m0 46h0m0-26h0m0-4h0m0 7h0m1 0h0m0-5h0m0-1h0m0 5h0m0-25h0m0 12h0m0 2h0m0 24h0m0-4h0m0-26h0m0 33h0m0-38h0m0-19h0m1 8h0m0 28h0m0 1h0m0 22h0m0-28h0m0-21h0m0 4h0m0 11h0m0-32h0m0 28h0m0 3h0m0-7h0m1-19h0m0 25h0m0 30h0m0-26h0m0-26h0m0 4h0m0 21h0m0-15h0m0 30h0m0-27h0m0 22h0m0-4h0m0 1h0m0 6h0m1-37h0m0 5h0m0 27h0m0-11h0m0-25h0m0 39h0m0 8h0m0 14h0m0-35h0m0 19h0m0 9h0m0 6h0m1-26h0m0 33h0m0-1h0m0 18h0m0-13h0m0-11h0m0 9h0m0-13h0m0-8h0m0 31h0m0-39h0m0 10h0m1-5h0m0-16h0m0 6h0m0-1h0m0 2h0m0-10h0m0 37h0m0-13h0m0-6h0m0 8h0m0 4h0m1 23h0m0 3h0m0 3h0m0-20h0m0-33h0m0 14h0m0-10h0m0 14h0m0-30h0m0 17h0m0 7h0m0-21h0m0 39h0m1 15h0m0-19h0m0-43h0m0 8h0m0 9h0m0 4h0m0 6h0m0-7h0m0 26h0m0 4h0m0-43h0m0 25h0m1 4h0m0 15h0m0-13h0m0 24h0m0-22h0m0 5h0m0-27h0m0 40h0m0-17h0m0 1h0m1-2h0m0-28h0m0 19h0m0 17h0m0-47h0m0 36h0m0 9h0m0-20h0m0 23h0m0 1h0m0-14h0m0 30h0m0-47h0m1-17h0m0 38h0m0-22h0m0 39h0m0-15h0m0 3h0m0 10h0m0-6h0m0-22h0m0-15h0m0-5h0m1 41h0m0-34h0m0-18h0m0 35h0m0 10h0m0-22h0m0-17h0m0 10h0m0-18h0m0 6h0m0 10h0m0 13h0m1 2h0m0-21h0m0-2h0m0 9h0m0 46h0m0-33h0m0 5h0m0-6h0m0 40h0m0-11h0m0-5h0m0-25h0m0 19h0m0-27h0m1 9h0m0-21h0m0 26h0m0 36h0m0-26h0m0-7h0m0-17h0m0 10h0m0 17h0m0 22h0m0-16h0m0-20h0m1 6h0m0 37h0m0 7h0m0-30h0m0-13h0m0 17h0m0-8h0m0-31h0m0 15h0m0 36h0m0-21h0m0 4h0m1-17h0m0-28h0m0 38h0m0 14h0m0-15h0m0-23h0m0-26h0m0 21h0m0 8h0m0 9h0m0 8h0m0-13h0m0 23h0m1-30h0m0 3h0m0 12h0m0 17h0m0-18h0m0-5h0m0-13h0m0 2h0m0-7h0m0-4h0m0 5h0m0 31h0m1-46h0m0 33h0m0-26h0m0 22h0m0 9h0m0-11h0m0-4h0m0-7h0m0-10h0m1 22h0m0 14h0m0-29h0m0 36h0m0-39h0m0 13h0m0 32h0m0-35h0m0 18h0m0 3h0m0 9h0m0-3h0m0-18h0m1 16h0m0-44h0m0 31h0m0-42h0m0 34h0m0-2h0m0 14h0m0-27h0m0 16h0m0 18h0m0-17h0m0 12h0m1 9h0m0-31h0m0 38h0m0-24h0m0-9h0m0-2h0m0-39h0m0 11h0m0-10h0m0 31h0m0 3h0m0-21h0m1 38h0m0-17h0m0 7h0m0-11h0m0 1h0m0 9h0m0-12h0m0 32h0m0-24h0m0 21h0m0-32h0m0-8h0m0 20h0m1 1h0m0-1h0m0 35h0m0-7h0m0-29h0m0 13h0m0 28h0m0 11h0m0-24h0m0 21h0m0-30h0m0 4h0m0-30h0m1 47h0m0-29h0m0 26h0m0-15h0m0 7h0m0-46h0m0 23h0m0 12h0m0-42h0m0 40h0m0-8h0m0 7h0m1-19h0m0-13h0m0 35h0m0-12h0m0 15h0m0-23h0m0 11h0m0-18h0m0 4h0m1 15h0m0-1h0m0-10h0m0-3h0m0 11h0m0-7h0m0 12h0m0 17h0m0-26h0m0 23h0m0-39h0m0 7h0m1 18h0m0-39h0m0 10h0m0-6h0m0 20h0m0-31h0m0 21h0m0-5h0m0-26h0m0 7h0m0 13h0m0-21h0m1 53h0m0-28h0m0-11h0m0-31h0m0-2h0m0 39h0m0-13h0m0-3h0m0 11h0m0 2h0m0-5h0m0-22h0m0 47h0m1-12h0m0 5h0m0 11h0m0-19h0m0-4h0m0-5h0m0 6h0m0 24h0m0-4h0m0 7h0m1-29h0m0 7h0m0-29h0m0 10h0m0 33h0m0-35h0m0 33h0m0-8h0m0 17h0m0-34h0m0-13h0m0 45h0m1-26h0m0-6h0m0-1h0m0 8h0m0 4h0m0 22h0m0-16h0m0 15h0m0-1h0m0 11h0m0 12h0m0-6h0m0-14h0m0-6h0m1 50h0m0-14h0m0 15h0m0-16h0m0 2h0m0-17h0m0 2h0m0-24h0m0 35h0m0-5h0m0-5h0m1 12h0m0 7h0m0 7h0m0-28h0m0 15h0m0 7h0m0-11h0m0-10h0m0-25h0m0 6h0m0 55h0m1-2h0m0-42h0m0 16h0m0 21h0m0-13h0m0-5h0m0-39h0m0 48h0m0-20h0m0-11h0m0-4h0m1 14h0m0 17h0m0-4h0m0 10h0m0-39h0m0-20h0m0 13h0m0 18h0m0 17h0m0-38h0m0-4h0m0 37h0m0-40h0m0 38h0m1-2h0m0-20h0m0 28h0m0-33h0m0-12h0m0 11h0m0 3h0m0-22h0m0 16h0m0-9h0m0 41h0m0-39h0m1 23h0m0-17h0m0 10h0m0-5h0m0 18h0m0-14h0m0-2h0m0-25h0m0 11h0m0-10h0m0 45h0m1-8h0m0-26h0m0 17h0m0-9h0m0-13h0m0 3h0m0 30h0m0-13h0m0 10h0m0-36h0m0 20h0m0 5h0m1-28h0m0 25h0m0-12h0m0-4h0m0 18h0m0 14h0m0-2h0m0-9h0m0 19h0m0-4h0m0-1h0m1-13h0m0 16h0m0 16h0m0-18h0m0 15h0m0-38h0m0 22h0m0 23h0m0-43h0m0 26h0m0 8h0m1-17h0m0 35h0m0-24h0m0-12h0m0-3h0m0 23h0m0-3h0m0 29h0m0-37h0m0 7h0m0-14h0m1 41h0m0-45h0m0 27h0m0-23h0m0 11h0m0 21h0m0-44h0m0-11h0m0 32h0m0-27h0m0 34h0m0-15h0m1-6h0m0 22h0m0 1h0m0 3h0m0 14h0m0-28h0m0-17h0m0-12h0m0 16h0m0-23h0m0 31h0m0-5h0m0 11h0m1 1h0m0 2h0m0-7h0m0-15h0m0 2h0m0 23h0m0-21h0m0 1h0m0 28h0m0-44h0m1 25h0m0 1h0m0-10h0m0-9h0m0 12h0m0-28h0m0 31h0m0 5h0m0-16h0m0 32h0m1-4h0m0-16h0m0 8h0m0-14h0m0 30h0m0-37h0m0 48h0m0-40h0m0-9h0m0-20h0m0 55h0m0-23h0m1 26h0m0-24h0m0 16h0m0 7h0m0 2h0m0-21h0m0 13h0m0 14h0m0-35h0m0 33h0m0-34h0m0 7h0m0 39h0m1-17h0m0 8h0m0-15h0m0 1h0m0-37h0m0 61h0m0-22h0m0-14h0m0-12h0m0-1h0m0 12h0m0 47h0m1-32h0m0-17h0m0 5h0m0 30h0m0-5h0m0 17h0m0-10h0m0-15h0m0 12h0m0-27h0m0 9h0m0-30h0m1 18h0m0 43h0m0-47h0m0 9h0m0-7h0m0 15h0m0 37h0m0-29h0m0 24h0m0-18h0m0-11h0m0-6h0m0-2h0m1-8h0m0 17h0m0-30h0m0 8h0m0 19h0m0-3h0m0-8h0m0-10h0m0-19h0m0 23h0m0-35h0m0-4h0m1 4h0m0 22h0m0 11h0m0-18h0m0 11h0m0 17h0m0-35h0m0-6h0m0 47h0m0 1h0m0-8h0m0 15h0m1-42h0m0 13h0m0-7h0m0 31h0m0-25h0m0-7h0m0-12h0m0 24h0m0-27h0m0 32h0m1-22h0m0 24h0m0-12h0m0-16h0m0 43h0m0-51h0m0 14h0m0 32h0m0-3h0m0-8h0m0 4h0m0-7h0m0 29h0m1-16h0m0-35h0m0 20h0m0 6h0m0-30h0m0 18h0m0-5h0m0 19h0m0-35h0m0 22h0m0-23h0m0-1h0m0-12h0m1 4h0m0 14h0m0 13h0m0-6h0m0 3h0m0-36h0m0 51h0m0-37h0m0-6h0m0 1h0m0 32h0m0-25h0m1 6h0m0-7h0m0-2h0m0 18h0m0 4h0m0-15h0m0-22h0m0 44h0m0-14h0m0-28h0m0 9h0m0 32h0m0-2h0m1-9h0m0 15h0m0-13h0m0 21h0m0-27h0m0 40h0m0-26h0m0 11h0m0 14h0m0-9h0m0-55h0m1 63h0m0-17h0m0-23h0m0-1h0m0-20h0m0-2h0m0 16h0m0 10h0m0 13h0m0-1h0m1 13h0m0 5h0m0-10h0m0 19h0m0-26h0m0-10h0m0-7h0m0 33h0m0-13h0m0 18h0m0-30h0m1 43h0m0-25h0m0 16h0m0-42h0m0 21h0m0-12h0m0 15h0m0-22h0m0 17h0m0-44h0m0 43h0m0-19h0m1 7h0m0-7h0m0 13h0m0-21h0m0 18h0m0-24h0m0 48h0m0-18h0m0 10h0m0 7h0m0-27h0m0 31h0m1-34h0m0-8h0m0 35h0m0-46h0m0 42h0m0-44h0m0 40h0m0-28h0m0-1h0m0 30h0m0 8h0m0-34h0m0 22h0m1-6h0m0-32h0m0 28h0m0-27h0m0 24h0m0 4h0m0-7h0m0 21h0m0-2h0m0-42h0m0 36h0m0-26h0m0 12h0m1-23h0m0-14h0m0-1h0m0-13h0m0 15h0m0 7h0m0 3h0m0 8h0m0 7h0m0-24h0m0 34h0m0-20h0m0 17h0m1-29h0m0 46h0m0-34h0m0 9h0m0-40h0m0 1h0m0 35h0m0-6h0m0-16h0m0 14h0m0 11h0m0 28h0m0-51h0m1 27h0m0 31h0m0-22h0m0-36h0m0 32h0m0 21h0m0-42h0m0 22h0m0 6h0m0 16h0m0-9h0m1-19h0m0 6h0m0-10h0m0 20h0m0-33h0m0 56h0m0 1h0m0-30h0m0 8h0m0-15h0m0 11h0m0 19h0m0-21h0m1-22h0m0 34h0m0-41h0m0 8h0m0 35h0m0-27h0m0 32h0m0-15h0m0 1h0m0 15h0m0-27h0m0 14h0m1-2h0m0 17h0m0-27h0m0-26h0m0 40h0m0-5h0m0 17h0m0-13h0m0 3h0m0 27h0m0-12h0m0 2h0m0-16h0m1 3h0m0-24h0m0 14h0m0 19h0m0 22h0m0-18h0m0-9h0m0-16h0m0 15h0m0-24h0m0 18h0m0-14h0m0 34h0m1 5h0m0-11h0m0-7h0m0-9h0m0 47h0m0-54h0m0-5h0m0 7h0m0 10h0m0 16h0m0-17h0m0-15h0m0 37h0m0-27h0m1 0h0m0 1h0m0-28h0m0 38h0m0 1h0m0-10h0m0-23h0m0 51h0m0-9h0m0-30h0m0 22h0m1 2h0m0-41h0m0 32h0m0-10h0m0-36h0m0 29h0m0 10h0m0-16h0m0-27h0m0 29h0m0 15h0m0-14h0m0 27h0m1-7h0m0 5h0m0-23h0m0 12h0m0-20h0m0-11h0m0-5h0m0 51h0m0-24h0m0-12h0m1 31h0m0 17h0m0-43h0m0 22h0m0-8h0m0-8h0m0-14h0m0 35h0m0-7h0m0 42h0m0-21h0m0 6h0m1 5h0m0-27h0m0 13h0m0 6h0m0 2h0m0-4h0m0-6h0m0 14h0m0 4h0m0-5h0m0 28h0m1-33h0m0 25h0m0-3h0m0-28h0m0 25h0m0-1h0m0 8h0m0 4h0m0-14h0m0-6h0m0 5h0m0-43h0m1 19h0m0 15h0m0-37h0m0 15h0m0 24h0m0 5h0m0-13h0m0-20h0m0 32h0m0-45h0m0 10h0m0 19h0m0-7h0m1 1h0m0-17h0m0 28h0m0-38h0m0 55h0m0-26h0m0-4h0m0-5h0m0 48h0m0-26h0m0-18h0m0 28h0m1-31h0m0 2h0m0 21h0m0-29h0m0 28h0m0 3h0m0-17h0m0 7h0m0-8h0m0-3h0m0-11h0m1 1h0m0 43h0m0-20h0m0-8h0m0-10h0m0 37h0m0-14h0m0-17h0m0-9h0m0 7h0m0-19h0m0 23h0m0 16h0m1-40h0m0 13h0m0 15h0m0 10h0m0-45h0m0 23h0m0 2h0m0-26h0m0 48h0m0-31h0m1 6h0m0 22h0m0-18h0m0-15h0m0 32h0m0-37h0m0 23h0m0 1h0m0 1h0m0-14h0m0 22h0m0-18h0m0-17h0m1 47h0m0-35h0m0 26h0m0-7h0m0-3h0m0 4h0m0 22h0m0-32h0m0 23h0m0-4h0m0-17h0m1 12h0m0 3h0m0 4h0m0-9h0m0 6h0m0 30h0m0 1h0m0-39h0m0 15h0m1-19h0m0 15h0m0-1h0m0-26h0m0 47h0m0-17h0m0-7h0m0 22h0m0-10h0m0-43h0m0 19h0m0-13h0m0 42h0m1-51h0m0 35h0m0 7h0m0-25h0m0 9h0m0 3h0m0 4h0m0 27h0m0-9h0m0-32h0m0-11h0m0 22h0m0-18h0m1 21h0m0-9h0m0-17h0m0-16h0m0-5h0m0-6h0m0 32h0m0 5h0m0-13h0m0 17h0m0-3h0m0-2h0m0-17h0m1-1h0m0 23h0m0 23h0m0-48h0m0 3h0m0 7h0m0-14h0m0-14h0m0 41h0m0-7h0m0 13h0m0-11h0m1 9h0m0-14h0m0 20h0m0-24h0m0-19h0m0 49h0m0-50h0m0 22h0m0 6h0m0-16h0m0 15h0m0-29h0m1 14h0m0 6h0m0 4h0m0 10h0m0-21h0m0 4h0m0-28h0m0 19h0m0-10h0m0-1h0m0 2h0m0 27h0m0-39h0m1 57h0m0-53h0m0 57h0m0-19h0m0-16h0m0 12h0m0 16h0m0-21h0m0-21h0m0-9h0m0 24h0m1 4h0m0 2h0m0-29h0m0 9h0m0 7h0m0 3h0m0-6h0m0 45h0m0-37h0m0 16h0m0 2h0m1-1h0m0-15h0m0-26h0m0 20h0m0-6h0m0 43h0m0-44h0m0 26h0m0-17h0m0 29h0m0-24h0m0 3h0m0 36h0m1-27h0m0 24h0m0-43h0m0 27h0m0-30h0m0 16h0m0 15h0m0-25h0m0 11h0m0 21h0m0-51h0m1 36h0m0 15h0m0-18h0m0-39h0m0 26h0m0 19h0m0-11h0m0-2h0m0-10h0m0 15h0m0-22h0m0 32h0m1-8h0m0 22h0m0-36h0m0 30h0m0-39h0m0 18h0m0 20h0m0-4h0m0-10h0m0 6h0m0-2h0m0-11h0m1 6h0m0 4h0m0-22h0m0-8h0m0-13h0m0 18h0m0-20h0m0-15h0m0 48h0m0-42h0m0-8h0m1 6h0m0-3h0m0 41h0m0-16h0m0 18h0m0-19h0m0-4h0m0-9h0m0-2h0m0 20h0m0 15h0m0 9h0m1-28h0m0-3h0m0-4h0m0-1h0m0 28h0m0-16h0m0-9h0m0 29h0m0-15h0m0-6h0m0-20h0m0 27h0m0 4h0m0 14h0m1 1h0m0 10h0m0 10h0m0-41h0m0 3h0m0-6h0m0 28h0m0 11h0m0-10h0m0-50h0m0 5h0m0 39h0m1-23h0m0 20h0m0-5h0m0-27h0m0 6h0m0 8h0m0 7h0m0-6h0m0 15h0m0-22h0m0 27h0m0 6h0m1 4h0m0-2h0m0 3h0m0 17h0m0-25h0m0-17h0m0 26h0m0 7h0m0 10h0m0 12h0m0-16h0m1-14h0m0 17h0m0-45h0m0 17h0m0-4h0m0-26h0m0 17h0m0 2h0m0 14h0m0-9h0m0-20h0m0 35h0m0 4h0m1-43h0m0 13h0m0 8h0m0 3h0m0 13h0m0-5h0m0-12h0m0 9h0m0 11h0m0-23h0m0-10h0m0 4h0m1-12h0m0 6h0m0-11h0m0 13h0m0 5h0m0-12h0m0-5h0m0 21h0m0 7h0m0-35h0m0 30h0m0-15h0m1-16h0m0-5h0m0 49h0m0 6h0m0 12h0m0-38h0m0-16h0m0 17h0m0 2h0m0-18h0m0 28h0m0-25h0m0-11h0m0 2h0m1 8h0m0 20h0m0-3h0m0 10h0m0-40h0m0 39h0m0-4h0m0 14h0m0-22h0m1 12h0m0 41h0m0-19h0m0 26h0m0-3h0m0-49h0m0 34h0m0-13h0m0 3h0m0-47h0m0 52h0m0-43h0m0 17h0m1-27h0m0 6h0m0 16h0m0 33h0m0-30h0m0-13h0m0 9h0m0 16h0m0-11h0m0 22h0m0-14h0m0 16h0m1 18h0m0-10h0m0 8h0m0-5h0m0-41h0m0 12h0m0 5h0m0 2h0m0-8h0m0 13h0m0 2h0m0-6h0m0 16h0m1-2h0m0-35h0m0 32h0m0-22h0m0 12h0m0 5h0m0-7h0m0-25h0m0 36h0m0 9h0m0 7h0m1-19h0m0 20h0m0-22h0m0 3h0m0 9h0m0 8h0m0-26h0m0-10h0m0 34h0m0 11h0m0-18h0m0 16h0m0-12h0m0-11h0m1 30h0m0-44h0m0 29h0m0 1h0m0-13h0m0-34h0m0 31h0m0-17h0m0 24h0m0-25h0m0-2h0m0 16h0m1 37h0m0-26h0m0-12h0m0 13h0m0-5h0m0 2h0m0 18h0m0-8h0m0 2h0m0 20h0m0 15h0m1-37h0m0-18h0m0-18h0m0 25h0m0 23h0m0-20h0m0 9h0m0 10h0m0 15h0m0-3h0m0-19h0m0-11h0m0 1h0m1-10h0m0-30h0m0 27h0m0-8h0m0 32h0m0-6h0m0-13h0m0 21h0m0-46h0m0 19h0m0-4h0m0-8h0m0 22h0m1-25h0m0 51h0m0-54h0m0 21h0m0 2h0m0-3h0m0 19h0m0 13h0m0-61h0m0 56h0m0-32h0m0-23h0m0 15h0m1 30h0m0-11h0m0 2h0m0-12h0m0 6h0m0 18h0m0-4h0m0-42h0m0 39h0m0 14h0m1-4h0m0-29h0m0 21h0m0-12h0m0 28h0m0-24h0m0-10h0m0-24h0m0 57h0m0 2h0m0-16h0m0-10h0m1-10h0m0-9h0m0 42h0m0-1h0m0-44h0m0 29h0m0-4h0m0-11h0m0 12h0m0 8h0m0 1h0m1-31h0m0 11h0m0-42h0m0 55h0m0-52h0m0 47h0m0-3h0m0-14h0m0-14h0m0 8h0m0-10h0m1-2h0m0 38h0m0-30h0m0 18h0m0 14h0m0 22h0m0 4h0m0 9h0m0-26h0m0-15h0m0 35h0m0-53h0m0-6h0m1 38h0m0-20h0m0-3h0m0 21h0m0-14h0m0-22h0m0 31h0m0-12h0m0 15h0m0-24h0m0 19h0m1 10h0m0-30h0m0 41h0m0-16h0m0-1h0m0-6h0m0 26h0m0-17h0m0-10h0m0-22h0m0 7h0m0 5h0m0 9h0m0-20h0m1 32h0m0-36h0m0-6h0m0 28h0m0-40h0m0 33h0m0-5h0m0 9h0m0-14h0m0 1h0m1-18h0m0 19h0m0-8h0m0-12h0m0 6h0m0-13h0m0 1h0m0 1h0m0-7h0m0 11h0m0-18h0m0 11h0m0-7h0m1 17h0m0 20h0m0-16h0m0 2h0m0 3h0m0-17h0m0 38h0m0 9h0m0-27h0m0-13h0m1-18h0m0 52h0m0-9h0m0-21h0m0 18h0m0-12h0m0-30h0m0 27h0m0-21h0m0 15h0m0-2h0m0-4h0m1 18h0m0-9h0m0 3h0m0-10h0m0 25h0m0-23h0m0 45h0m0-36h0m0 25h0m0-43h0m1 15h0m0 7h0m0-1h0m0-14h0m0 5h0m0 20h0m0-9h0m0 13h0m0-1h0m0-10h0m0 4h0m0-12h0m1 32h0m0-15h0m0-13h0m0-1h0m0-16h0m0 14h0m0 27h0m0-13h0m0 7h0m0-9h0m0 8h0m0-16h0m1-6h0m0-39h0m0 40h0m0-10h0m0-3h0m0 19h0m0-3h0m0-12h0m0 16h0m1-23h0m0 10h0m0-7h0m0 1h0m0-19h0m0 8h0m0 15h0m0-11h0m0-22h0m0 43h0m0-27h0m0 20h0m0-32h0m0 16h0m1 12h0m0 23h0m0-26h0m0-38h0m0 31h0m0 14h0m0-1h0m0 12h0m0-22h0m0-7h0m0 30h0m1-21h0m0 27h0m0-6h0m0-43h0m0-9h0m0-6h0m0 57h0m0-16h0m0 2h0m0-10h0m0 12h0m0-7h0m1-12h0m0 14h0m0-21h0m0 8h0m0-6h0m0 27h0m0-5h0m0 7h0m0 15h0m0-51h0m0 33h0m0 16h0m0-31h0m1 25h0m0-17h0m0-2h0m0-16h0m0 1h0m0 3h0m0 22h0m0-4h0m0-1h0m0 6h0m0 24h0m1-29h0m0 40h0m0-28h0m0 11h0m0-2h0m0 16h0m0-33h0m0 20h0m0-16h0m0 38h0m0-12h0m0-15h0m0 36h0m1-11h0m0-1h0m0-4h0m0 3h0m0-23h0m0 5h0m0 11h0m0-13h0m0 10h0m0-23h0m0-22h0m1 62h0m0-22h0m0-20h0m0 28h0m0-36h0m0 19h0m0 21h0m0-15h0m0-13h0m0 23h0m0-22h0m0 19h0m0-11h0m1 12h0m0-7h0m0 14h0m0-33h0m0 23h0m0-20h0m0-16h0m0 5h0m0 23h0m0 1h0m0 6h0m0 13h0m1 10h0m0-38h0m0 6h0m0-23h0m0 3h0m0 57h0m0-6h0m0-27h0m0-6h0m0 16h0m0 2h0m0 29h0m0-59h0m0 41h0m1-22h0m0 4h0m0 14h0m0-24h0m0-18h0m0 30h0m0 2h0m0-9h0m0-3h0m0-6h0m0 33h0m0 3h0m0-9h0m0 19h0m1-16h0m0-19h0m0-3h0m0 6h0m0-27h0m0 5h0m0 13h0m0 16h0m0 22h0m0-8h0m1-25h0m0 2h0m0 4h0m0 8h0m0-31h0m0 22h0m0-6h0m0 8h0m0-43h0m0 4h0m0 40h0m0 1h0m0-12h0m0-10h0m1-1h0m0 23h0m0 16h0m0-22h0m0 2h0m0 25h0m0-20h0m0 17h0m0-21h0m0-16h0m0 8h0m0 35h0m1-10h0m0-15h0m0 18h0m0-4h0m0-35h0m0 58h0m0-17h0m0 1h0m0-18h0m0-29h0m0 39h0m0-1h0m0-8h0m1-7h0m0-16h0m0 32h0m0-5h0m0-9h0m0 30h0m0-33h0m0 10h0m0 27h0m0-28h0m0-11h0m0 21h0m0-33h0m1 24h0m0 16h0m0-31h0m0 19h0m0-8h0m0 24h0m0 1h0m0-20h0m0 7h0m0-25h0m0 30h0m1-30h0m0 21h0m0-26h0m0 24h0m0-10h0m0-1h0m0 10h0m0-11h0m0 3h0m0-7h0m0-23h0m0 62h0m0-28h0m1-12h0m0 10h0m0-16h0m0 12h0m0 1h0m0 21h0m0-1h0m0-7h0m0 1h0m0-19h0m0 20h0m0 18h0m1-36h0m0 18h0m0 2h0m0-19h0m0 26h0m0-17h0m0 2h0m0 36h0m0-45h0m0 2h0m0 40h0m1-15h0m0-5h0m0-18h0m0 2h0m0-22h0m0 15h0m0 45h0m0-33h0m0 39h0m0-37h0m0 6h0m1 10h0m0-35h0m0 13h0m0 11h0m0-18h0m0 27h0m0-25h0m0-18h0m0 25h0m0 1h0m0-19h0m0 46h0m0-16h0m0-5h0m1 13h0m0-26h0m0-9h0m0 16h0m0-17h0m0-4h0m0-7h0m0 22h0m0-20h0m0 21h0m0-10h0m1 29h0m0-5h0m0 3h0m0-5h0m0-7h0m0 15h0m0-45h0m0 51h0m0-35h0m0 5h0m0-2h0m1 3h0m0 3h0m0-9h0m0-10h0m0-6h0m0-14h0m0 52h0m0-35h0m0 15h0m0-3h0m1-26h0m0 14h0m0 10h0m0-15h0m0 40h0m0-8h0m0-38h0m0 28h0m0 33h0m0-51h0m0 31h0m0 10h0m1-23h0m0 13h0m0 2h0m0-19h0m0 3h0m0 30h0m0-8h0m0-12h0m0 3h0m0-34h0m1 5h0m0 31h0m0-9h0m0-32h0m0 36h0m0-42h0m0 10h0m0 3h0m0 19h0m0-3h0m0-6h0m1-30h0m0 32h0m0 19h0m0-30h0m0 10h0m0-21h0m0-12h0m0 21h0m0 20h0m0-25h0m0 8h0m1-9h0m0 27h0m0-10h0m0-2h0m0 25h0m0-41h0m0-22h0m0 46h0m0-20h0m0 32h0m0-21h0m1 6h0m0-5h0m0 17h0m0-11h0m0-13h0m0 19h0m0-11h0m0-17h0m0 24h0m0 8h0m0 23h0m0-2h0m1-31h0m0-29h0m0 33h0m0-10h0m0 28h0m0-17h0m0-2h0m0-16h0m0 23h0m0-43h0m0 46h0m0-4h0m0-28h0m1 0h0m0-9h0m0 26h0m0 25h0m0-16h0m0 14h0m0-10h0m0 2h0m0-23h0m0 9h0m0-10h0m1 17h0m0-17h0m0 2h0m0-10h0m0 27h0m0 7h0m0 8h0m0-18h0m0-10h0m0 24h0m0-8h0m1 0h0m0-12h0m0 20h0m0-26h0m0 22h0m0-23h0m0-11h0m0 7h0m0-10h0m0 42h0m0 6h0m0 3h0m1-24h0m0-29h0m0-3h0m0-3h0m0 31h0m0-40h0m0 6h0m0 17h0m0 26h0m0-16h0m0-14h0m0-35h0m0 21h0m0-6h0m1-27h0m0 18h0m0 2h0m0-9h0m0 33h0m0-17h0m0 8h0m0 5h0m0-23h0m0-8h0m0-12h0m0 17h0m1-7h0m0 21h0m0 19h0m0-6h0m0-19h0m0 8h0m0-38h0m0 18h0m0 16h0m0-27h0m0 32h0m0-15h0m0 24h0m0-16h0m1 10h0m0-7h0m0-17h0m0-2h0m0 32h0m0-4h0m0 15h0m0-6h0m0 15h0m0-5h0m0 16h0m0-21h0m1-12h0m0 10h0m0 10h0m0 12h0m0 9h0m0-25h0m0-23h0m0 19h0m0 14h0m0-40h0m0 4h0m0 29h0m1 0h0m0-42h0m0 34h0m0-6h0m0 16h0m0-17h0m0 21h0m0-3h0m0 4h0m0-44h0m0 35h0m0-7h0m0-4h0m1 6h0m0 1h0m0 8h0m0-13h0m0 32h0m0-18h0m0 27h0m0-43h0m0 21h0m0-1h0m0 6h0m1-5h0m0 16h0m0-19h0m0-3h0m0 25h0m0-27h0m0-12h0m0 10h0m0 15h0m0-27h0m0-6h0m0 51h0m0-15h0m1-3h0m0-19h0m0 1h0m0-10h0m0 19h0m0-29h0m0 8h0m0 20h0m0 11h0m0-46h0m0 40h0m0-44h0m0-11h0m1 38h0m0 18h0m0-4h0m0-1h0m0-11h0m0-8h0m0 28h0m0-6h0m0-26h0m0 2h0m0 36h0m0-4h0m1 27h0m0-21h0m0-9h0m0 27h0m0-30h0m0 5h0m0 12h0m0-23h0m0 29h0m0-35h0m0 20h0m0-22h0m0 30h0m1-27h0m0 1h0m0 3h0m0-15h0m0 53h0m0-24h0m0 21h0m0-30h0m0 16h0m0-14h0m0-14h0m0 20h0m1 22h0m0-16h0m0-29h0m0 41h0m0-27h0m0-1h0m0 3h0m0-9h0m0 16h0m0-31h0m0 26h0m0-23h0m1 17h0m0-29h0m0 49h0m0-7h0m0-33h0m0 26h0m0 11h0m0-8h0m0-21h0m0-5h0m1-6h0m0 12h0m0 22h0m0-1h0m0-34h0m0 21h0m0-11h0m0 44h0m0-11h0m0-17h0m0 16h0m0 11h0m0-16h0m1 32h0m0-20h0m0-10h0m0 24h0m0-11h0m0 2h0m0-14h0m0-9h0m0 12h0m0-28h0m0 13h0m1 15h0m0-31h0m0-5h0m0 11h0m0 13h0m0 9h0m0 9h0m0 2h0m0-15h0m0-6h0m1 16h0m0 13h0m0 1h0m0-39h0m0 31h0m0-35h0m0-7h0m0 24h0m0-6h0m0 20h0m0-6h0m0-1h0m1-18h0m0 21h0m0-11h0m0 6h0m0-11h0m0-15h0m0 54h0m0-43h0m0 25h0m0-1h0m0 8h0m0 9h0m0 9h0m1-64h0m0 15h0m0 11h0m0 32h0m0-45h0m0-10h0m0 16h0m0 28h0m0-11h0m0-14h0m0 7h0m0-17h0m0 33h0m1 25h0m0-53h0m0 3h0m0 20h0m0 29h0m0-55h0m0 32h0m0-3h0m0 16h0m0-5h0m0-2h0m0-42h0m1 6h0m0 9h0m0 15h0m0-4h0m0 24h0m0-30h0m0 22h0m0-6h0m0-15h0m0 18h0m0-37h0m0 50h0m0-8h0m1-8h0m0-4h0m0-10h0m0 30h0m0-24h0m0-32h0m0 7h0m0 6h0m0 12h0m0-10h0m0 9h0m0 15h0m0-30h0m1-9h0m0 9h0m0 12h0m0-14h0m0 18h0m0-12h0m0 28h0m0 27h0m0-41h0m0-4h0m0 27h0m0-16h0m0-6h0m0 34h0m1-59h0m0 16h0m0 21h0m0 17h0m0 7h0m0-57h0m0 37h0m0-18h0m0 8h0m0-16h0m0 28h0m1-31h0m0-13h0m0-8h0m0 22h0m0-24h0m0 30h0m0-1h0m0-3h0m0 9h0m0-19h0m0 42h0m0 8h0m0 1h0m0-61h0m1 13h0m0 23h0m0-11h0m0 31h0m0-45h0m0-18h0m0 41h0m0-8h0m0-5h0m0-7h0m1-5h0m0 21h0m0-8h0m0 5h0m0-12h0m0 24h0m0-27h0m0 5h0m0 1h0m0 3h0m0 12h0m0 8h0m1-12h0m0-40h0m0 9h0m0 25h0m0-1h0m0-35h0m0-2h0m0 16h0m0 31h0m0-19h0m0-3h0m1-1h0m0-6h0m0 16h0m0-11h0m0 31h0m0-24h0m0 7h0m0-26h0m0-14h0m0 11h0m0 18h0m0 5h0m1-3h0m0-1h0m0 10h0m0-21h0m0 3h0m0-17h0m0 33h0m0-20h0m0-4h0m0 44h0m1-41h0m0 15h0m0-2h0m0 22h0m0-2h0m0-25h0m0 19h0m0-5h0m0-6h0m0 32h0m1-54h0m0 2h0m0 7h0m0 5h0m0-4h0m0-14h0m0-22h0m0 44h0m0 10h0m0-17h0m0 20h0m1-25h0m0-19h0m0 2h0m0 18h0m0-14h0m0 15h0m0 3h0m0 33h0m0-20h0m0 2h0m0-35h0m0 3h0m0 22h0m0-14h0m1 10h0m0-3h0m0 13h0m0 8h0m0-27h0m0 24h0m0-25h0m0 33h0m0-10h0m0-24h0m0 30h0m1-21h0m0 34h0m0-39h0m0 6h0m0-21h0m0-6h0m0 35h0m0-5h0m0 15h0m0-14h0m0 2h0m0-8h0m1-5h0m0 23h0m0-8h0m0 17h0m0-15h0m0 35h0m0-33h0m0 1h0m0 8h0m0-2h0m0 20h0m1-42h0m0-13h0m0 9h0m0-12h0m0-9h0m0 23h0m0-34h0m0-19h0m0 24h0m0 12h0m0-19h0m0-3h0m0 48h0m1-27h0m0 13h0m0-4h0m0-15h0m0-7h0m0 20h0m0 11h0m0-13h0m0 10h0m0-51h0m0 63h0m0-34h0m0 4h0m1-3h0m0 10h0m0-3h0m0-2h0m0 9h0m0-22h0m0-6h0m0 31h0m0 6h0m1-16h0m0-10h0m0 18h0m0 23h0m0-43h0m0-1h0m0 34h0m0-14h0m0-13h0m0 40h0m0-48h0m0 10h0m0-15h0m1 37h0m0-31h0m0-18h0m0 57h0m0-20h0m0-15h0m0 26h0m0 19h0m0-25h0m0 4h0m0 17h0m0-11h0m1-4h0m0 3h0m0 25h0m0-23h0m0 31h0m0-7h0m0-21h0m0 2h0m0 7h0m0 3h0m0 31h0m0-12h0m1-23h0m0-35h0m0 11h0m0 39h0m0-6h0m0 3h0m0 4h0m0-8h0m0 24h0m0-47h0m0 10h0m0 1h0m0 1h0m1-1h0m0 18h0m0 20h0m0-25h0m0 2h0m0 15h0m0 7h0m0-47h0m0 38h0m0-1h0m0-41h0m0 45h0m0-47h0m1 50h0m0-42h0m0 19h0m0 30h0m0-28h0m0 29h0m0-26h0m0-7h0m0 31h0m0-11h0m0 4h0m1-18h0m0 11h0m0 8h0m0-39h0m0 5h0m0 4h0m0 38h0m0-34h0m0-18h0m0 9h0m0-1h0m1 21h0m0-3h0m0-37h0m0 10h0m0 43h0m0-29h0m0-9h0m0 34h0m0-21h0m0-14h0m0-16h0m0 6h0m0 37h0m1-3h0m0-4h0m0-11h0m0 28h0m0-16h0m0 11h0m0-3h0m0-41h0m0-6h0m0 14h0m0 49h0m0-33h0m1-28h0m0 28h0m0 20h0m0-16h0m0 13h0m0-1h0m0-8h0m0 23h0m0-16h0m0-14h0m1 22h0m0 21h0m0-46h0m0 42h0m0-30h0m0 17h0m0-24h0m0-8h0m0 17h0m0 25h0m0-1h0m0-16h0m1-22h0m0-29h0m0 17h0m0 17h0m0-28h0m0 32h0m0-18h0m0 21h0m0 40h0m0-50h0m0 23h0m0-11h0m1 6h0m0 2h0m0-24h0m0 25h0m0-7h0m0-23h0m0 7h0m0-9h0m0 40h0m0-37h0m0 41h0m0-18h0m1-5h0m0-23h0m0 31h0m0 17h0m0-18h0m0-23h0m0 42h0m0-5h0m0-39h0m0 40h0m0-12h0m0 2h0m0 28h0m1-16h0m0-34h0m0 13h0m0 5h0m0 5h0m0-17h0m0 26h0m0-10h0m0-1h0m0-12h0m1-32h0m0 50h0m0-29h0m0 26h0m0-36h0m0 24h0m0-2h0m0-6h0m0 10h0m0 6h0m0-3h0m0 16h0m0 2h0m1-3h0m0 8h0m0-4h0m0-31h0m0 36h0m0-49h0m0 45h0m0-20h0m0 9h0m0 1h0m0-5h0m0-25h0m0 27h0m1 15h0m0-43h0m0 11h0m0-6h0m0 19h0m0 36h0m0-39h0m0 40h0m0-22h0m0-21h0m0 24h0m0 2h0m0 18h0m1-41h0m0 8h0m0 13h0m0-12h0m0 30h0m0-11h0m0-16h0m0-11h0m0 28h0m0-16h0m0-28h0m0 30h0m0-9h0m1-7h0m0 10h0m0-11h0m0 27h0m0-21h0m0-9h0m0-10h0m0-11h0m0 28h0m0-10h0m0 20h0m0 2h0m1-1h0m0-3h0m0 17h0m0-50h0m0 28h0m0-15h0m0 18h0m0 31h0m0-50h0m0 28h0m1-37h0m0 23h0m0 14h0m0-3h0m0-15h0m0 23h0m0-31h0m0 7h0m0-24h0m0 4h0m0 22h0m0-41h0m1 11h0m0 30h0m0 7h0m0-6h0m0-13h0m0 18h0m0-8h0m0-25h0m0 11h0m0 2h0m0-35h0m1 14h0m0 19h0m0-22h0m0-11h0m0 22h0m0 4h0m0 12h0m0-9h0m0-11h0m0 33h0m0 9h0m0-21h0m1 11h0m0-24h0m0 10h0m0 10h0m0-26h0m0-14h0m0 37h0m0-20h0m0 6h0m0-11h0m0-2h0m1 6h0m0 29h0m0 17h0m0-23h0m0-7h0m0-13h0m0 22h0m0-5h0m0-7h0m0-1h0m1 10h0m0-16h0m0 33h0m0-23h0m0-23h0m0 25h0m0-3h0m0-1h0m0 10h0m0 3h0m0-25h0m1 22h0m0-20h0m0-16h0m0-7h0m0 14h0m0-6h0m0 22h0m0-14h0m0-12h0m0-1h0m0-9h0m0-3h0m1-9h0m0 25h0m0-9h0m0 16h0m0 13h0m0-4h0m0-14h0m0-6h0m0 7h0m0 39h0m1-37h0m0 31h0m0-17h0m0 13h0m0 7h0m0-31h0m0 19h0m0-30h0m0 54h0m0 5h0m0-41h0m0-4h0m1 8h0m0 13h0m0-23h0m0 21h0m0-1h0m0-15h0m0 26h0m0 4h0m0-42h0m0-12h0m0 11h0m1 40h0m0-18h0m0-21h0m0 16h0m0 3h0m0 25h0m0-35h0m0 21h0m0-20h0m0-5h0m0-4h0m0-9h0m1 44h0m0-8h0m0-44h0m0 16h0m0 21h0m0-13h0m0-6h0m0-16h0m0 20h0m0-7h0m0 20h0m0-45h0m0 16h0m1 30h0m0-22h0m0-16h0m0-16h0m0-4h0m0 42h0m0 1h0m0 11h0m0-27h0m0 20h0m0-23h0m0 6h0m1 19h0m0-32h0m0 21h0m0 16h0m0-24h0m0-7h0m0-20h0m0-2h0m0-10h0m0 31h0m0-28h0m0 49h0m0-57h0m1 31h0m0-22h0m0 25h0m0-7h0m0 9h0m0 22h0m0-6h0m0 20h0m0-30h0m0 18h0m0-34h0m0 13h0m1 6h0m0 30h0m0-26h0m0-21h0m0 29h0m0 8h0m0-10h0m0-40h0m0 43h0m0 1h0m0 20h0m0-46h0m1-15h0m0 17h0m0 25h0m0-12h0m0 13h0m0 14h0m0-34h0m0-2h0m0 17h0m0-24h0m1 37h0m0 2h0m0-28h0m0 30h0m0 10h0m0-18h0m0-15h0m0 2h0m0-19h0m0 2h0m0 52h0m0-12h0m1-4h0m0-6h0m0-5h0m0 3h0m0-12h0m0 26h0m0 12h0m0-41h0m0-21h0m0 16h0m0 11h0m0-17h0m1 30h0m0-14h0m0-16h0m0 10h0m0 2h0m0 16h0m0-31h0m0 23h0m0 7h0m0-9h0m0 23h0m1-11h0m0-31h0m0 16h0m0-29h0m0 24h0m0 6h0m0 21h0m0-24h0m0 13h0m0-6h0m0 7h0m1-4h0m0-20h0m0 12h0m0 4h0m0-8h0m0 29h0m0-6h0m0-26h0m0 35h0m0-31h0m0 27h0m0-4h0m1 2h0m0-10h0m0-12h0m0 31h0m0 5h0m0-22h0m0 13h0m0-4h0m0 2h0m0 7h0m0 19h0m0-35h0m0 12h0m0 16h0m1-6h0m0-17h0m0-26h0m0-3h0m0 31h0m0-12h0m0 8h0m0-9h0m0 6h0m0 28h0m0-37h0m0 35h0m1-23h0m0-35h0m0 23h0m0-4h0m0 3h0m0 16h0m0-10h0m0 14h0m0-10h0m0 14h0m1-7h0m0-19h0m0 3h0m0 29h0m0 15h0m0-40h0m0 19h0m0-8h0m0-8h0m0 35h0m0-22h0m0-33h0m1 38h0m0 23h0m0-53h0m0 9h0m0-11h0m0 37h0m0-18h0m0-23h0m0 30h0m0-5h0m0 9h0m1 6h0m0-18h0m0-10h0m0 4h0m0-18h0m0 45h0m0-40h0m0 31h0m0 1h0m0 4h0m0 8h0m0-17h0m1-19h0m0 50h0m0-5h0m0-2h0m0 9h0m0-10h0m0-20h0m0 14h0m0-1h0m0-39h0m1-1h0m0 22h0m0 30h0m0-8h0m0 9h0m0 7h0m0 10h0m0-25h0m0 4h0m0-2h0m0-31h0m0 26h0m1 9h0m0-22h0m0-8h0m0 25h0m0-22h0m0-11h0m0-4h0m0 22h0m0-16h0m0 19h0m0 30h0m0-52h0m0 15h0m1-5h0m0 5h0m0-2h0m0-14h0m0 20h0m0-45h0m0-5h0m0 60h0m0-41h0m0 29h0m0-17h0m0 4h0m1-10h0m0 10h0m0-24h0m0 21h0m0 41h0m0-25h0m0-7h0m0 8h0m0 19h0m0-17h0m0-5h0m0 24h0m0-33h0m1 9h0m0-17h0m0-8h0m0 41h0m0-28h0m0-4h0m0 9h0m0-2h0m0 8h0m0-1h0m0 26h0m1-48h0m0 11h0m0 23h0m0-11h0m0-19h0m0 5h0m0 15h0m0 8h0m0-12h0m0-1h0m0 21h0m0-26h0m1 36h0m0-7h0m0-7h0m0-12h0m0-29h0m0 17h0m0 18h0m0-8h0m0-11h0m0 18h0m0 28h0m1-53h0m0-7h0m0 13h0m0-7h0m0 10h0m0 24h0m0-18h0m0-23h0m0 30h0m0-35h0m0 26h0m0-16h0m1-2h0m0 1h0m0 6h0m0 14h0m0-3h0m0 10h0m0 11h0m0 15h0m0-32h0m0 14h0m0 4h0m1-1h0m0-7h0m0-19h0m0 29h0m0 7h0m0-26h0m0-8h0m0-5h0m0-12h0m0 35h0m0-24h0m1-12h0m0 12h0m0-10h0m0 29h0m0-27h0m0-25h0m0 17h0m0-2h0m0-16h0m0 31h0m0 12h0m0-6h0m0-7h0m1-12h0m0-11h0m0 23h0m0 6h0m0-24h0m0 31h0m0-28h0m0 8h0m0 9h0m0 2h0m0 11h0m1 4h0m0-13h0m0-16h0m0-5h0m0-6h0m0 22h0m0-12h0m0 21h0m0-41h0m0 19h0m0-33h0m0 19h0m0 20h0m1 2h0m0 20h0m0-52h0m0 5h0m0-15h0m0 4h0m0 25h0m0 18h0m0 2h0m0-6h0m0 27h0m0-43h0m1-4h0m0 33h0m0-8h0m0 17h0m0-35h0m0 38h0m0 16h0m0-20h0m0 16h0m0-45h0m0 10h0m1 17h0m0-11h0m0 25h0m0-40h0m0-11h0m0 67h0m0-12h0m0-39h0m0 18h0m0 18h0m0-29h0m1 9h0m0-29h0m0 4h0m0-3h0m0 36h0m0-31h0m0-24h0m0 2h0m0 13h0m0 38h0m0-28h0m0 25h0m1-4h0m0 4h0m0 4h0m0-17h0m0 6h0m0 22h0m0-40h0m0 5h0m0-18h0m0 15h0m0-8h0m0 22h0m1-27h0m0 30h0m0-5h0m0-30h0m0 4h0m0 23h0m0-35h0m0-8h0m0 12h0m0-7h0m0 8h0m1 51h0m0-26h0m0 28h0m0-23h0m0-3h0m0-22h0m0 15h0m0-20h0m0 19h0m0-10h0m0-26h0m0 49h0m0-53h0m1 13h0m0 14h0m0 6h0m0-10h0m0 11h0m0-19h0m0 24h0m0 4h0m0-15h0m0 19h0m0-22h0m0 32h0m0-9h0m1-11h0m0 14h0m0-29h0m0 17h0m0 25h0m0-44h0m0 7h0m0 27h0m0-35h0m0 17h0m0-5h0m0 2h0m1-23h0m0 1h0m0 3h0m0-34h0m0 29h0m0 28h0m0-30h0m0-10h0m0 30h0m0-45h0m0 41h0m1-2h0m0 1h0m0 25h0m0-43h0m0 45h0m0-50h0m0 40h0m0-5h0m0-39h0m0 50h0m0-8h0m0 20h0m0-15h0m1-27h0m0 54h0m0-28h0m0-4h0m0-6h0m0 34h0m0-15h0m0-28h0m0 27h0m0-21h0m0 53h0m0-18h0m0-11h0m0 19h0m1-32h0m0 28h0m0 8h0m0-5h0m0-33h0m0-5h0m0 28h0m0 4h0m0-23h0m0-14h0m1 8h0m0 35h0m0-42h0m0 45h0m0-8h0m0-24h0m0 19h0m0-11h0m0-9h0m0 6h0m0-21h0m0 5h0m0 20h0m1 2h0m0 1h0m0-23h0m0 46h0m0-33h0m0 21h0m0 25h0m0-50h0m0 6h0m0-7h0m0 13h0m0 12h0m1-31h0m0-1h0m0 21h0m0-4h0m0-7h0m0 12h0m0 10h0m0-7h0m0-11h0m0-15h0m1 9h0m0 32h0m0-33h0m0 10h0m0 6h0m0 7h0m0-6h0m0-8h0m0-33h0m0 17h0m0 4h0m1 4h0m0 16h0m0 5h0m0-18h0m0 43h0m0-53h0m0-4h0m0 50h0m0-43h0m0 2h0m0-25h0m0 40h0m1-6h0m0-17h0m0 9h0m0 25h0m0-36h0m0-4h0m0 27h0m0-7h0m0-11h0m0 52h0m0-12h0m0-13h0m0 14h0m1-4h0m0-25h0m0-22h0m0 50h0m0-47h0m0 6h0m0 10h0m0-6h0m0 50h0m0-34h0m1-8h0m0 39h0m0 8h0m0-42h0m0 4h0m0-6h0m0 19h0m0 16h0m0-27h0m0 12h0m0 4h0m1-3h0m0 23h0m0-17h0m0 18h0m0-29h0m0-28h0m0 46h0m0-38h0m0 24h0m0-20h0m0 11h0m0 28h0m0-27h0m1 14h0m0-5h0m0-16h0m0 32h0m0-34h0m0 24h0m0-12h0m0 8h0m0 17h0m0-6h0m0 10h0m0 2h0m1-39h0m0 14h0m0-5h0m0-4h0m0-2h0m0 16h0m0-8h0m0 24h0m0-17h0m0 22h0m0 10h0m0-12h0m0-10h0m1 8h0m0-28h0m0 19h0m0 6h0m0 28h0m0-23h0m0 2h0m0-31h0m0 44h0m0-11h0m0 9h0m0-20h0m0 34h0m1-32h0m0 4h0m0-14h0m0-20h0m0 28h0m0-7h0m0 6h0m0-22h0m0-13h0m0 21h0m0 29h0m0-27h0m0 40h0m1-12h0m0-2h0m0 8h0m0-22h0m0 3h0m0 3h0m0-23h0m0 29h0m0-36h0m0 10h0m0 9h0m0 14h0m1-6h0m0-32h0m0 44h0m0-36h0m0-26h0m0 54h0m0-64h0m0 61h0m0-9h0m0-6h0m0 20h0m0-24h0m1-12h0m0 25h0m0-11h0m0-7h0m0-9h0m0 25h0m0-13h0m0 3h0m0 5h0m0-3h0m0-14h0m0 35h0m1-19h0m0-19h0m0 5h0m0-17h0m0 5h0m0 41h0m0-42h0m0 32h0m0-1h0m0-27h0m0 19h0m0 22h0m0-47h0m1 3h0m0-2h0m0 33h0m0-7h0m0 9h0m0-4h0m0 23h0m0-14h0m0-37h0m0 9h0m0 15h0m1-31h0m0 21h0m0-9h0m0 15h0m0 3h0m0-7h0m0-7h0m0 43h0m0 4h0m0-39h0m1 7h0m0 18h0m0-21h0m0 16h0m0-18h0m0 6h0m0-7h0m0 8h0m0-9h0m0-9h0m1 17h0m0-23h0m0-5h0m0 30h0m0-31h0m0 4h0m0-23h0m0 66h0m0 2h0m0-51h0m0 23h0m0-3h0m1 6h0m0-4h0m0-5h0m0 14h0m0 24h0m0-30h0m0 9h0m0 7h0m0-36h0m0 31h0m0-46h0m1 36h0m0-5h0m0 8h0m0-19h0m0-7h0m0-18h0m0 21h0m0 6h0m0-21h0m0 32h0m0 12h0m1-8h0m0-9h0m0 17h0m0-32h0m0-7h0m0 44h0m0-15h0m0 17h0m0-21h0m0-10h0m0-4h0m0 25h0m1 9h0m0-2h0m0-54h0m0 23h0m0-2h0m0-18h0m0 42h0m0-21h0m0 17h0m0-15h0m0 34h0m0-25h0m0-6h0m1-10h0m0 21h0m0-16h0m0-20h0m0 19h0m0-15h0m0 5h0m0 26h0m0 3h0m0 14h0m0-23h0m0-18h0m1-10h0m0 15h0m0 7h0m0 7h0m0-12h0m0 1h0m0 25h0m0 15h0m0 6h0m0-39h0m0 7h0m0-4h0m0 34h0m0-18h0m1 20h0m0-6h0m0-9h0m0-10h0m0-46h0m0 50h0m0-9h0m0-16h0m0-7h0m0 29h0m0 5h0m0-25h0m1-6h0m0 32h0m0-1h0m0-10h0m0-3h0m0-33h0m0 18h0m0 20h0m0 3h0m0-11h0m0-40h0m0 9h0m1 16h0m0 19h0m0 10h0m0-25h0m0-13h0m0-3h0m0-5h0m0 27h0m0-29h0m0 6h0m1 6h0m0 18h0m0-28h0m0 37h0m0-29h0m0 19h0m0-4h0m0-17h0m0 9h0m0 4h0m0 3h0m0 3h0m0-33h0m0-14h0m1 4h0m0 25h0m0-28h0m0-13h0m0 32h0m0-4h0m0-29h0m0 25h0m0 27h0m0-18h0m1-4h0m0 18h0m0-3h0m0-38h0m0 45h0m0-34h0m0 50h0m0-26h0m0-10h0m0 27h0m0-18h0m0 26h0m1 15h0m0-8h0m0-41h0m0 13h0m0-16h0m0 23h0m0 34h0m0-7h0m0-30h0m0 21h0m0-6h0m0-3h0m0-1h0m1 24h0m0-43h0m0 21h0m0-32h0m0-4h0m0 35h0m0-16h0m0 3h0m0 21h0m0 7h0m0-33h0m0 17h0m0 5h0m1-10h0m0-21h0m0 4h0m0 24h0m0-4h0m0-10h0m0-1h0m0-1h0m0 26h0m0-6h0m0-17h0m0 1h0m0 4h0m0-35h0m1 40h0m0-4h0m0 6h0m0 17h0m0-21h0m0 16h0m0-3h0m0-22h0m0 44h0m0-25h0m1 17h0m0-16h0m0-6h0m0-2h0m0-7h0m0-31h0m0 19h0m0 8h0m0-19h0m0 6h0m0 35h0m0-23h0m1-9h0m0 18h0m0-21h0m0 37h0m0-8h0m0-7h0m0-26h0m0 43h0m0-27h0m0 4h0m0 42h0m1-11h0m0-43h0m0 8h0m0 8h0m0 20h0m0-22h0m0 24h0m0 18h0m0-15h0m0 5h0m0-15h0m1-8h0m0-9h0m0 2h0m0 36h0m0-32h0m0 8h0m0 43h0m0-36h0m0 19h0m0 11h0m1-32h0m0 16h0m0 14h0m0-16h0m0-11h0m0-23h0m0 1h0m0-7h0m0 24h0m0-13h0m0 8h0m0 17h0m1 3h0m0-45h0m0 16h0m0-26h0m0 46h0m0-24h0m0 16h0m0-9h0m0 13h0m0-21h0m0 12h0m0-9h0m0 16h0m1-3h0m0-9h0m0 23h0m0-1h0m0-5h0m0 31h0m0-37h0m0 9h0m0 35h0m0-10h0m0-15h0m0 26h0m0-55h0m1-9h0m0 7h0m0 15h0m0-16h0m0-4h0m0 14h0m0-6h0m0 31h0m0-13h0m0-31h0m0-1h0m0 29h0m0 12h0m1 13h0m0-44h0m0 15h0m0-26h0m0 16h0m0 9h0m0 17h0m0-1h0m0-20h0m0 44h0m0-45h0m0 14h0m1-26h0m0 26h0m0-7h0m0-29h0m0 53h0m0-46h0m0 16h0m0 17h0m0-15h0m0 21h0m0-13h0m0 6h0m0-11h0m0 34h0m1 2h0m0-40h0m0 20h0m0 4h0m0 12h0m0 2h0m0-12h0m0 24h0m0-19h0m0 3h0m0 27h0m0-31h0m0-26h0m1 23h0m0-4h0m0-8h0m0 14h0m0 17h0m0-27h0m0 7h0m0-39h0m0 19h0m0 8h0m0-32h0m0 22h0m1 44h0m0-39h0m0 16h0m0-4h0m0-25h0m0 10h0m0 21h0m0-27h0m0 11h0m0-14h0m0 17h0m0-31h0m0 8h0m1 28h0m0 10h0m0-15h0m0-19h0m0 17h0m0 4h0m0 18h0m0-23h0m0-20h0m0 29h0m1-1h0m0-27h0m0 1h0m0 17h0m0-1h0m0-5h0m0 7h0m0 28h0m0-32h0m0-13h0m0 20h0m0 15h0m1 8h0m0-8h0m0 6h0m0-28h0m0 41h0m0-48h0m0 11h0m0 19h0m0-7h0m0-13h0m0 9h0m0 30h0m1-16h0m0-13h0m0-29h0m0 39h0m0-5h0m0-2h0m0-8h0m0-15h0m0 28h0m0-38h0m0-1h0m0 18h0m0-25h0m1 48h0m0-8h0m0-39h0m0 24h0m0 4h0m0 10h0m0-7h0m0-17h0m0-10h0m0-2h0m1 0h0m0-7h0m0 20h0m0 9h0m0-30h0m0 50h0m0-38h0m0-6h0m0 46h0m0 12h0m0-23h0m0-23h0m0 21h0m1-19h0m0 23h0m0-31h0m0 40h0m0-17h0m0-11h0m0-16h0m0 2h0m0 51h0m0-58h0m0 42h0m0-22h0m0-21h0m1 19h0m0-22h0m0 48h0m0-8h0m0-13h0m0 2h0m0-9h0m0 26h0m0 9h0m0-6h0m1-9h0m0-3h0m0-11h0m0-14h0m0 5h0m0 4h0m0 3h0m0 23h0m0-11h0m0-9h0m0 7h0m1-28h0m0 18h0m0 13h0m0-28h0m0 5h0m0 5h0m0-37h0m0 15h0m0-17h0m0 25h0m0 11h0m1 15h0m0-24h0m0 36h0m0-40h0m0-9h0m0 5h0m0 50h0m0-40h0m0 16h0m0 1h0m0-13h0m0-21h0m0 27h0m1-23h0m0 9h0m0-29h0m0 58h0m0-18h0m0 14h0m0-12h0m0 29h0m0-16h0m0-12h0m0 9h0m0-15h0m1 8h0m0 9h0m0-10h0m0-7h0m0-4h0m0 35h0m0-20h0m0-27h0m0 41h0m0-27h0m0 18h0m0-22h0m0 8h0m0 11h0m1 6h0m0 11h0m0-18h0m0-13h0m0-24h0m0 2h0m0 29h0m0 5h0m0-2h0m0-15h0m0 11h0m0-34h0m1 29h0m0 19h0m0-23h0m0-9h0m0 18h0m0 6h0m0-10h0m0 12h0m0-32h0m0-8h0m0 18h0m1 15h0m0-34h0m0 56h0m0-16h0m0-42h0m0 31h0m0 1h0m0 12h0m0-53h0m0 14h0m0 33h0m0-26h0m0 8h0m1-28h0m0-11h0m0 18h0m0-14h0m0 4h0m0 40h0m0-24h0m0 25h0m0-33h0m0 39h0m0-30h0m1-18h0m0 17h0m0 29h0m0-30h0m0 12h0m0 13h0m0-50h0m0 35h0m0-3h0m0-14h0m0 43h0m0-20h0m0-2h0m1-7h0m0-13h0m0 6h0m0 1h0m0 11h0m0-9h0m0-28h0m0 55h0m0-44h0m0 10h0m0 20h0m0-10h0m0-16h0m1 36h0m0-21h0m0-4h0m0 21h0m0-40h0m0 27h0m0 30h0m0 6h0m0-15h0m0-3h0m1 17h0m0-40h0m0 10h0m0 3h0m0 3h0m0 33h0m0-3h0m0-7h0m0-33h0m0 16h0m0 11h0m1 3h0m0-14h0m0 7h0m0 19h0m0-35h0m0 22h0m0 29h0m0-23h0m0 28h0m0-46h0m0 15h0m0 24h0m1-20h0m0 18h0m0 6h0m0-35h0m0 3h0m0 31h0m0-16h0m0-13h0m0 22h0m0-55h0m0 26h0m0-20h0m0-9h0m1 7h0m0 7h0m0-1h0m0 9h0m0-23h0m0-1h0m0-5h0m0 7h0m0 42h0m0-11h0m0-7h0m0-14h0m0 26h0m1-7h0m0 1h0m0 9h0m0-25h0m0 32h0m0-23h0m0 17h0m0-19h0m0 20h0m0-14h0m0-20h0m0 26h0m0-20h0m1 14h0m0 2h0m0-4h0m0 17h0m0-25h0m0-4h0m0-14h0m0 13h0m0 20h0m0-14h0m0 21h0m1-5h0m0-25h0m0 43h0m0-29h0m0 4h0m0-7h0m0 20h0m0-7h0m0-31h0m0 17h0m0-27h0m0 57h0m0-43h0m1-1h0m0-1h0m0 32h0m0-5h0m0-9h0m0-24h0m0 18h0m0-28h0m0 30h0m0-11h0m0 21h0m0-2h0m0-18h0m1-1h0m0 24h0m0-35h0m0 27h0m0-25h0m0 50h0m0-21h0m0 5h0m0-22h0m0 23h0m1-12h0m0 22h0m0 5h0m0-35h0m0 29h0m0-5h0m0-20h0m0 34h0m0-7h0m0-15h0m0-1h0m0-20h0m0 17h0m0 8h0m1 6h0m0-4h0m0 10h0m0-28h0m0 45h0m0 7h0m0-5h0m0-28h0m0-4h0m0-4h0m0 22h0m1-36h0m0 22h0m0-11h0m0 24h0m0-10h0m0 12h0m0 7h0m0-28h0m0 16h0m0 24h0m0-18h0m0-21h0m0-14h0m1 15h0m0 30h0m0-12h0m0-10h0m0-35h0m0 41h0m0 19h0m0-18h0m0-12h0m0 2h0m1-20h0m0-1h0m0 27h0m0 2h0m0-30h0m0-4h0m0 35h0m0-33h0m0 14h0m0-23h0m0 46h0m0-26h0m0 7h0m1 13h0m0-22h0m0 24h0m0-3h0m0 6h0m0-12h0m0-10h0m0-4h0m0 29h0m0 5h0m0 1h0m1-26h0m0 11h0m0 37h0m0-12h0m0-6h0m0-29h0m0 28h0m0-22h0m0-1h0m0 2h0m0 12h0m0-41h0m0 24h0m1-24h0m0 38h0m0 14h0m0-50h0m0 45h0m0-20h0m0 10h0m0-7h0m0 3h0m0 22h0m0-4h0m0-46h0m1 24h0m0-24h0m0 33h0m0-18h0m0 17h0m0 13h0m0-14h0m0-1h0m0-32h0m0 52h0m0-7h0m0-23h0m0 19h0m1-1h0m0-17h0m0 34h0m0 4h0m0-18h0m0 2h0m0-17h0m0 22h0m0-21h0m0 18h0m0-22h0m1 15h0m0-25h0m0 18h0m0 14h0m0-1h0m0-8h0m0 11h0m0-22h0m0 2h0m0 14h0m1 3h0m0 2h0m0-40h0m0-4h0m0 31h0m0-5h0m0-4h0m0-10h0m0 3h0m0 15h0m0-12h0m0 3h0m1-15h0m0 24h0m0-10h0m0-11h0m0-19h0m0 34h0m0-48h0m0 41h0m0-17h0m0 21h0m0-41h0m0 16h0m0-1h0m1-14h0m0-5h0m0 32h0m0-15h0m0 12h0m0-18h0m0 53h0m0-62h0m0 33h0m0 28h0m0-35h0m0 19h0m1-36h0m0 47h0m0-37h0m0 26h0m0-30h0m0-8h0m0 22h0m0 22h0m0-29h0m0 12h0m0-33h0m0 16h0m1 11h0m0 2h0m0 21h0m0-11h0m0-19h0m0 5h0m0 9h0m0 6h0m0-7h0m0 4h0m0 8h0m1 17h0m0-38h0m0 6h0m0-1h0m0 24h0m0-41h0m0 21h0m0-7h0m0 16h0m0-8h0m0 7h0m0-20h0m0 18h0m1 2h0m0 9h0m0-24h0m0-9h0m0-2h0m0 45h0m0-46h0m0 25h0m0 16h0m0-51h0m0 28h0m1 40h0m0-59h0m0 35h0m0-38h0m0 11h0m0 14h0m0 18h0m0-19h0m0 8h0m0-22h0m0 12h0m0-27h0m0 24h0m1-29h0m0 17h0m0 16h0m0-5h0m0 41h0m0-22h0m0-3h0m0 6h0m0 8h0m0-31h0m0 15h0m0-6h0m1 0h0m0-25h0m0-1h0m0 25h0m0-41h0m0 9h0m0 23h0m0 13h0m0-17h0m0-8h0m0 9h0m0-23h0m0 46h0m1-18h0m0-9h0m0 5h0m0-3h0m0 10h0m0-51h0m0 28h0m0-15h0m0 22h0m0-3h0m0-27h0m0 5h0m0-9h0m1-5h0m0 10h0m0 26h0m0 1h0m0-36h0m0 27h0m0-14h0m0 26h0m0-16h0m0 7h0m0-10h0m0-19h0m1 16h0m0-17h0m0 23h0m0-9h0m0 22h0m0-34h0m0 50h0m0-28h0m0 2h0m0 36h0m0-7h0m0 2h0m0-22h0m0 6h0m1-9h0m0-8h0m0-31h0m0 51h0m0-24h0m0 6h0m0-15h0m0 43h0m0-8h0m0-7h0m0 4h0m0-30h0m0 5h0m1 24h0m0-16h0m0 13h0m0-12h0m0-14h0m0 15h0m0-30h0m0-8h0m0 18h0m0 27h0m0-46h0m0-9h0m0 34h0m0-8h0m1-7h0m0 11h0m0-16h0m0 13h0m0 18h0m0-1h0m0 4h0m0 7h0m0-30h0m0 10h0m0-3h0m1-2h0m0-1h0m0 24h0m0 15h0m0 4h0m0-52h0m0 25h0m0 22h0m0-3h0m0 20h0m0-36h0m0 22h0m0 24h0m1-48h0m0 37h0m0 25h0m0-28h0m0-2h0m0 21h0m0-42h0m0 3h0m0 8h0m0 7h0m0 17h0m0-18h0m0-13h0m1 16h0m0-17h0m0-6h0m0 27h0m0-1h0m0-12h0m0-21h0m0-2h0m0 39h0m0-19h0m0-33h0m0 41h0m0-32h0m1 25h0m0-7h0m0 26h0m0-8h0m0 3h0m0-10h0m0-28h0m0 21h0m0-20h0m0-3h0m0 4h0m1-5h0m0 18h0m0-5h0m0 7h0m0 18h0m0-41h0m0 19h0m0-13h0m0 37h0m0-3h0m1-30h0m0 41h0m0-21h0m0-1h0m0-7h0m0 3h0m0-38h0m0 33h0m0-1h0m0 24h0m0 1h0m0-12h0m0 9h0m0-28h0m1 23h0m0-8h0m0-1h0m0 11h0m0 7h0m0-13h0m0-11h0m0 32h0m0-38h0m0 24h0m0-8h0m0-21h0m1 49h0m0-24h0m0 8h0m0-7h0m0 26h0m0-12h0m0-16h0m0-1h0m0-32h0m0 29h0m0-3h0m0 12h0m0 15h0m1-16h0m0-24h0m0 11h0m0 25h0m0 7h0m0-9h0m0 11h0m0-41h0m0 8h0m0 13h0m0 1h0m0 7h0m0-4h0m0 28h0m1-20h0m0 7h0m0-27h0m0 42h0m0-34h0m0 21h0m0-23h0m0 20h0m0-10h0m0-7h0m0-16h0m0 44h0m0-15h0m1 2h0m0 8h0m0-15h0m0 13h0m0 19h0m0-26h0m0 29h0m0-17h0m0-19h0m0 37h0m0-34h0m0 3h0m1 8h0m0-9h0m0-11h0m0 32h0m0-19h0m0-15h0m0 17h0m0 16h0m0-35h0m0-9h0m0-6h0m0 23h0m1-23h0m0 4h0m0 9h0m0 18h0m0-7h0m0 15h0m0 6h0m0-19h0m0-8h0m0-1h0m0 5h0m0-25h0m0 13h0m1 21h0m0-17h0m0 23h0m0-38h0m0 9h0m0 43h0m0-48h0m0 22h0m0-5h0m0 9h0m0 24h0m0-12h0m1-8h0m0 15h0m0-17h0m0-18h0m0 14h0m0-29h0m0 32h0m0-24h0m0-1h0m0 31h0m1-35h0m0 30h0m0-11h0m0 7h0m0 18h0m0-35h0m0 26h0m0 5h0m0-12h0m0 15h0m0 9h0m1-37h0m0 20h0m0-40h0m0 5h0m0 22h0m0 1h0m0 11h0m0-14h0m0-21h0m0 38h0m0-32h0m1 33h0m0-37h0m0 23h0m0-15h0m0 12h0m0-4h0m0-12h0m0 11h0m0-14h0m0 49h0m0 7h0m0-25h0m0 17h0m0-22h0m1 18h0m0-14h0m0-21h0m0 39h0m0 10h0m0-34h0m0 22h0m0-7h0m0-11h0m0 13h0m0-40h0m0 34h0m0-33h0m1 6h0m0 32h0m0-14h0m0-6h0m0-40h0m0 50h0m0-31h0m0 44h0m0-24h0m0-17h0m0 46h0m0-37h0m0 20h0m1-1h0m0-9h0m0 2h0m0 8h0m0-2h0m0 5h0m0 20h0m0-52h0m0-2h0m0 24h0m0 22h0m0 11h0m0-19h0m1-10h0m0 15h0m0-12h0m0-16h0m0 2h0m0 9h0m0-3h0m0 14h0m0-23h0m0-2h0m0 22h0m0-15h0m0-28h0m0 3h0m1 37h0m0-9h0m0-39h0m0 9h0m0 2h0m0 35h0m0-17h0m0 2h0m0-5h0m0 23h0m0-5h0m0-12h0m0-18h0m1 51h0m0-20h0m0-30h0m0 36h0m0-16h0m0-16h0m0 41h0m0-23h0m0-34h0m0 43h0m0 9h0m0-28h0m1-11h0m0-2h0m0-19h0m0 26h0m0-20h0m0-4h0m0 3h0m0 17h0m0-39h0m0 64h0m0 2h0m0-5h0m1-13h0m0-1h0m0 7h0m0-34h0m0 49h0m0 4h0m0-20h0m0 5h0m0 5h0m0-20h0m0 12h0m0-17h0m0 38h0m1-34h0m0 7h0m0 20h0m0 5h0m0-24h0m0-12h0m0 13h0m0-3h0m0-12h0m0 11h0m0 44h0m0-47h0m1 10h0m0 6h0m0-23h0m0 44h0m0-13h0m0-26h0m0 2h0m0 11h0m0 10h0m0-19h0m0 12h0m0 25h0m1-47h0m0 30h0m0-34h0m0 9h0m0-6h0m0 2h0m0 43h0m0-23h0m0 11h0m0 3h0m0 1h0m0-9h0m1 14h0m0-27h0m0 16h0m0 14h0m0-20h0m0-2h0m0 27h0m0-36h0m0 12h0m0-6h0m1 32h0m0-30h0m0-19h0m0-7h0m0-10h0m0 19h0m0-20h0m0 3h0m0 24h0m0 5h0m0-25h0m0 8h0m0 33h0m0-17h0m1-39h0m0 12h0m0 32h0m0-47h0m0 18h0m0 1h0m0-39h0m0-2h0m1 47h0m0-18h0m0 2h0m0 7h0m0 21h0m0-23h0m0 4h0m0 10h0m0-31h0m0 15h0m1 0h0m0 1h0m0 4h0m0-1h0m0 2h0m0 9h0m0-5h0m0-38h0m0 10h0m0 27h0m0 17h0m0-46h0m0 15h0m1-15h0m0 46h0m0-20h0m0-7h0m0-24h0m0 26h0m0-7h0m0-3h0m0 18h0m0 4h0m0-1h0m1-7h0m0-13h0m0 19h0m0-21h0m0 10h0m0-5h0m0 20h0m0 7h0m0-12h0m0 8h0m0-22h0m0 40h0m0-16h0m1-3h0m0 22h0m0-11h0m0 15h0m0-17h0m0-32h0m0 53h0m0-26h0m0 14h0m0-17h0m0 18h0m1-34h0m0 10h0m0 45h0m0-23h0m0 6h0m0 22h0m0-29h0m0-4h0m0 15h0m0-31h0m0 28h0m0-30h0m0-14h0m1 60h0m0-33h0m0-23h0m0 21h0m0 14h0m0-20h0m0 9h0m0 38h0m0-29h0m0 11h0m0-25h0m1 22h0m0-8h0m0-32h0m0-4h0m0 39h0m0-30h0m0 23h0m0-17h0m0-19h0m0 9h0m0 20h0m0-14h0m1-2h0m0-3h0m0 16h0m0-6h0m0-3h0m0 45h0m0-21h0m0 10h0m0 18h0m0-21h0m0-27h0m0 35h0m1 15h0m0-31h0m0 5h0m0-3h0m0 25h0m0-33h0m0-2h0m0 43h0m0-40h0m0 20h0m0 24h0m1-60h0m0 16h0m0-29h0m0 28h0m0 11h0m0 14h0m0-36h0m0 41h0m0-24h0m0 4h0m0-18h0m0 31h0m0-8h0m1-49h0m0 26h0m0 3h0m0 7h0m0 1h0m0-21h0m0 7h0m0 20h0m0-10h0m0 20h0m0-2h0m0-33h0m1 12h0m0 18h0m0-38h0m0 35h0m0-13h0m0 21h0m0-19h0m0-18h0m0 43h0m0-5h0m1-16h0m0 5h0m0-28h0m0 18h0m0-20h0m0 29h0m0-23h0m0 1h0m0 47h0m0 4h0m0-14h0m1 22h0m0-43h0m0 19h0m0-12h0m0-16h0m0 10h0m0 34h0m0 5h0m0-10h0m0-2h0m0-2h0m0-11h0m1 28h0m0 7h0m0-30h0m0-28h0m0 45h0m0-12h0m0 3h0m0-21h0m0 5h0m0 18h0m0-15h0m0-25h0m1 63h0m0-12h0m0-1h0m0-5h0m0-21h0m0-6h0m0-29h0m0 3h0m0 12h0m0 11h0m0-17h0m0 5h0m0 23h0m1-20h0m0 21h0m0-14h0m0 5h0m0 8h0m0 23h0m0-53h0m0-8h0m0 2h0m1 49h0m0-2h0m0 13h0m0-16h0m0 23h0m0-25h0m0-12h0m0 20h0m0-13h0m0 16h0m0-33h0m1 43h0m0-5h0m0-9h0m0-7h0m0-4h0m0 9h0m0-28h0m0 54h0m0-34h0m0 23h0m0 2h0m0-21h0m1-19h0m0 16h0m0-2h0m0 4h0m0 4h0m0-21h0m0-7h0m0 9h0m0 23h0m0-16h0m0-4h0m0 39h0m1-16h0m0-9h0m0 17h0m0-13h0m0-10h0m0 5h0m0-1h0m0 8h0m0-23h0m0-4h0m0 8h0m0 16h0m1-19h0m0-17h0m0 9h0m0 14h0m0 16h0m0-31h0m0-11h0m0 50h0m0-18h0m0-34h0m0 19h0m1 28h0m0-1h0m0 19h0m0-26h0m0 29h0m0-24h0m0-17h0m0-3h0m0-13h0m0 10h0m0-4h0m0 24h0m0 21h0m1-28h0m0-3h0m0 5h0m0 8h0m0-42h0m0 39h0m0-11h0m0-24h0m0 6h0m0 34h0m0-26h0m0 29h0m1-33h0m0 15h0m0 39h0m0-9h0m0-26h0m0 3h0m0-24h0m0 9h0m0 19h0m0-30h0m0 5h0m0-10h0m1 5h0m0-8h0m0 21h0m0-11h0m0 7h0m0-38h0m0 14h0m0-3h0m0-18h0m0 1h0m0-9h0m1 6h0m0 37h0m0-2h0m0-7h0m0 4h0m0 9h0m0-2h0m0-22h0m0 51h0m0-1h0m0-1h0m0-18h0m0 4h0m0-23h0m1-23h0m0 31h0m0 26h0m0-24h0m0-14h0m0-3h0m0 31h0m0-12h0m0 5h0m0-4h0m0 15h0m0-37h0m1 8h0m0 19h0m0 2h0m0 7h0m0 5h0m0-17h0m0-13h0m0 6h0m0 33h0m0-37h0m1 12h0m0-28h0m0 24h0m0-6h0m0-33h0m0 29h0m0-10h0m0 9h0m0 24h0m0 1h0m0-6h0m1 11h0m0-29h0m0-1h0m0-12h0m0 32h0m0 4h0m0-8h0m0-5h0m0 24h0m0-23h0m0-20h0m0 12h0m0 10h0m0 26h0m1-11h0m0-17h0m0-1h0m0 42h0m0-36h0m0 7h0m0 1h0m0-48h0m0 21h0m0 23h0m0-14h0m0 20h0m1-24h0m0-9h0m0 32h0m0-40h0m0-4h0m0 17h0m0-16h0m0-4h0m0-4h0m0 15h0m0 1h0m1 0h0m0 39h0m0-55h0m0 15h0m0-3h0m0 14h0m0-1h0m0-22h0m0 35h0m0-19h0m0-9h0m1 5h0m0-17h0m0-9h0m0 4h0m0-2h0m0 9h0m0-18h0m0 1h0m0 30h0m0 6h0m0 1h0m0-14h0m1 3h0m0 5h0m0 7h0m0 1h0m0 5h0m0-12h0m0 35h0m0-52h0m0 12h0m0-36h0m0 7h0m0 2h0m0 33h0m1-33h0m0 14h0m0 3h0m0 25h0m0-11h0m0-3h0m0-37h0m0 35h0m0-23h0m0-24h0m0 34h0m1-21h0m0 30h0m0 15h0m0-16h0m0-23h0m0 32h0m0-16h0m0 18h0m0 15h0m0-3h0m0-2h0m0 16h0m1 3h0m0 15h0m0-43h0m0 14h0m0-27h0m0 18h0m0-15h0m0 17h0m0 11h0m0-15h0m0 34h0m1-44h0m0 2h0m0 35h0m0-43h0m0 13h0m0-23h0m0 43h0m0-8h0m0-14h0m0 48h0m0-25h0m0-3h0m0 22h0m0-11h0m1-20h0m0-2h0m0-21h0m0 8h0m0 38h0m0-39h0m0 11h0m0 12h0m0 19h0m0-53h0m0 5h0m0 26h0m1 23h0m0-34h0m0 49h0m0-53h0m0 18h0m0-4h0m0-13h0m0-21h0m0 13h0m0 5h0m0 17h0m1-4h0m0 19h0m0-16h0m0 28h0m0-11h0m0 13h0m0-29h0m0-8h0m0 9h0m0 29h0m0-58h0m1 30h0m0 4h0m0-10h0m0 22h0m0-31h0m0 17h0m0-4h0m0 13h0m0 15h0m0-7h0m0-39h0m1 15h0m0 10h0m0-14h0m0-22h0m0 11h0m0 17h0m0 5h0m0-9h0m0 13h0m0 5h0m0-27h0m1-11h0m0 24h0m0-2h0m0-18h0m0 42h0m0-30h0m0 33h0m0 7h0m0-18h0m0-1h0m0 21h0m0-45h0m1 37h0m0-8h0m0-14h0m0 19h0m0 8h0m0 9h0m0-45h0m0 34h0m0-8h0m0-30h0m1 18h0m0-23h0m0 59h0m0-37h0m0 7h0m0 5h0m0-19h0m0 2h0m0 27h0m0-30h0m0 5h0m0-21h0m1 46h0m0-27h0m0 10h0m0-8h0m0 41h0m0-45h0m0 6h0m0 13h0m0-26h0m0 18h0m0-27h0m0 5h0m0 28h0m1-26h0m0 18h0m0 5h0m0-2h0m0-19h0m0 28h0m0-21h0m0 31h0m0-28h0m0 31h0m0 3h0m0-20h0m1 20h0m0-50h0m0 15h0m0 11h0m0-6h0m0 11h0m0-21h0m0 24h0m0 21h0m0-9h0m1 3h0m0-25h0m0 9h0m0-5h0m0 19h0m0-2h0m0-28h0m0-8h0m0 5h0m0 38h0m1-1h0m0-61h0m0 11h0m0-10h0m0 32h0m0 22h0m0-4h0m0 8h0m0-30h0m0 23h0m0-35h0m1 34h0m0-34h0m0-16h0m0 62h0m0 3h0m0-22h0m0-14h0m0 6h0m0 14h0m0-23h0m0 15h0m0 6h0m0-13h0m1-24h0m0 16h0m0-27h0m0 34h0m0-18h0m0 48h0m0-20h0m0-1h0m0 20h0m0 4h0m0 3h0m0 2h0m0-13h0m1-9h0m0-5h0m0 23h0m0-13h0m0 8h0m0-30h0m0-12h0m0 28h0m0-2h0m0 6h0m0-11h0m0 22h0m0-47h0m1-4h0m0 23h0m0 7h0m0-10h0m0-18h0m0 25h0m0-19h0m0 9h0m0 37h0m0-50h0m0 3h0m0 17h0m0 17h0m1-21h0m0-1h0m0-9h0m0-16h0m0 28h0m0-21h0m0 10h0m0-19h0m0 8h0m0 52h0m0-2h0m1-13h0m0-24h0m0 13h0m0 9h0m0 22h0m0-19h0m0-9h0m0 25h0m0-12h0m0-20h0m0 23h0m0-4h0m0-17h0m1 41h0m0-26h0m0 3h0m0-7h0m0-19h0m0 3h0m0 34h0m0-28h0m0 7h0m0-20h0m0 9h0m0-7h0m1 29h0m0-12h0m0-2h0m0 16h0m0-27h0m0 16h0m0 1h0m0 6h0m0 13h0m0-41h0m0 1h0m0-13h0m1 9h0m0 13h0m0-34h0m0 31h0m0-12h0m0 35h0m0-40h0m0 2h0m0 20h0m1-22h0m0 9h0m0-7h0m0-7h0m0 32h0m0-14h0m0-20h0m0 19h0m0 16h0m0-31h0m0 9h0m0-3h0m1 16h0m0-5h0m0-9h0m0 13h0m0 5h0m0-30h0m0-1h0m0 5h0m0 32h0m0-39h0m0 47h0m0-31h0m0 5h0m1-21h0m0 25h0m0-2h0m0-31h0m0 1h0m0 36h0m0-15h0m0 14h0m0 15h0m0-53h0m0 27h0m0-10h0m0-2h0m1 34h0m0-35h0m0 24h0m0 9h0m0-29h0m0 5h0m0 16h0m0-8h0m0-29h0m0 11h0m0 11h0m0 9h0m0-35h0m0 39h0m1 25h0m0-41h0m0 34h0m0 25h0m0-11h0m0-2h0m0 7h0m0-26h0m0 2h0m0-42h0m0 25h0m0 11h0m0-14h0m1 1h0m0-8h0m0-5h0m0 49h0m0-7h0m0-15h0m0-31h0m0 38h0m0-39h0m0 20h0m0 1h0m0-28h0m0 35h0m1-10h0m0-6h0m0-8h0m0 13h0m0-23h0m0 7h0m0 14h0m0 5h0m0 11h0m0-6h0m1-13h0m0 21h0m0-55h0m0 8h0m0 19h0m0 3h0m0-33h0m0 45h0m0-4h0m0-17h0m0-8h0m0 12h0m0-6h0m1 8h0m0-16h0m0-5h0m0 7h0m0 9h0m0-26h0m0 9h0m0 33h0m0 6h0m0-14h0m0 4h0m0-24h0m1-14h0m0 29h0m0-2h0m0-18h0m0 8h0m0 6h0m0 27h0m0-35h0m0 28h0m0-47h0m0 45h0m1-18h0m0-24h0m0 44h0m0-4h0m0 2h0m0-25h0m0 11h0m0-1h0m0 9h0m0-22h0m0-27h0m0 31h0m0-8h0m1 27h0m0-36h0m0 53h0m0-13h0m0 23h0m0-47h0m0 13h0m0-10h0m0 9h0m0-26h0m0 7h0m0 3h0m0 53h0m1-9h0m0-18h0m0-14h0m0 41h0m0-59h0m0 25h0m0-18h0m0 46h0m0 4h0m0-15h0m0-1h0m0 15h0m0-51h0m1 11h0m0 31h0m0 22h0m0-55h0m0 45h0m0-13h0m0 5h0m0-6h0m0-16h0m0-2h0m0 17h0m0 23h0m1-38h0m0-2h0m0-20h0m0 51h0m0-8h0m0 7h0m0-8h0m0-14h0m0 7h0m0-32h0m0 23h0m0 13h0m0-8h0m1 11h0m0-23h0m0 15h0m0-13h0m0-4h0m0-4h0m0 17h0m0-34h0m0 43h0m0-31h0m0 21h0m0-3h0m0 20h0m0 7h0m1-22h0m0 40h0m0-32h0m0 29h0m0 11h0m0-31h0m0 6h0m0-35h0m0 55h0m0-33h0m0-4h0m0 13h0m1 19h0m0-35h0m0-4h0m0-1h0m0 4h0m0-21h0m0 13h0m0 33h0m0-37h0m0 33h0m0 6h0m0-15h0m1-19h0m0 17h0m0-9h0m0 21h0m0-40h0m0 22h0m0-35h0m0 26h0m0 13h0m0 12h0m0-8h0m0-40h0m0 52h0m1 5h0m0-35h0m0-12h0m0 13h0m0 8h0m0-10h0m0 4h0m0-21h0m0-11h0m0 40h0m0 18h0m0 4h0m0 8h0m0-15h0m1 25h0m0-37h0m0 15h0m0 7h0m0-33h0m0 50h0m0-43h0m0 13h0m0-3h0m0-1h0m0 15h0m0-33h0m0-7h0m1 52h0m0-28h0m0 6h0m0 4h0m0-11h0m0 6h0m0-29h0m0 35h0m0-14h0m0-3h0m0-34h0m1 39h0m0-38h0m0 64h0m0-4h0m0-20h0m0 8h0m0-39h0m0 16h0m0 12h0m0-7h0m0 4h0m0-35h0m1 38h0m0 6h0m0 5h0m0 10h0m0 3h0m0-27h0m0 28h0m0 20h0m0-31h0m0-13h0m1 14h0m0 16h0m0-10h0m0-5h0m0-5h0m0-7h0m0-14h0m0 27h0m0-11h0m0-7h0m0 1h0m0 28h0m1-32h0m0 23h0m0-6h0m0 10h0m0-20h0m0 3h0m0 8h0m0-19h0m0 14h0m0-27h0m0 4h0m0-3h0m0 14h0m1 16h0m0-21h0m0 1h0m0-25h0m0-6h0m0 15h0m0-5h0m0 46h0m0-22h0m0 9h0m0-27h0m0 1h0m1 3h0m0 7h0m0 8h0m0-21h0m0 11h0m0-17h0m0 25h0m0-3h0m0 8h0m0-21h0m0 34h0m0 19h0m0-11h0m1-3h0m0-10h0m0-26h0m0 14h0m0-8h0m0-5h0m0 12h0m0-3h0m0 22h0m0-12h0m0 7h0m0-12h0m0 25h0m1-22h0m0 13h0m0-19h0m0-1h0m0 2h0m0 17h0m0-24h0m0 44h0m0-30h0m0 23h0m0 5h0m1-17h0m0-31h0m0-12h0m0 18h0m0-2h0m0 8h0m0 8h0m0 9h0m0-4h0m0-22h0m0 21h0m0 17h0m1-36h0m0 19h0m0-30h0m0 27h0m0-10h0m0 19h0m0-28h0m0 13h0m0-2h0m0 15h0m0 16h0m1-9h0m0 35h0m0-30h0m0-22h0m0 10h0m0-42h0m0 34h0m0 3h0m0-24h0m0 16h0m0-22h0m0 10h0m1 9h0m0-8h0m0-8h0m0 25h0m0-7h0m0-14h0m0-3h0m0 8h0m0 35h0m0-18h0m0 13h0m0-7h0m0 17h0m0 5h0m1-50h0m0 5h0m0 34h0m0-15h0m0-1h0m0 13h0m0-20h0m0 13h0m0 11h0m0-9h0m0-14h0m0-4h0m1-7h0m0 8h0m0 4h0m0 4h0m0-5h0m0 15h0m0 20h0m0-16h0m0-33h0m0 9h0m0 36h0m0-17h0m0 11h0m0 3h0m1-19h0m0-26h0m0 16h0m0 15h0m0 27h0m0-62h0m0 46h0m0-19h0m0-14h0m0 8h0m0-4h0m0 34h0m0-13h0m1-6h0m0 5h0m0 7h0m0-41h0m0 27h0m0-37h0m0-2h0m0 19h0m0 17h0m0-16h0m0 4h0m0-2h0m0-13h0m1 4h0m0 2h0m0-25h0m0-15h0m0 30h0m0 6h0m0 5h0m0-20h0m0-2h0m0 10h0m0-20h0m1 30h0m0-14h0m0 42h0m0-21h0m0-20h0m0 38h0m0-24h0m0 42h0m0-22h0m0-33h0m0 20h0m0-30h0m1 5h0m0 38h0m0-11h0m0-7h0m0-11h0m0-10h0m0 17h0m0 25h0m0-12h0m0-25h0m0-1h0m0 47h0m1-55h0m0 35h0m0-24h0m0 2h0m0-9h0m0 21h0m0 18h0m0-10h0m0-11h0m0-8h0m0 14h0m1 14h0m0 12h0m0-25h0m0-35h0m0 33h0m0-15h0m0-3h0m0 59h0m0-30h0m0-8h0m0-25h0m0 29h0m1-8h0m0 13h0m0-10h0m0-40h0m0 21h0m0 7h0m0 25h0m0 7h0m0-40h0m0 10h0m0 5h0m1 28h0m0-48h0m0-17h0m0 33h0m0 4h0m0-12h0m0 10h0m0 26h0m0-21h0m0-13h0m0-17h0m0 35h0m0-15h0m0-11h0m1-10h0m0-28h0m0 19h0m0 1h0m0 32h0m0-43h0m0 57h0m0-52h0m0 8h0m0 12h0m0 16h0m0-26h0m0 23h0m1 31h0m0-25h0m0 30h0m0-24h0m0-18h0m0 32h0m0-3h0m0 7h0m0-25h0m0-9h0m0 3h0m0 8h0m1-13h0m0-8h0m0 5h0m0 40h0m0-23h0m0 5h0m0 9h0m0-48h0m0 2h0m0-7h0m0-4h0m0 12h0m0-13h0m1 9h0m0 8h0m0-27h0m0 43h0m0-55h0m0 27h0m0 11h0m0-12h0m0 23h0m0-8h0m0-28h0m0 23h0m0 7h0m1 9h0m0-12h0m0 3h0m0 23h0m0-16h0m0 12h0m0-4h0m0 25h0m0 12h0m0-32h0m0-19h0m0 15h0m0-13h0m1-6h0m0 33h0m0-14h0m0 1h0m0-2h0m0 11h0m0 2h0m0-20h0m0 16h0m0-1h0m0-18h0m1 10h0m0 16h0m0 6h0m0 11h0m0-3h0m0-24h0m0 15h0m0 2h0m0 4h0m0-2h0m0-30h0m0 9h0m0 36h0m1-26h0m0 15h0m0-6h0m0 4h0m0 9h0m0-12h0m0-41h0m0 34h0m0-19h0m0 40h0m0-17h0m0-19h0m1 22h0m0-1h0m0-4h0m0-2h0m0 12h0m0-13h0m0 5h0m0 39h0m0-47h0m0-17h0m0 30h0m0 9h0m1-11h0m0-24h0m0 1h0m0 34h0m0-37h0m0 32h0m0-1h0m0-10h0m0-8h0m0 15h0m0-23h0m0 12h0m0-18h0m0 44h0m1-28h0m0-9h0m0-10h0m0 52h0m0-40h0m0 33h0m0-31h0m0 19h0m0-10h0m0-6h0m0 18h0m1-45h0m0 34h0m0-14h0m0 12h0m0-18h0m0 29h0m0-17h0m0 27h0m0-31h0m0-23h0m0 49h0m0-8h0m0-25h0m0 29h0m1 15h0m0-7h0m0-21h0m0-13h0m0 24h0m0-8h0m0-23h0m0 16h0m0-26h0m0-10h0m0 29h0m0-18h0m0 12h0m1 25h0m0 2h0m0-12h0m0 37h0m0 3h0m0-50h0m0 23h0m0-12h0m0 43h0m0 5h0m0-20h0m0-10h0m1 16h0m0-7h0m0-10h0m0-12h0m0 6h0m0-8h0m0 25h0m0-7h0m0 25h0m0-1h0m0-44h0m0 8h0m0 6h0m1 16h0m0 12h0m0 11h0m0-17h0m0-12h0m0 28h0m0-53h0m0 38h0m0-27h0m0-3h0m0 5h0m1 3h0m0 16h0m0-5h0m0 20h0m0-18h0m0 15h0m0-8h0m0-26h0m0 10h0m0 3h0m0-36h0m1 20h0m0 31h0m0-26h0m0 19h0m0-9h0m0-16h0m0-24h0m0 22h0m0-8h0m0 4h0m0-16h0m1 16h0m0 8h0m0 4h0m0-24h0m0 15h0m0-21h0m0 38h0m0-9h0m0-37h0m0 44h0m1-29h0m0-4h0m0 23h0m0-13h0m0 24h0m0 25h0m0-30h0m0-16h0m0 9h0m0-2h0m0 5h0m0-18h0m1-2h0m0-3h0m0 14h0m0 4h0m0 21h0m0 1h0m0-3h0m0 38h0m0-22h0m0-25h0m0-4h0m0-5h0m0 40h0m1-15h0m0 11h0m0 5h0m0-8h0m0-7h0m0-12h0m0 38h0m0-22h0m0 14h0m0-39h0m0-5h0m0 17h0m1-15h0m0 30h0m0-2h0m0-16h0m0 11h0m0-40h0m0 19h0m0 1h0m0 23h0m0-27h0m0 35h0m0-13h0m1-2h0m0 24h0m0-17h0m0-21h0m0 11h0m0-14h0m0 4h0m0-8h0m0 16h0m0 20h0m0-49h0m0 57h0m0-6h0m1-12h0m0-48h0m0 36h0m0-13h0m0 43h0m0-17h0m0-24h0m0 13h0m0-27h0m0 6h0m0-5h0m1 5h0m0 4h0m0-12h0m0 25h0m0-18h0m0-20h0m0 18h0m0 5h0m0-34h0m0-4h0m0 2h0m0 40h0m1-6h0m0-12h0m0 49h0m0-33h0m0 4h0m0 3h0m0 20h0m0-47h0m0 3h0m0 10h0m1-21h0m0 23h0m0 3h0m0 16h0m0 3h0m0-12h0m0-15h0m0 14h0m0 32h0m0-74h0m0 22h0m0 38h0m1-14h0m0 8h0m0-24h0m0 1h0m0-3h0m0 22h0m0-47h0m0 35h0m0-19h0m0-18h0m0 32h0m0-10h0m0 12h0m1 1h0m0-9h0m0 2h0m0 9h0m0 32h0m0-9h0m0-4h0m0 14h0m0-39h0m0 9h0m0 5h0m0 3h0m1-3h0m0-16h0m0 27h0m0-40h0m0 12h0m0 16h0m0-31h0m0 24h0m0 6h0m0-4h0m0-14h0m1-19h0m0 9h0m0 31h0m0-18h0m0 37h0m0-9h0m0-22h0m0-17h0m0 49h0m0 3h0m0-20h0m0 8h0m1 3h0m0-44h0m0 47h0m0-14h0m0-31h0m0 4h0m0 12h0m0 16h0m0-19h0m0-23h0m0 18h0m0-13h0m0 45h0m1-11h0m0 4h0m0-40h0m0 30h0m0-9h0m0 4h0m0 21h0m0-40h0m0 38h0m0-21h0m1-1h0m0-39h0m0 37h0m0-16h0m0-15h0m0 16h0m0-37h0m0 41h0m0-19h0m0 18h0m0 7h0m1-38h0m0 7h0m0 10h0m0 7h0m0 6h0m0 16h0m0-34h0m0 3h0m0 17h0m0-30h0m0 20h0m1-6h0m0 4h0m0-2h0m0-12h0m0-6h0m0 15h0m0 21h0m0-29h0m0-2h0m0 29h0m0 10h0m0-65h0m0 35h0m1-1h0m0-21h0m0 29h0m0 3h0m0-8h0m0-13h0m0 9h0m0 13h0m0-51h0m0 2h0m0 6h0m1-3h0m0 49h0m0-20h0m0-3h0m0-5h0m0 34h0m0-10h0m0 19h0m0-31h0m0 4h0m0 13h0m0 3h0m1-17h0m0-22h0m0 42h0m0-37h0m0-12h0m0 44h0m0-26h0m0 7h0m0-1h0m0-15h0m0 47h0m0-19h0m0 15h0m0-21h0m1-34h0m0 46h0m0-7h0m0 8h0m0-10h0m0 14h0m0 7h0m0-5h0m0 14h0m0 15h0m0-55h0m0 18h0m1 15h0m0-9h0m0-7h0m0 25h0m0-13h0m0 10h0m0-23h0m0 45h0m0-15h0m0-39h0m0 42h0m0-13h0m0 15h0m1-24h0m0-12h0m0-3h0m0 26h0m0-52h0m0 40h0m0 24h0m0-19h0m0 33h0m0-19h0m0-29h0m1 16h0m0 3h0m0-10h0m0 27h0m0 11h0m0-24h0m0 1h0m0-13h0m0 20h0m0-2h0m0 4h0m0-29h0m0-30h0m0 52h0m1-41h0m0 13h0m0 19h0m0 13h0m0-31h0m0 22h0m0 8h0m0-38h0m0 56h0m0-36h0m0-24h0m0 32h0m0-29h0m1 28h0m0-5h0m0-19h0m0 28h0m0-12h0m0-11h0m0 3h0m0 32h0m0-27h0m0 22h0m1-31h0m0 33h0m0-14h0m0-2h0m0-1h0m0 7h0m0-13h0m0 4h0m0-23h0m0 8h0m0 28h0m0-20h0m1-21h0m0 36h0m0-32h0m0-2h0m0 39h0m0-10h0m0 50h0m0-55h0m0 9h0m0-16h0m0 9h0m0-12h0m0-9h0m1 12h0m0 15h0m0-6h0m0-5h0m0 4h0m0 13h0m0 14h0m0-17h0m0 16h0m0-11h0m0 16h0m0-1h0m0-7h0m1-37h0m0 39h0m0-13h0m0 11h0m0-4h0m0-4h0m0 32h0m0-27h0m0 17h0m0 24h0m0-13h0m1-24h0m0-3h0m0 17h0m0-21h0m0 45h0m0-7h0m0-23h0m0 19h0m0-10h0m0-8h0m0 11h0m0 14h0m1-52h0m0 51h0m0-16h0m0-31h0m0 19h0m0 5h0m0-2h0m0-34h0m0 3h0m0 58h0m0-16h0m0-34h0m0-18h0m0 44h0m1-37h0m0 44h0m0 2h0m0-11h0m0-27h0m0 10h0m0-11h0m0 46h0m0-60h0m0 34h0m0-42h0m1 31h0m0 5h0m0-34h0m0 15h0m0-17h0m0 34h0m0-15h0m0 23h0m0-18h0m0 13h0m0 2h0m1-3h0m0-17h0m0 11h0m0-9h0m0-8h0m0 18h0m0 1h0m0-21h0m0 26h0m0 8h0m1-11h0m0 27h0m0-38h0m0 4h0m0-10h0m0 19h0m0 21h0m0-19h0m0 30h0m0-15h0m0-4h0m1 3h0m0 13h0m0 2h0m0-42h0m0 51h0m0-40h0m0 26h0m0-11h0m0-3h0m0 25h0m1-2h0m0-26h0m0-7h0m0 21h0m0-55h0m0 16h0m0 37h0m0-14h0m0 10h0m0-4h0m0-8h0m1-34h0m0 23h0m0-2h0m0 33h0m0-49h0m0 2h0m0 48h0m0 2h0m0-7h0m0-35h0m0 43h0m0-11h0m0-12h0m1-9h0m0 29h0m0-40h0m0 23h0m0-21h0m0-15h0m0 8h0m0 12h0m0-3h0m0-24h0m1 35h0m0 9h0m0 13h0m0-16h0m0 20h0m0-25h0m0-9h0m0 19h0m0-20h0m0-8h0m0 2h0m0-7h0m1 31h0m0 23h0m0-32h0m0 6h0m0 9h0m0-21h0m0-22h0m0 19h0m0 21h0m0-37h0m0 52h0m1-7h0m0-29h0m0 12h0m0 9h0m0-34h0m0-8h0m0 52h0m0-33h0m0-5h0m0-15h0m1-9h0m0 13h0m0 22h0m0-8h0m0-29h0m0 59h0m0-19h0m0 5h0m0-25h0m0 38h0m0-2h0m0-30h0m1-8h0m0 22h0m0-2h0m0 3h0m0-38h0m0 24h0m0-4h0m0 3h0m0 27h0m0-3h0m0-60h0m0 46h0m0-19h0m1 21h0m0-46h0m0 35h0m0 25h0m0-23h0m0-4h0m0-14h0m0 31h0m0-18h0m0-3h0m0 9h0m0-11h0m0-12h0m1 7h0m0 1h0m0-33h0m0 22h0m0 2h0m0 25h0m0-41h0m0 43h0m0-44h0m0 22h0m0 8h0m0 5h0m1 4h0m0 26h0m0-43h0m0 49h0m0-28h0m0 3h0m0-38h0m0 52h0m0-43h0m0 9h0m0 33h0m0-11h0m0-12h0m1-4h0m0-2h0m0-5h0m0 31h0m0-15h0m0 3h0m0 5h0m0 3h0m0 10h0m0-17h0m0 22h0m1 10h0m0-47h0m0-2h0m0 7h0m0-22h0m0 18h0m0 1h0m0 8h0m0-22h0m0-11h0m0 34h0m0 8h0m0-27h0m0 3h0m1 8h0m0 36h0m0-35h0m0 2h0m0 1h0m0-7h0m0 16h0m0-3h0m0-37h0m0 23h0m0-16h0m1-5h0m0 31h0m0-6h0m0 10h0m0-14h0m0 9h0m0-28h0m0 17h0m0 23h0m0-34h0m0 35h0m0 10h0m0-43h0m0 2h0m1 17h0m0-24h0m0-1h0m0-13h0m0 15h0m0-20h0m0 14h0m0-3h0m0 35h0m0-24h0m0-42h0m0 43h0m1-1h0m0 24h0m0-38h0m0-17h0m0 2h0m0 24h0m0 3h0m0-11h0m0-15h0m0 10h0m0-20h0m1 32h0m0-32h0m0-1h0m0 15h0m0-25h0m0 27h0m0 15h0m0-7h0m0 40h0m0-23h0m0 4h0m1-18h0m0 31h0m0 1h0m0-21h0m0 36h0m0-56h0m0 45h0m0 12h0m0-15h0m0 5h0m0-9h0m0 15h0m1 14h0m0-46h0m0 8h0m0-2h0m0-11h0m0 20h0m0-40h0m0 36h0m0 10h0m0-53h0m0 30h0m1 6h0m0-12h0m0 4h0m0 38h0m0-28h0m0 27h0m0 17h0m0-41h0m0 17h0m0 4h0m0 5h0m1-2h0m0-18h0m0-2h0m0 22h0m0-48h0m0 50h0m0-20h0m0-14h0m0 9h0m0-7h0m0 41h0m0-55h0m1 17h0m0 12h0m0 2h0m0-26h0m0 6h0m0 3h0m0 14h0m0-39h0m0 17h0m0 1h0m0-10h0m1 1h0m0 3h0m0 17h0m0-8h0m0 22h0m0-10h0m0 6h0m0-14h0m0 7h0m0 18h0m0 16h0m0-26h0m1 4h0m0 23h0m0 12h0m0 10h0m0-35h0m0 5h0m0-24h0m0 29h0m0-35h0m0 22h0m0-5h0m1 38h0m0-18h0m0-26h0m0-6h0m0 15h0m0-24h0m0 11h0m0-24h0m0 20h0m0-8h0m0-14h0m1 7h0m0 41h0m0-6h0m0 11h0m0-48h0m0 18h0m0 12h0m0 2h0m0 20h0m0-27h0m0-15h0m0 6h0m0 3h0m1-17h0m0 14h0m0-4h0m0-18h0m0-2h0m0 15h0m0 42h0m0-28h0m0 4h0m0 9h0m0-34h0m1 23h0m0-13h0m0-7h0m0 9h0m0 20h0m0 5h0m0-23h0m0 6h0m0 21h0m0-1h0m0 9h0m0-20h0m0 16h0m1-19h0m0-7h0m0 9h0m0-5h0m0 26h0m0 13h0m0-46h0m0 13h0m0-15h0m0-11h0m1 42h0m0-26h0m0 14h0m0-20h0m0 10h0m0 34h0m0-30h0m0 10h0m0-16h0m0 31h0m0-28h0m0 24h0m1-15h0m0-15h0m0 7h0m0-4h0m0 15h0m0-8h0m0-15h0m0-7h0m0 8h0m0 15h0m1 16h0m0 12h0m0-24h0m0 19h0m0 21h0m0-30h0m0-31h0m0 35h0m0-6h0m0-1h0m0-1h0m0 19h0m0-30h0m1-5h0m0 1h0m0 4h0m0 2h0m0 26h0m0 17h0m0-26h0m0 1h0m0-16h0m0 14h0m0-4h0m0-15h0m1 18h0m0-3h0m0 15h0m0-9h0m0 8h0m0 2h0m0 3h0m0-27h0m0 1h0m0 3h0m0 3h0m1-4h0m0-19h0m0 11h0m0 13h0m0-16h0m0 35h0m0-21h0m0 7h0m0 1h0m0-4h0m0 10h0m1-8h0m0-21h0m0 9h0m0-25h0m0 9h0m0 48h0m0-15h0m0-36h0m0 24h0m0-3h0m0 21h0m1-36h0m0 9h0m0 9h0m0-22h0m0-21h0m0 30h0m0 17h0m0-18h0m0 12h0m0 17h0m0-23h0m0 13h0m1-10h0m0 5h0m0-1h0m0-5h0m0-3h0m0-9h0m0 16h0m0-22h0m0-23h0m0 34h0m0-35h0m1 27h0m0-1h0m0-10h0m0 8h0m0 9h0m0 2h0m0 13h0m0 5h0m0 18h0m0-58h0m0 30h0m1-33h0m0-2h0m0 10h0m0 50h0m0 12h0m0-45h0m0 26h0m0-25h0m0 5h0m0 19h0m0-14h0m0 24h0m0-19h0m1 14h0m0-35h0m0 32h0m0-22h0m0-12h0m0 5h0m0 11h0m0-7h0m0-15h0m0 29h0m0 8h0m0-24h0m1-3h0m0-15h0m0 2h0m0 52h0m0-41h0m0-6h0m0 5h0m0-14h0m0-20h0m0 41h0m0-8h0m0-2h0m0 16h0m1-10h0m0-8h0m0 24h0m0-32h0m0 33h0m0-42h0m0 38h0m0 15h0m0-21h0m0-4h0m0 9h0m0 6h0m1-11h0m0-2h0m0-12h0m0 19h0m0-8h0m0 25h0m0 6h0m0-33h0m0 21h0m0-7h0m0-5h0m0 2h0m1-7h0m0-36h0m0 37h0m0-14h0m0 9h0m0-4h0m0 19h0m0-42h0m0 20h0m0 21h0m0 20h0m0-15h0m0-16h0m1-22h0m0 27h0m0-40h0m0 11h0m0 38h0m0-11h0m0-3h0m0 33h0m0-39h0m0 49h0m0-47h0m0-4h0m1 12h0m0 9h0m0 30h0m0-53h0m0 17h0m0 20h0m0 14h0m0-44h0m0 25h0m0-10h0m0-9h0m0 31h0m0-32h0m1 19h0m0-5h0m0-24h0m0 37h0m0-20h0m0 3h0m0-22h0m0 15h0m0-9h0m0 30h0m0-19h0m0-19h0m1 21h0m0 8h0m0 6h0m0-39h0m0 4h0m0 33h0m0 4h0m0-57h0m0 30h0m0 4h0m0-10h0m0 12h0m0-3h0m1 24h0m0-16h0m0 6h0m0-25h0m0 20h0m0-8h0m0-15h0m0-35h0m0 11h0m0 29h0m0-39h0m1-2h0m0 17h0m0 18h0m0-27h0m0 37h0m0-19h0m0-23h0m1-5h0m0 30h0m0 24h0m0-38h0m0 20h0m0 15h0m0-27h0m0 18h0m0 21h0m0-42h0m0 14h0m0-4h0m1 24h0m0-26h0m0-2h0m0 14h0m0 11h0m0-20h0m0 6h0m0-2h0m0 12h0m1 11h0m0-47h0m0 31h0m0-2h0m0-10h0m0 3h0m0 6h0m0-12h0m0 16h0m0 9h0m1-44h0m0 41h0m0-29h0m0 32h0m0 9h0m0-3h0m0 5h0m0-41h0m0 16h0m1 3h0m0 37h0m0 4h0m0-40h0m0 30h0m0-10h0m0 31h0m0-13h0m0-14h0m0-19h0m0-12h0m0 3h0m1 29h0m0-2h0m0-2h0m0 20h0m0-22h0m0-29h0m0 46h0m0-51h0m0 27h0m0-20h0m1 7h0m0-9h0m0-1h0m0 30h0m0 3h0m0-18h0m0-7h0m0-21h0m0 58h0m0-49h0m0 11h0m0 9h0m0 5h0m0-10h0m1 5h0m0-36h0m0 27h0m0 4h0m0-7h0m0-2h0m0 12h0m0 14h0m0-4h0m0-4h0m1-25h0m0 9h0m0 7h0m0 2h0m0-16h0m0-6h0m0 18h0m0 15h0m0 16h0m0-21h0m0 1h0m1 21h0m0-21h0m0 5h0m0-11h0m0 19h0m0-17h0m0-30h0m0 16h0m0 19h0m0-23h0m0 30h0m0-4h0m0 10h0m1-16h0m0-25h0m0 34h0m0-1h0m0-39h0m0 35h0m0 7h0m0-25h0m0 30h0m0-2h0m0-13h0m1-6h0m0-17h0m0 22h0m0-11h0m0-17h0m0 13h0m0-3h0m0 21h0m0 26h0m0-38h0m0 31h0m0 16h0m1-16h0m0 19h0m0-18h0m0-4h0m0-28h0m0 21h0m0 16h0m0-20h0m0 7h0m0 10h0m0 15h0m0-3h0m1-36h0m0 29h0m0-7h0m0-21h0m0 39h0m0-29h0m0 40h0m0-9h0m0 13h0m0-27h0m0 9h0m0-5h0m0-43h0m1 31h0m0-4h0m0 18h0m0-6h0m0-24h0m0 7h0m0 3h0m0 5h0m0 23h0m0-37h0m0-5h0m0-13h0m1 33h0m0-6h0m0-18h0m0 29h0m0-25h0m0 32h0m0-4h0m0 20h0m0-14h0m0-33h0m0 20h0m0-5h0m1-7h0m0 35h0m0-9h0m0-14h0m0 40h0m0-19h0m0 6h0m0-10h0m0 1h0m0 18h0m0-35h0m0 9h0m0-16h0m0-8h0m1 13h0m0-18h0m0 58h0m0-21h0m0-7h0m0-26h0m0 24h0m0-13h0m0 4h0m0-26h0m0 28h0m0 3h0m1-8h0m0-14h0m0 52h0m0-9h0m0-41h0m0 29h0m0 9h0m0-6h0m0 13h0m0 8h0m1-34h0m0 21h0m0-43h0m0 36h0m0-17h0m0-18h0m0 16h0m0 17h0m0-8h0m0-24h0m0 14h0m0-3h0m1 27h0m0-21h0m0-24h0m0 20h0m0 1h0m0-7h0m0-22h0m0 5h0m0 47h0m0-40h0m1 1h0m0 17h0m0 7h0m0-36h0m0 54h0m0 3h0m0-53h0m0 37h0m0-17h0m0-28h0m0 31h0m1-20h0m0 11h0m0 17h0m0-29h0m0 34h0m0-47h0m0 16h0m0 6h0m0 12h0m0-5h0m0-24h0m0 7h0m0 8h0m1 18h0m0-6h0m0 13h0m0-28h0m0 36h0m0-45h0m0 41h0m0-1h0m0-15h0m0 22h0m0-48h0m1-5h0m0 12h0m0 51h0m0-39h0m0 19h0m0-27h0m0 21h0m0 3h0m0 6h0m0-40h0m0 27h0m0-23h0m1-4h0m0 12h0m0 6h0m0-23h0m0-4h0m0 10h0m0 25h0m0-7h0m0-4h0m1-31h0m0 29h0m0 3h0m0 3h0m0-22h0m0 13h0m0-22h0m0 42h0m0-6h0m0-2h0m0 31h0m1-45h0m0 11h0m0 7h0m0 14h0m0-12h0m0-12h0m0-15h0m0 31h0m0-29h0m0 7h0m1-16h0m0 25h0m0-23h0m0 8h0m0 11h0m0-37h0m0 42h0m0-22h0m0-10h0m0-3h0m0-16h0m0 57h0m1-24h0m0 8h0m0-11h0m0-17h0m0 16h0m0-41h0m0 58h0m0-20h0m0-2h0m0-5h0m0 15h0m0 6h0m1 8h0m0 11h0m0-2h0m0-17h0m0 10h0m0-20h0m0 14h0m0-31h0m0 25h0m0-11h0m0 4h0m1-14h0m0 32h0m0-17h0m0-21h0m0 49h0m0-29h0m0 8h0m0-9h0m0 22h0m0-17h0m0 6h0m1 2h0m0-32h0m0 15h0m0-20h0m0 19h0m0 11h0m0-8h0m0-10h0m0 36h0m0 11h0m0 5h0m0-36h0m0 26h0m0-2h0m1-14h0m0-16h0m0 15h0m0 8h0m0-26h0m0 15h0m0-5h0m0 14h0m0 4h0m0 2h0m0-8h0m1 3h0m0-23h0m0 33h0m0-18h0m0 6h0m0-18h0m0 27h0m0-19h0m0-19h0m0 43h0m0-29h0m0 13h0m0 5h0m1-17h0m0 10h0m0-4h0m0-21h0m0 35h0m0-55h0m0-22h0m0 32h0m0-2h0m0-7h0m0-21h0m0-16h0m0 55h0m1 23h0m0-35h0m0 3h0m0 3h0m0 9h0m0-16h0m0 12h0m0 1h0m0 11h0m0-46h0m1 25h0m0-19h0m0 14h0m0 12h0m0 27h0m0-57h0m0 3h0m0 28h0m0 2h0m0-28h0m0 7h0m0-26h0m0 53h0m0-15h0m1-8h0m0-1h0m0 28h0m0-1h0m0-11h0m0-32h0m0 36h0m0-14h0m0-20h0m0 8h0m0-15h0m0 39h0m0 3h0m1-15h0m0 16h0m0-3h0m0 19h0m0 1h0m0 8h0m0 1h0m0-4h0m0-4h0m0-4h0m0-18h0m0-10h0m0 35h0m0-28h0m1 13h0m0 47h0m0-38h0m0 24h0m0-40h0m0 25h0m0-32h0m0-1h0m0 30h0m0 12h0m0-33h0m0 26h0m0-14h0m1-16h0m0 17h0m0-11h0m0-17h0m0 33h0m0-6h0m0 15h0m0 23h0m0-29h0m0-12h0m0 7h0m0 8h0m1-14h0m0 20h0m0-1h0m0-25h0m0 9h0m0-10h0m0 12h0m0 1h0m0 7h0m0-35h0m0-15h0m0 33h0m1-16h0m0 17h0m0 13h0m0-14h0m0-2h0m0 15h0m0-18h0m0 23h0m0-13h0m0 5h0m1-4h0m0 17h0m0 22h0m0-11h0m0 3h0m0-8h0m0-9h0m0-9h0m0 4h0m0-16h0m0-26h0m0 46h0m0-3h0m1 21h0m0-39h0m0 4h0m0 25h0m0-19h0m0 25h0m0-24h0m0 5h0m0 3h0m0 27h0m0-31h0m0-23h0m1 17h0m0-3h0m0 9h0m0-18h0m0-9h0m0 3h0m0 40h0m0-9h0m0-26h0m0 8h0m0-23h0m1 15h0m0 5h0m0 29h0m0-28h0m0 2h0m0-16h0m0 37h0m0-9h0m0-32h0m0 1h0m0 8h0m0 14h0m0 4h0m1-12h0m0-2h0m0-7h0m0 24h0m0 18h0m0-40h0m0 12h0m0-17h0m0 37h0m0-21h0m0 5h0m0-1h0m1-8h0m0 35h0m0-12h0m0 7h0m0-27h0m0 17h0m0-7h0m0 24h0m0-39h0m1-7h0m0 49h0m0-35h0m0 11h0m0-5h0m0 39h0m0-38h0m0 25h0m0-10h0m0-3h0m0-1h0m0 7h0m1 24h0m0-10h0m0 1h0m0 5h0m0-7h0m0-13h0m0-16h0m0 45h0m0-18h0m0-14h0m0 7h0m0-15h0m0 34h0m1-47h0m0 18h0m0 26h0m0-23h0m0-28h0m0 24h0m0-38h0m0 7h0m0 24h0m0 17h0m0-20h0m0-12h0m0-4h0m1 18h0m0 20h0m0-36h0m0 49h0m0-23h0m0-8h0m0-6h0m0 15h0m0-14h0m0-14h0m0 20h0m0 6h0m0-23h0m0 6h0m1 20h0m0-1h0m0-39h0m0 29h0m0-8h0m0 15h0m0 10h0m0-19h0m0 4h0m0 1h0m0 23h0m1-6h0m0 23h0m0-59h0m0 20h0m0 14h0m0-27h0m0 16h0m0-7h0m0-2h0m0 12h0m0 48h0m0-57h0m1 37h0m0-46h0m0 20h0m0 16h0m0-5h0m0-1h0m0-17h0m0-4h0m0 26h0m0 10h0m0-51h0m0 14h0m0 30h0m1-48h0m0 1h0m0 4h0m0-2h0m0 26h0m0 23h0m0-25h0m0-37h0m0 36h0m0-9h0m0 26h0m0 12h0m0-16h0m1-46h0m0 29h0m0 28h0m0-42h0m0 3h0m0 34h0m0-15h0m0 19h0m0-14h0m0 21h0m0-25h0m0-10h0m1 3h0m0-6h0m0 2h0m0-14h0m0 24h0m0 11h0m0-15h0m0 44h0m0-34h0m0 16h0m0-12h0m1-26h0m0 14h0m0 11h0m0-1h0m0-7h0m0-30h0m0 46h0m0-5h0m0-24h0m0 47h0m0 1h0m1-44h0m0 20h0m0-29h0m0 22h0m0-20h0m0-13h0m0 37h0m0-1h0m0-35h0m0 16h0m0-19h0m0 32h0m1-20h0m0 19h0m0-27h0m0-7h0m0 18h0m0 42h0m0-27h0m0-8h0m0 5h0m0-19h0m0 31h0m0-21h0m0 16h0m1-6h0m0 2h0m0-14h0m0 33h0m0-16h0m0-6h0m0-12h0m0-11h0m0 10h0m0-14h0m0-1h0m0 25h0m0-35h0m1 8h0m0 31h0m0 7h0m0 5h0m0-13h0m0-3h0m0 15h0m0-27h0m0 6h0m0 4h0m0 11h0m1-30h0m0 20h0m0 5h0m0-22h0m0-12h0m0 46h0m0-50h0m0 46h0m0-28h0m0 8h0m0 15h0m0 3h0m0 5h0m1-17h0m0-25h0m0 15h0m0-38h0m0 42h0m0 3h0m0-13h0m0-30h0m0 28h0m0-17h0m0 8h0m1 16h0m0 5h0m0-3h0m0 5h0m0-18h0m0 39h0m0-6h0m0 1h0m0-13h0m0 1h0m0-13h0m0 22h0m0-24h0m1 6h0m0-30h0m0 37h0m0 1h0m0 5h0m0-8h0m0-2h0m0-21h0m0 15h0m0-8h0m0-11h0m0 32h0m1-11h0m0-15h0m0-24h0m0 33h0m0-22h0m0 21h0m0 8h0m0-34h0m0 42h0m0-32h0m0-26h0m0 44h0m0-40h0m1 10h0m0 8h0m0-19h0m0 21h0m0 35h0m0-33h0m0 6h0m0 17h0m0-31h0m0 18h0m0 8h0m0-48h0m0 11h0m1-3h0m0-5h0m0 51h0m0-47h0m0 40h0m0 8h0m0-26h0m0 7h0m0-30h0m0 27h0m0-20h0m0 17h0m0 9h0m1-3h0m0-12h0m0 1h0m0-12h0m0 27h0m0-11h0m0-19h0m0 25h0m0 12h0m0-4h0m0-10h0m0-3h0m1 6h0m0 13h0m0 2h0m0 4h0m0-8h0m0 23h0m0-3h0m0-41h0m0 14h0m0-8h0m0 30h0m1 12h0m0-28h0m0-7h0m0-5h0m0 14h0m0-29h0m0 2h0m0 10h0m0 20h0m0-8h0m0-8h0m1 17h0m0-8h0m0-4h0m0 20h0m0-41h0m0 15h0m0 1h0m0-14h0m0 12h0m0-4h0m0-24h0m0 40h0m0 13h0m1-33h0m0 16h0m0-19h0m0 30h0m0-10h0m0 20h0m0-16h0m0-26h0m0 24h0m0 5h0m1 11h0m0 8h0m0-11h0m0 17h0m0-9h0m0-23h0m0-17h0m0 5h0m0 13h0m0-17h0m0 10h0m0-18h0m0 23h0m1 6h0m0 19h0m0-43h0m0 9h0m0-11h0m0 30h0m0 10h0m0-34h0m0 27h0m0 37h0m0-49h0m0 37h0m0-46h0m0 6h0m1 51h0m0-35h0m0 5h0m0-14h0m0 26h0m0 3h0m0-30h0m0 52h0m0-39h0m0-4h0m0-18h0m1 7h0m0 16h0m0-1h0m0 4h0m0-8h0m0-22h0m0 19h0m0 12h0m0 17h0m0 9h0m0-7h0m0 2h0m1-34h0m0 5h0m0 6h0m0-17h0m0 7h0m0-10h0m0 31h0m0-19h0m0-13h0m0-6h0m0-1h0m0-2h0m1 17h0m0-36h0m0 42h0m0 26h0m0-7h0m0-4h0m0-30h0m0 29h0m0-31h0m0 45h0m0-25h0m0-14h0m1-4h0m0 13h0m0 26h0m0-42h0m0-3h0m0 35h0m0-19h0m0 18h0m0-22h0m0 28h0m0-25h0m1 13h0m0 12h0m0-33h0m0 36h0m0 6h0m0-18h0m0 4h0m0 9h0m0-26h0m0 16h0m0-8h0m0 36h0m1-19h0m0-29h0m0 5h0m0 11h0m0-13h0m0 7h0m0-2h0m0 17h0m0-26h0m0-2h0m0 34h0m1-22h0m0 25h0m0-4h0m0-1h0m0 12h0m0 7h0m0-32h0m0-9h0m0 5h0m0 31h0m0-39h0m1 29h0m0 2h0m0-25h0m0 29h0m0 23h0m0-44h0m0 10h0m0 8h0m0-7h0m0-4h0m0-8h0m0 31h0m0-45h0m0 16h0m1 7h0m0-16h0m0 10h0m0-22h0m0 67h0m0-48h0m0-4h0m0 42h0m0-40h0m0 14h0m0 7h0m0-3h0m1-3h0m0-5h0m0-33h0m0 22h0m0-6h0m0-15h0m0 56h0m0-14h0m0-3h0m0-36h0m0 15h0m0-6h0m1-14h0m0 68h0m0-25h0m0 8h0m0-20h0m0 23h0m0-49h0m0 32h0m0 8h0m0 11h0m0 7h0m0-22h0m1 7h0m0-20h0m0 5h0m0-12h0m0-2h0m0 36h0m0 6h0m0-21h0m0 32h0m0-13h0m0 17h0m1-3h0m0-27h0m0 21h0m0-52h0m0-1h0m0 15h0m0 18h0m0-12h0m0 5h0m0-24h0m0 53h0m0-28h0m0-3h0m1-12h0m0 14h0m0-13h0m0 35h0m0-34h0m0 15h0m0 9h0m0-15h0m0 29h0m0 16h0m0-29h0m0 7h0m1 6h0m0-19h0m0-7h0m0 29h0m0 8h0m0-39h0m0-8h0m0-12h0m0 23h0m0-42h0m0 36h0m0-7h0m0-6h0m1-5h0m0-13h0m0 10h0m0 13h0m0-2h0m0 20h0m0-5h0m0-18h0m0-2h0m0 15h0m0 2h0m0-9h0m1-17h0m0-12h0m0 37h0m0-14h0m0 18h0m0-59h0m0 67h0m0-27h0m0 25h0m0-28h0m0-6h0m0-11h0m1 0h0m0 19h0m0 14h0m0-3h0m0 5h0m0-31h0m0 8h0m0 4h0m0 35h0m0-28h0m0 38h0m0-11h0m1-15h0m0-5h0m0 10h0m0-9h0m0-8h0m0-7h0m0-10h0m0-1h0m0 49h0m0-12h0m0-10h0m0-8h0m1-5h0m0 25h0m0 5h0m0-19h0m0-3h0m0-16h0m0 40h0m0-26h0m0 30h0m0-65h0m0 15h0m1 18h0m0-20h0m0 39h0m0-34h0m0 8h0m0 5h0m0-26h0m0-1h0m0 12h0m0-5h0m0-15h0m1 23h0m0-16h0m0 10h0m0 20h0m0-17h0m0 16h0m0-48h0m0 24h0m0 1h0m0-9h0m0-10h0m0 6h0m1 28h0m0-14h0m0 15h0m0-2h0m0-1h0m0-16h0m0 34h0m0-25h0m0-3h0m0 29h0m0-52h0m0 32h0m0-22h0m1 6h0m0-7h0m0 19h0m0 7h0m0-21h0m0-20h0m0 27h0m0 33h0m0-8h0m0-38h0m0 30h0m0 5h0m1-41h0m0 50h0m0 5h0m0-34h0m0-17h0m0 8h0m0 32h0m0-35h0m0 30h0m0 6h0m0-25h0m0 13h0m1-7h0m0 32h0m0-61h0m0 7h0m0-16h0m0 45h0m0-19h0m0 3h0m0 13h0m0-9h0m0 8h0m0-17h0m1 5h0m0 13h0m0-11h0m0-12h0m0-2h0m0 6h0m0-1h0m0 34h0m0 8h0m0 13h0m0-53h0m0-8h0m0 20h0m0-9h0m1 22h0m0-10h0m0-30h0m0 10h0m0 31h0m0-38h0m0 5h0m0-11h0m0-10h0m0 34h0m0-7h0m0-2h0m0 23h0m1-13h0m0 29h0m0-35h0m0 3h0m0-5h0m0 18h0m0 6h0m0-35h0m0 9h0m0 16h0m0-24h0m1-5h0m0 11h0m0-6h0m0-26h0m0 33h0m0 6h0m0-36h0m0 49h0m0-8h0m0-1h0m0-32h0m0 63h0m0-46h0m1 39h0m0 3h0m0-21h0m0-1h0m0-1h0m0-2h0m0 34h0m0-49h0m0 52h0m0-25h0m0 3h0m1 26h0m0-22h0m0-15h0m0-1h0m0-3h0m0 23h0m0 7h0m0 4h0m0 11h0m0-8h0m0-39h0m0 46h0m1-43h0m0 5h0m0 22h0m0-7h0m0 26h0m0-30h0m0-4h0m0-5h0m0 3h0m0-16h0m1 23h0m0-23h0m0-8h0m0-16h0m0 26h0m0 6h0m0 10h0m0-5h0m0 37h0m0-14h0m0-25h0m0-22h0m0 42h0m1-33h0m0 13h0m0 13h0m0-32h0m0 7h0m0 1h0m0 26h0m0 3h0m0-24h0m0-2h0m1 7h0m0 24h0m0-7h0m0-8h0m0 5h0m0-23h0m0 16h0m0 28h0m0-10h0m0-13h0m0 6h0m1-30h0m0 37h0m0-25h0m0 2h0m0-3h0m0-10h0m0 42h0m0-2h0m0-19h0m0-7h0m0 15h0m0 2h0m0-35h0m1 13h0m0 3h0m0-4h0m0 28h0m0-7h0m0 35h0m0-20h0m0-11h0m0-7h0m0 22h0m0 7h0m0-10h0m1 19h0m0-18h0m0-20h0m0-17h0m0 23h0m0 19h0m0-23h0m0-15h0m0 5h0m0 39h0m0-20h0m0-32h0m1 17h0m0 22h0m0 23h0m0-43h0m0 5h0m0-20h0m0 3h0m0-7h0m0 10h0m0 4h0m0 19h0m1 4h0m0 1h0m0-24h0m0 28h0m0 10h0m0-34h0m0 43h0m0-29h0m0 7h0m0-30h0m0 45h0m1-25h0m0-2h0m0-5h0m0-3h0m0-25h0m0 37h0m0-7h0m0 34h0m0-4h0m0-8h0m0-3h0m0 17h0m1-47h0m0 20h0m0 16h0m0-4h0m0-15h0m0 11h0m0 11h0m0 1h0m0-50h0m0 54h0m0-28h0m0 13h0m1-53h0m0 33h0m0 33h0m0-28h0m0 23h0m0-26h0m0 10h0m0-22h0m0 20h0m0-13h0m0 29h0m0 17h0m1-10h0m0-9h0m0 12h0m0-19h0m0-20h0m0 42h0m0 14h0m0-13h0m0 15h0m0-13h0m0-11h0m0 16h0m0-34h0m0 3h0m1 24h0m0-17h0m0 20h0m0-31h0m0 22h0m0-12h0m0-21h0m0 8h0m0 19h0m0 8h0m0-9h0m0-25h0m1 24h0m0-9h0m0-7h0m0 3h0m0 30h0m0-18h0m0-7h0m0-11h0m0-7h0m0 6h0m0 16h0m0-2h0m1-4h0m0-26h0m0-14h0m0 46h0m0 10h0m0-15h0m0-12h0m0 2h0m0-11h0m0 2h0m0 13h0m0 14h0m0-12h0m1-21h0m0 43h0m0-54h0m0 22h0m0-19h0m0 34h0m0 7h0m0-26h0m0 8h0m0-9h0m1 24h0m0-36h0m0 45h0m0-21h0m0-7h0m0 15h0m0-10h0m0 24h0m0-16h0m0-15h0m0 24h0m0-37h0m1 42h0m0-19h0m0 13h0m0-11h0m0-6h0m0 21h0m0-11h0m0-21h0m0 54h0m0 2h0m0-60h0m0 40h0m0-51h0m1 14h0m0 42h0m0-45h0m0 18h0m0-6h0m0-14h0m0 27h0m0 2h0m0 32h0m0-27h0m0-9h0m0-1h0m1-2h0m0 21h0m0-11h0m0 12h0m0-37h0m0-5h0m0 12h0m0 35h0m0-22h0m0-21h0m0 13h0m0-2h0m0 29h0m1-19h0m0-4h0m0 23h0m0-6h0m0-12h0m0-36h0m0 13h0m0 15h0m0-6h0m0 20h0m0-24h0m0-12h0m0 27h0m1-24h0m0-10h0m0 33h0m0 17h0m0-28h0m0 6h0m0-35h0m0 42h0m0-27h0m0 17h0m1-11h0m0 9h0m0 36h0m0-58h0m0 29h0m0-25h0m0 13h0m0-15h0m0-14h0m0 21h0m0 1h0m1-26h0m0 36h0m0 7h0m0-37h0m0 43h0m0-31h0m0 29h0m0-15h0m0-12h0m0 4h0m0 22h0m0-20h0m0-13h0m0 16h0m1-39h0m0 11h0m0 3h0m0 26h0m0-7h0m0 27h0m0-2h0m0 3h0m0-10h0m0 19h0m0-3h0m1-27h0m0 7h0m0-11h0m0-8h0m0 17h0m0-6h0m0-30h0m0 23h0m0-8h0m0 1h0m0 6h0m0 48h0m0-38h0m1 17h0m0 6h0m0-23h0m0-28h0m0 3h0m0 2h0m0 2h0m0 25h0m0 5h0m0-18h0m0 3h0m0 13h0m1-2h0m0 5h0m0-4h0m0-49h0m0 25h0m0 30h0m0-31h0m0-8h0m0 5h0m0 29h0m0 18h0m0-60h0m1 55h0m0-6h0m0-28h0m0-14h0m0-4h0m0 31h0m0-10h0m0 14h0m0-10h0m0-36h0m0 13h0m0 22h0m1-31h0m0 29h0m0-7h0m0 9h0m0-3h0m0-21h0m0 31h0m0 7h0m0-1h0m0-5h0m0 9h0m0-12h0m1-19h0m0 7h0m0 1h0m0-4h0m0 16h0m0-32h0m0 13h0m0 13h0m0 8h0m1-9h0m0 4h0m0 6h0m0-65h0m0 58h0m0-33h0m0-15h0m0 11h0m0 2h0m0 18h0m0-4h0m0 1h0m1 6h0m0-22h0m0-12h0m0-5h0m0-13h0m0-4h0m0 29h0m0 21h0m0 10h0m0-27h0m0-7h0m0 4h0m0 15h0m1-20h0m0 24h0m0 16h0m0-4h0m0-24h0m0 26h0m0-41h0m0 30h0m0-21h0m0 7h0m1 21h0m0-20h0m0 3h0m0-5h0m0 38h0m0-12h0m0-12h0m0 17h0m0-16h0m0-6h0m0 35h0m0-20h0m0-25h0m1 21h0m0 25h0m0-21h0m0-6h0m0 21h0m0-4h0m0-25h0m0 38h0m0 7h0m0-11h0m0 6h0m0 3h0m1-21h0m0 36h0m0-18h0m0-24h0m0-1h0m0-2h0m0-5h0m0 20h0m0-30h0m0 31h0m0-37h0m0 55h0m1-41h0m0 38h0m0 21h0m0-11h0m0 13h0m0-27h0m0 6h0m0 15h0m0-9h0m0-15h0m0 18h0m0-26h0m0 27h0m0-42h0m1 31h0m0 21h0m0-36h0m0 10h0m0 24h0m0-58h0m0 41h0m0-21h0m0-25h0m0 41h0m0-4h0m0-14h0m0 34h0m1-48h0m0 36h0m0-35h0m0-3h0m0 40h0m0 5h0m0-40h0m0 44h0m0-27h0m0-30h0m0 24h0m0-23h0m1 9h0m0-4h0m0 29h0m0-41h0m0 21h0m0 17h0m0-16h0m0 14h0m0 29h0m0-21h0m0-15h0m0 19h0m1 7h0m0-18h0m0-12h0m0 7h0m0-9h0m0 18h0m0-6h0m0 4h0m0-8h0m0-18h0m1 33h0m0-19h0m0-18h0m0 29h0m0 21h0m0-36h0m0 27h0m0-5h0m0 6h0m0 19h0m0-37h0m0 3h0m1 9h0m0 24h0m0-13h0m0-14h0m0-11h0m0 39h0m0-42h0m0 22h0m0 14h0m0-40h0m0-1h0m0 32h0m0-33h0m1 9h0m0-9h0m0-15h0m0 10h0m0 13h0m0 22h0m0-7h0m0-1h0m0 4h0m0-16h0m0-28h0m0 17h0m0 37h0m1-50h0m0 32h0m0 11h0m0 25h0m0-34h0m0-27h0m0 33h0m0-13h0m0-1h0m0-10h0m0 29h0m0-27h0m1-6h0m0 27h0m0-10h0m0-1h0m0 10h0m0 9h0m0-38h0m0 9h0m0 17h0m0 9h0m0 20h0m0-7h0m0 4h0m1-35h0m0 33h0m0-53h0m0 32h0m0 8h0m0 2h0m0-14h0m0 21h0m0-34h0m0-11h0m1 48h0m0-10h0m0-12h0m0-28h0m0 60h0m0-36h0m0-10h0m0 38h0m0-18h0m0-1h0m0-18h0m0 7h0m0 4h0m1-12h0m0-11h0m0 42h0m0-22h0m0 5h0m0 2h0m0-22h0m0 30h0m0 12h0m0 3h0m0-49h0m0 5h0m1 21h0m0 30h0m0-36h0m0 2h0m0-33h0m0 35h0m0-17h0m0 26h0m0 16h0m0 6h0m0-54h0m1 55h0m0-38h0m0 15h0m0-19h0m0 25h0m0-18h0m0 30h0m0-38h0m0 35h0m0 11h0m0-4h0m0-43h0m0 29h0m1 10h0m0-31h0m0 4h0m0 2h0m0 10h0m0-33h0m0 49h0m0-9h0m0 3h0m0-44h0m0 30h0m0-20h0m1 1h0m0-28h0m0 39h0m0-28h0m0 21h0m0 2h0m0-18h0m0-3h0m0 39h0m0-14h0m0 12h0m0 15h0m0-61h0m0 27h0m1-4h0m0 18h0m0-6h0m0-6h0m0-14h0m0 16h0m0 9h0m0 18h0m0-2h0m0-10h0m0 31h0m0-38h0m1-34h0m0 51h0m0-12h0m0-34h0m0 40h0m0-61h0m0 28h0m0-11h0m0 13h0m0 41h0m0-37h0m0 24h0m0-11h0m1 1h0m0-10h0m0 17h0m0-14h0m0 12h0m0 12h0m0-14h0m0 20h0m0-9h0m0 30h0m1-23h0m0-25h0m0 2h0m0 25h0m0-24h0m0-15h0m0 21h0m0-13h0m0-21h0m0 64h0m0-27h0m0-43h0m1 41h0m0 11h0m0 11h0m0-46h0m0 5h0m0-4h0m0 15h0m0 27h0m0 8h0m0-37h0m0-29h0m0 17h0m0-3h0m0-22h0m1 45h0m0-9h0m0-14h0m0 24h0m0-7h0m0-19h0m0 22h0m0-8h0m0-10h0m0 7h0m0-3h0m1 3h0m0 10h0m0-7h0m0-20h0m0 9h0m0 7h0m0-17h0m0 15h0m0 28h0m0-63h0m0 19h0m1-2h0m0 5h0m0 11h0m0-2h0m0-18h0m0 16h0m0-10h0m0 27h0m0-11h0m0 4h0m0-27h0m1 14h0m0 3h0m0 17h0m0 2h0m0-43h0m0 13h0m0 18h0m0 19h0m0-23h0m0 21h0m0-32h0m0 3h0m1 19h0m0-28h0m0 21h0m0-19h0m0 20h0m0-19h0m0 26h0m0-38h0m0-6h0m0 19h0m0-11h0m0 14h0m0 4h0m1-6h0m0 8h0m0-7h0m0 27h0m0 6h0m0-40h0m0 43h0m0-10h0m0-29h0m0-26h0m0 40h0m1 4h0m0-2h0m0 23h0m0-42h0m0 34h0m0-2h0m0-20h0m0 12h0m0-23h0m0-2h0m0 4h0m0 6h0m0-14h0m1 14h0m0 6h0m0 4h0m0-46h0m0 39h0m0-47h0m0 30h0m0 1h0m0-7h0m0-22h0m0 23h0m1 33h0m0 7h0m0-6h0m0-8h0m0-14h0m0 6h0m0 9h0m0-34h0m0 42h0m0-15h0m0 9h0m0-23h0m0 2h0m1 8h0m0-19h0m0 8h0m0 10h0m0-27h0m0 24h0m0-2h0m0-24h0m0 21h0m0-7h0m0-31h0m1 47h0m0-13h0m0 10h0m0 21h0m0-32h0m0 35h0m0-53h0m0-7h0m0-4h0m0 54h0m0-35h0m0-16h0m0 30h0m1-25h0m0 42h0m0-13h0m0-8h0m0 12h0m0-1h0m0-14h0m0 28h0m0 12h0m0 10h0m0-9h0m1-45h0m0 37h0m0-1h0m0-9h0m0 25h0m0-6h0m0-21h0m0 19h0m0-28h0m0 16h0m0-25h0m0 4h0m1 16h0m0 6h0m0-11h0m0 16h0m0 12h0m0-41h0m0 7h0m0 3h0m0 10h0m0 20h0m0-9h0m1-8h0m0-6h0m0 29h0m0-28h0m0-19h0m0 31h0m0 28h0m0-49h0m0 7h0m0 13h0m0-19h0m0 50h0m1-25h0m0 14h0m0-26h0m0 34h0m0-61h0m0-14h0m0 1h0m0 12h0m0 26h0m0-6h0m0-12h0m0 5h0m0 18h0m0-7h0m1 7h0m0-15h0m0 1h0m0-21h0m0 9h0m0 21h0m0-31h0m0 50h0m0-3h0m0-31h0m1 10h0m0 3h0m0 24h0m0-15h0m0-25h0m0 17h0m0 15h0m0 28h0m0-33h0m0 2h0m0 13h0m0-23h0m1 3h0m0-9h0m0-3h0" stroke="#000" stroke-width="3.9" stroke-linecap="round" fill="none"/>
<path d="M179.4 435.4h0m-6 17.2h0m41-0.2h0m38 0h0m39-2h0m127 3h0m51-4h0m106 3h0m180 0h0m6 0h0m28-8h0m211 10h0m221-9h0m71 2h0m-1047.1 158.7h0m-11.7 46.2h0m211.6-24.2h0m24.9-8h0m33 13.2h0m34.1-22h0m123.2-17.9h0m142.9 13.1h0m31.1-8.2h0m88.8-2.9h0m133.1 1.6h0m0 6.2h0m-4.1 30.2h0m105-38h0m6.2 2.9h0m-3.3 45h0" stroke="#ffa500" stroke-width="3.8" stroke-linecap="round" fill="none"/>
<path d="M231.8 660.2h6.8l-3.4 5.6zM362.7 660.2h6.8l-3.4 5.6zM373.9 660.2h6.8l-3.4 5.6zM377.8 660.2h6.8l-3.4 5.6zM386.9 660.2h6.8l-3.4 5.6zM447 660.2h6.8l-3.4 5.6zM480 660.2h6.8l-3.4 5.6zM505.9 660.2h6.8l-3.4 5.6zM635.2 660.2h6.8l-3.4 5.6zM639.8 660.2h6.8l-3.4 5.6zM764.8 660.2h6.8l-3.4 5.6zM791.7 660.2h6.8l-3.4 5.6zM886.8 660.2h6.8l-3.4 5.6zM946.7 660.2h6.8l-3.4 5.6zM1024.4 660.2h6.8l-3.4 5.6zM1034.8 660.2h6.8l-3.4 5.6zM1169.9 660.2h6.8l-3.4 5.6zM1196.8 660.2h6.8l-3.4 5.6z" fill="#ffa500"/>
<rect x="105.5" y="499.2" width="1255.5" height="48.5" fill="#f00" fill-opacity="0.12"/>
<rect x="162.2" y="499.2" width="1142.2" height="48.5" fill="#ffa500" fill-opacity="0.1"/>
<path d="M162.2 524H1304.5" stroke="#ffa500" stroke-width="2.08"/>
<path d="M105.5 523H1360" stroke="#f00" stroke-width="2" stroke-linecap="square"/>
<path d="M162.2 665.9V380.5M1302.8 665.9V380.5" stroke="#800080" stroke-width="2.08" stroke-dasharray="2.08 3.44" fill="none"/>
</g>
<path d="M105.5 380.5H1485.5M105.5 666.5H1485.5M105.5 380.5V666.5M1485.5 380.5V666.5" stroke="#000" stroke-width="1.11" fill="none" stroke-linecap="square"/>
<path d="M162.5 666.5v4.86M346.5 666.5v4.86M530.5 666.5v4.86M715.5 666.5v4.86M899.5 666.5v4.86M1083.5 666.5v4.86M1267.5 666.5v4.86M1452.5 666.5v4.86" stroke="#000" stroke-width="1.11" fill="none"/>
<text x="157.83" y="686.6" font-size="14.44" textLength="8.84" lengthAdjust="spacingAndGlyphs">0</text>
<text x="328.83" y="686.6" font-size="14.44" textLength="35.35" lengthAdjust="spacingAndGlyphs">2500</text>
<text x="513.08" y="686.6" font-size="14.44" textLength="35.35" lengthAdjust="spacingAndGlyphs">5000</text>
<text x="697.33" y="686.6" font-size="14.44" textLength="35.35" lengthAdjust="spacingAndGlyphs">7500</text>
<text x="877.16" y="686.6" font-size="14.44" textLength="44.18" lengthAdjust="spacingAndGlyphs">10000</text>
<text x="1061.41" y="686.6" font-size="14.44" textLength="44.18" lengthAdjust="spacingAndGlyphs">12500</text>
<text x="1245.66" y="686.6" font-size="14.44" textLength="44.18" lengthAdjust="spacingAndGlyphs">15000</text>
<text x="1429.91" y="686.6" font-size="14.44" textLength="44.18" lengthAdjust="spacingAndGlyphs">17500</text>
<path d="M100.6 398.5h4.86M100.6 433.5h4.86M100.6 468.5h4.86M100.6 503.5h4.86M100.6 538.5h4.86M100.6 574.5h4.86M100.6 609.5h4.86M100.6 644.5h4.86" stroke="#000" stroke-width="1.11" fill="none"/>
<text x="64.86" y="403.4" font-size="14.44" textLength="30.92" lengthAdjust="spacingAndGlyphs">9.28</text>
<text x="64.86" y="438.5" font-size="14.44" textLength="30.92" lengthAdjust="spacingAndGlyphs">9.26</text>
<text x="64.86" y="473.7" font-size="14.44" textLength="30.92" lengthAdjust="spacingAndGlyphs">9.24</text>
<text x="64.86" y="508.8" font-size="14.44" textLength="30.92" lengthAdjust="spacingAndGlyphs">9.22</text>
<text x="64.86" y="544" font-size="14.44" textLength="30.92" lengthAdjust="spacingAndGlyphs">9.20</text>
<text x="64.86" y="579.1" font-size="14.44" textLength="30.92" lengthAdjust="spacingAndGlyphs">9.18</text>
<text x="64.86" y="614.3" font-size="14.44" textLength="30.92" lengthAdjust="spacingAndGlyphs">9.16</text>
<text x="64.86" y="649.4" font-size="14.44" textLength="30.92" lengthAdjust="spacingAndGlyphs">9.14</text>
<text x="707.55" y="372.2" font-size="17.33" textLength="88.30" lengthAdjust="spacingAndGlyphs">Magnitude</text><text x="801.15" y="372.2" font-size="17.33" textLength="82.30" lengthAdjust="spacingAndGlyphs">Estimates</text>
<text x="714.83" y="657" font-size="14.44" textLength="35.35" lengthAdjust="spacingAndGlyphs">9514</text>
<rect x="1365.5" y="387.3" width="113" height="48" rx="2.8" fill="#fff" fill-opacity="0.8" stroke="#ccc" stroke-opacity="0.85" stroke-width="1.11"/>
<path d="M1370.5 399.3H1398.3" stroke="#ffa500" stroke-width="2.6" stroke-linecap="square"/>
<path d="M1370.5 421.8H1398.3" stroke="#f00" stroke-width="2.6" stroke-linecap="square"/>
<text x="1410.2" y="404" font-size="14.44" text-anchor="start" textLength="29.40" lengthAdjust="spacingAndGlyphs">mag</text>
<text x="1440" y="406" font-size="11.27" text-anchor="start" textLength="31.00" lengthAdjust="spacingAndGlyphs" font-style="italic">OBSID</text>
<text x="1409.2" y="426.5" font-size="14.44" text-anchor="start" textLength="29.40" lengthAdjust="spacingAndGlyphs">mag</text>
<rect x="1348.5" y="613.3" width="130" height="46" rx="2.8" fill="#fff" fill-opacity="0.8" stroke="#ccc" stroke-opacity="0.85" stroke-width="1.11"/>
<path d="M1367.5 626.5h0" stroke="#ffa500" stroke-width="4" stroke-linecap="round"/>
<path d="M1367.5 647.5h0" stroke="#000" stroke-width="4" stroke-linecap="round"/>
<text x="1392.50" y="629.8" font-size="14.44" textLength="80.06" lengthAdjust="spacingAndGlyphs">Highlighted</text>
<text x="1392.50" y="650.5" font-size="14.44" textLength="20.04" lengthAdjust="spacingAndGlyphs">OK</text>
<g clip-path="url(#c3)">
<path d="M105.5 758.5H1485.5M105.5 791.5H1485.5M105.5 823.5H1485.5M105.5 856.5H1485.5M105.5 889.5H1485.5M105.5 921.5H1485.5" stroke="#b0b0b0" stroke-width="1.11" stroke-dasharray="1.11 1.83" fill="none"/>
<g fill="#fff" stroke="#000" stroke-width="1.2"><circle cx="235.3" cy="856.5" r="1.3"/><circle cx="235.3" cy="889.2" r="1.3"/><circle cx="366.3" cy="856.5" r="1.3"/><circle cx="366.3" cy="889.2" r="1.3"/><circle cx="377.3" cy="856.5" r="1.3"/><circle cx="377.3" cy="889.2" r="1.3"/><circle cx="381.3" cy="856.5" r="1.3"/><circle cx="381.3" cy="889.2" r="1.3"/><circle cx="390.3" cy="856.5" r="1.3"/><circle cx="390.3" cy="889.2" r="1.3"/><circle cx="450.3" cy="856.5" r="1.3"/><circle cx="450.3" cy="889.2" r="1.3"/><circle cx="509.3" cy="856.5" r="1.3"/><circle cx="509.3" cy="889.2" r="1.3"/><circle cx="638.3" cy="856.5" r="1.3"/><circle cx="638.3" cy="889.2" r="1.3"/><circle cx="643" cy="856.5" r="1.3"/><circle cx="643" cy="889.2" r="1.3"/><circle cx="768.2" cy="856.5" r="1.3"/><circle cx="768.2" cy="889.2" r="1.3"/><circle cx="795.5" cy="856.5" r="1.3"/><circle cx="795.5" cy="889.2" r="1.3"/><circle cx="890.2" cy="856.5" r="1.3"/><circle cx="890.2" cy="889.2" r="1.3"/><circle cx="950.1" cy="856.5" r="1.3"/><circle cx="950.1" cy="889.2" r="1.3"/><circle cx="1028.7" cy="856.5" r="1.3"/><circle cx="1028.7" cy="889.2" r="1.3"/><circle cx="1038.2" cy="856.5" r="1.3"/><circle cx="1038.2" cy="889.2" r="1.3"/><circle cx="1173.3" cy="856.5" r="1.3"/><circle cx="1173.3" cy="889.2" r="1.3"/></g>
<path d="M162.2 953.9V725.5M1302.8 953.9V725.5" stroke="#800080" stroke-width="2.08" stroke-dasharray="2.08 3.44" fill="none"/>
</g>
<path d="M105.5 725.5H1485.5M105.5 725.5V954.5M1485.5 725.5V954.5" stroke="#000" stroke-width="1.11" fill="none" stroke-linecap="square"/>
<path d="M100.6 758.5h4.86M100.6 791.5h4.86M100.6 823.5h4.86M100.6 856.5h4.86M100.6 889.5h4.86M100.6 921.5h4.86" stroke="#000" stroke-width="1.11" fill="none"/>
<text x="16.30" y="763.4" font-size="14.44" textLength="22.75" lengthAdjust="spacingAndGlyphs">not</text><text x="43.46" y="763.4" font-size="14.44" textLength="52.32" lengthAdjust="spacingAndGlyphs">Kalman</text>
<text x="33.27" y="796.2" font-size="14.44" textLength="22.75" lengthAdjust="spacingAndGlyphs">not</text><text x="60.43" y="796.2" font-size="14.44" textLength="35.35" lengthAdjust="spacingAndGlyphs">track</text>
<text x="26.46" y="828.8" font-size="14.44" textLength="27.19" lengthAdjust="spacingAndGlyphs">Sat.</text><text x="58.07" y="828.8" font-size="14.44" textLength="37.71" lengthAdjust="spacingAndGlyphs">pixel.</text>
<text x="38.10" y="861.5" font-size="14.44" textLength="25.81" lengthAdjust="spacingAndGlyphs">Ion.</text><text x="68.33" y="861.5" font-size="14.44" textLength="27.45" lengthAdjust="spacingAndGlyphs">rad.</text>
<text x="51.95" y="894.2" font-size="14.44" textLength="14.53" lengthAdjust="spacingAndGlyphs">dr</text><text x="70.89" y="894.2" font-size="14.44" textLength="11.64" lengthAdjust="spacingAndGlyphs">&gt;</text><text x="86.94" y="894.2" font-size="14.44" textLength="8.84" lengthAdjust="spacingAndGlyphs">5</text>
<text x="14.89" y="926.4" font-size="14.44" textLength="29.28" lengthAdjust="spacingAndGlyphs">OBS</text><text x="48.58" y="926.4" font-size="14.44" textLength="22.75" lengthAdjust="spacingAndGlyphs">not</text><text x="75.74" y="926.4" font-size="14.44" textLength="20.04" lengthAdjust="spacingAndGlyphs">OK</text>
<g clip-path="url(#c4)">
<path d="M105.5 1009.5H1485.5M105.5 983.5H1485.5M105.5 957.5H1485.5" stroke="#b0b0b0" stroke-width="1.11" stroke-dasharray="1.11 1.83" fill="none"/>
<path d="M162.2 1007.6h0m0.3-0.2h0m0.1 0h0m0.1 0.4h0m0.3-1.4h0m0.5 0.9h0m0.1 0.4h0m1 0.4h0m0.2-1.2h0m0.7 0.3h0m0.1 0.6h0m0.6-1.3h0m0.4 1h0m0.1-0.5h0m0.8 0.9h0m0.1-1h0m1 0.8h0m0.2-0.8h0m0.2-0.5h0m0.5 1.3h0m0-0.8h0m1.1 0.5h0m0.1 0.4h0m0.8 0.6h0m0.1-1.5h0m1 0.1h0m0 0.6h0m0.3-1.1h0m0.6 0.8h0m0.2-0.8h0m0.1 1.4h0m0.8 0.5h0m0.4-1.1h0m0.5-0.6h0m0.1 1.1h0m0.8-1.3h0m0.2 1.1h0m0.1-0.4h0m0.5-0.7h0m0.3 1.2h0m0.2-0.9h0m0.9-0.4h0m0.1 0.5h0m0.1 1.3h0m0.7-1.4h0m0.3 0.7h0m0.8 0.4h0m0.1-0.5h0m0.5-0.9h0m0.3 1h0m0.1-0.1h0m1 0.1h0m0.1-0.5h0m0.8 0.2h0m0 1.3h0m0.5-2.1h0m0.6 1.8h0m0.1-1h0m0.8-0.4h0m0.1 0.8h0m1-0.8h0m0.3 0.9h0m0.5-1.3h0m0.1 1.3h0m0-0.9h0m1.1 1.5h0m0.4-1.6h0m0.5 1h0m0.2-0.8h0m0.6-0.4h0m0.3 0.5h0m0.2-0.6h0m0 1.6h0m0.7-1.6h0m0.1 0.6h0m0.1 0.7h0m0.9-0.4h0m0.1 0.4h0m0.8 0h0m0.1-0.3h0m0.6-1h0m0.4 1.4h0m0.1-0.5h0m0.8 0.7h0m0.1-0.6h0m1-0.3h0m0.1 0.7h0m0.3-1.4h0m0.5 0.5h0m0.1 0.9h0m0.7-1.4h0m0.3 1h0m0.1 0.3h0m0.3-1.3h0m0.5 0.8h0m0 0.4h0m0.1-1.1h0m1 0.1h0m0.1 1.8h0m0.2-1.9h0m0.6 1.9h0m0.1-1.4h0m1 0h0m0.3 0.6h0m0.5-1.1h0m0.1 1.2h0m0.1-1.1h0m1 1.1h0m0-0.6h0m0.9 1.3h0m0.2-1.1h0m0.9-0.2h0m0.1 0.5h0m0.7-1.1h0m0.1 1.4h0m0.1-0.8h0m1 1h0m0.2-0.9h0m0.7-0.8h0m0.1 0.5h0m0.3 0.9h0m0.7-0.7h0m0.1 0.9h0m0.8-0.2h0m0.4-0.5h0m0.6-0.8h0m0.1 0.7h0m0.1 0.3h0m0.6-1.1h0m0.2 1.2h0m0.4-0.2h0m0.7-0.3h0m0.3 1h0m0.6-1.1h0m0 0.5h0m0.9-1.1h0m0.2 1.5h0m0.1-0.5h0m0.8 0.4h0m0.1-0.5h0m0.1-0.8h0m0.9 0.9h0m0 0.2h0m0.1-1.2h0m0.8 1.3h0m0.3-0.3h0m0.8 0.2h0m0.1-1.1h0m0.1 0.8h0m0.7 0.1h0m0.2 0.4h0m0.2-1.4h0m0.7 1.8h0m0.1-0.8h0m0.6-1h0m0.2 1.5h0m0.1-1h0m1 1.2h0m0.1-1h0m0.8-0.2h0m0.1 0.7h0m1-1.2h0m0.1 1.5h0m0.2-0.6h0m0.6-0.8h0m0 0.3h0m0.1 1.1h0m1-0.5h0m0.1 0.3h0m0.2-1.2h0m0.6 0.6h0m0 0.7h0m0.6-1.3h0m0.5 0.8h0m0 0.8h0m0.5-1.7h0m0.4 1.9h0m0.1-1h0m0.4-0.9h0m0.6 0.3h0m0.1 1.3h0m0.8 0h0m0.5-0.6h0m0.5-1h0m0.1 0.3h0m0.2 0.9h0m0.7-0.2h0m0.5 0.1h0m0.2-1.1h0m0.4 2.1h0m0.2-1.5h0m0.6-0.6h0m0.1 1.6h0m0.1-0.7h0m0.3-0.9h0m0.7 1h0m0.2 0.4h0m0.7-0.7h0m0.1 1.1h0m0.6-1.8h0m0.4 1.1h0m0.2-0.9h0m0.7 1.1h0m0.1-0.4h0m1 0.1h0m0.2-0.9h0m0.6 1.3h0m0.1-0.6h0m0-0.8h0m0.2 1.2h0m0.9 0.1h0m0-1.3h0m0.1 1h0m0.8 0h0m0 0.7h0m0.8-1.7h0m0.3 1.3h0m0.2-1.2h0m0.1 0.9h0m0.6 0h0m0.1 0.6h0m1 0.5h0m0-1.7h0m0.5-0.3h0m0.4 1.7h0m0.2-1.4h0m0.3-0.4h0m0.6 0.5h0m0.2 1h0m0.7 0.3h0m0.1-1.3h0m0.8-0.4h0m0.2 1.4h0m0.1-0.8h0m0.3-0.6h0m0.5 1.7h0m0.1-1.3h0m1-0.2h0m0.1 1.3h0m0.3-1.5h0m0.5 0.4h0m0.2 0.6h0m0.9 0.3h0m0.6-0.4h0m0.1-0.9h0m0.2 1h0m0-0.4h0m0.9-0.6h0m0.2 1.1h0m0.3-0.6h0m0.6 0.6h0m0.1-0.3h0m1 0.1h0m0.1 0.6h0m0.8-0.5h0m0-0.6h0m1.1-0.3h0m0.1 1.3h0m0.8-0.7h0m0.1 0.8h0m1-1.6h0m0.1 1.5h0m0.1-0.8h0m0.7 0.8h0m0.1-0.7h0m1-0.1h0m0.1 0.7h0m0.8-0.4h0m0.1-1h0m0.2 1.7h0m0.8-0.3h0m0.2-1.2h0m0.7 1h0m0.2-0.4h0m0.9 0.9h0m0.1-1.3h0m0.8 1.4h0m0-1.4h0m1.1 0.8h0m0.1-0.3h0m0.8 0.6h0m0-1h0m1.1 0.3h0m0.1 0.4h0m0.1-1.1h0m0.7 1.4h0m0-0.9h0m0.8-0.5h0m0.3 0.7h0m0.5 0.9h0m0.4-1.2h0m0.1 0.6h0m0.6-1.1h0m0.4 0.7h0m0.2 0.8h0m0.7-0.5h0m0.1 0.8h0m0.2-1.8h0m0.8 2.1h0m0.3-1.6h0m0.6 0.2h0m0.1 0.5h0m1-0.2h0m0.1 0.5h0m0.8-0.7h0m0.1 0.9h0m1-1.7h0m0.1 0.4h0m0.1 1.7h0m0.7-1.5h0m0.1 0.5h0m1-0.8h0m0.1 1.4h0m0.8-1.1h0m0 1.2h0m0.8-1.7h0m0.3 0.4h0m0.1 0.6h0m0.7-1.1h0m0.1 1.9h0m0.1-1.4h0m0.2-0.4h0m0.8 1.4h0m0.1-1.3h0m0.8 1.3h0m0.2-0.5h0m0.9-0.1h0m0 0.4h0m0.9 0.6h0m0.1-1.1h0m1-0.2h0m0.1-0.6h0m0.1 2h0m0.7-1.4h0m0.3 0.9h0m0.8 0.2h0m0.1-0.8h0m0.8 0.2h0m0.2-0.8h0m0.9 0.4h0m0.1 0.5h0m0.8 0.2h0m0.1-0.8h0m1 0.4h0m0.1 0.1h0m0.8 0.1h0m0.1-0.6h0m1 0.1h0m0.1-0.6h0m0.1 1h0m0.7 0.1h0m0-0.8h0m1.1 0.9h0m0.1-0.3h0m0.8 0.3h0m0.1-0.7h0m1 0.7h0m0.4-0.9h0m0.5 1.7h0m0.2-1.3h0m0.3-0.8h0m0.6 1.6h0m0.2-0.8h0m0.7 0.4h0m0.1-0.5h0m0.7-0.7h0m0.3 1h0m0.1 0.3h0m0.7-1.3h0m0.1 0.5h0m0.4 0.8h0m0.7 0.7h0m0.2-1.9h0m0.1 0.8h0m0.6 0.4h0m0.1-0.6h0m1-0.3h0m0.3 0.7h0m0.6 1h0m0-1.8h0m1.1 1.2h0m0.3-1.2h0m0.6 0.8h0m0.2-1.1h0m0.1 0.3h0m0.8 0.9h0m0.2-0.3h0m0.7 0.2h0m0-0.2h0m1.1-0.8h0m0 0.6h0m0.1 0.4h0m0.8 0h0m0.1-0.2h0m0.9-0.9h0m0.1 1.5h0m0.1-1.1h0m0.8 0.9h0m0.1-0.5h0m1-0.4h0m0.1 1.2h0m0.1-1.6h0m0.7 0.8h0m0.1-0.8h0m0.5 1.2h0m0.5-1.2h0m0.1 1.1h0m0.1-0.8h0m0.7 0.5h0m0.1 0.8h0m1-0.6h0m0.1 0.1h0m0.8 0.4h0m0.3-0.7h0m0.8 0.7h0m0.1-0.7h0m0.3-0.7h0m0.5 1.9h0m0-1.1h0m0.4-0.9h0m0.7 1.8h0m0-1.1h0m0.9 0.4h0m0.1-0.6h0m1 0.3h0m0-0.7h0m0.1 1.4h0m0.8 0.2h0m0.1-0.8h0m1 0.6h0m0.2-1.1h0m0.7 0.8h0m0.3-0.3h0m0.6-0.8h0m0.2 1.3h0m0.5-0.8h0m0.4 1.4h0m0.2-1h0m0.9 0.1h0m0.1-0.5h0m0.6-0.6h0m0.2 0.9h0m0.1 0.3h0m1-0.2h0m0.1 0.5h0m0.6-1.5h0m0.2 1.5h0m0.1-1.5h0m0 0.6h0m1 1h0m0.1-1.2h0m0.8-0.1h0m0.3 0.9h0m0.8-0.3h0m0.3 0.4h0m0.6 0.2h0m0.2-1h0m0.9 0.8h0m0.3-0.7h0m0.5-0.5h0m0.1 0.4h0m0.1 1.4h0m1-0.3h0m0.1-0.6h0m0.8 0.2h0m0.1-0.6h0m0.7-0.6h0m0.3 1.7h0m0.2-1.4h0m0.3-0.3h0m0.4 1.6h0m0.4-0.8h0m0.3-0.8h0m0.4 1.5h0m0.5-0.6h0m0.4-0.1h0m0.1 0.6h0m0.2-1.4h0m0.8 0.6h0m0.1 0.5h0m0.8-0.8h0m0.1 0.8h0m1-0.4h0m0.1 0.7h0m0-1.3h0m0.8 1.6h0m0.2-1.3h0m0.6-0.3h0m0.3 0.5h0m0.3 1.2h0m0.6-1h0m0-0.8h0m0.1 1.1h0m1-0.3h0m0 0.7h0m0.3-1.5h0m0.6 0.2h0m0.1 0.9h0m1-0.2h0m0.1 0.9h0m0.8-0.4h0m0.1-1.2h0m1-0.2h0m0.1 0.9h0m0.3 0.4h0m0.5-0.6h0m0.2 0.5h0m0.4-1.2h0m0.5 0.7h0m0.1 1h0m0.8 0h0m0.1-1.2h0m1 0.4h0m0.1 0.2h0m0.8 0.6h0m0.2-0.8h0m0.2-0.9h0m0.7 1.4h0m0.1-0.5h0m0.8 0.1h0m0.1 0.4h0m1-1h0m0.1-0.3h0m0 1.4h0m0.8-0.2h0m0-0.6h0m1.1 0.9h0m0.3-1h0m0.6 0.5h0m0-0.2h0m0.8-0.8h0m0.3 0.2h0m0.2 1.2h0m0.1-1.5h0m0.6 1.4h0m0.2-0.6h0m0.3-0.7h0m0.6 1.3h0m0.1-0.6h0m0.8-0.3h0m0.2 0.7h0m0.7-1.2h0m0.2 0.9h0m0.2 0.4h0m0.7-0.3h0m0.1 0.1h0m0.9-1h0m0.1 1.5h0m0.1-1.1h0m0.8-0.2h0m0.1-0.3h0m0 1.6h0m1-0.6h0m0.1 0.2h0m0.8 0.2h0m0.1-1.2h0m1 0.4h0m0.1 1h0m0.8-0.4h0m0.1-0.3h0m1 0h0m0.3 1.1h0m0.1-2h0m0.5 0.8h0m0.1 0.3h0m0.2-1h0m0.8 0.9h0m0.1 0.8h0m0.7-1.7h0m0.1 1.3h0m0.2-0.8h0m0.5-0.6h0m0.4 1.8h0m0.1-1.3h0m0.1-0.4h0m0.7 0.8h0m0.2 0.3h0m0.9 0.3h0m0.2-0.6h0m0.2-0.9h0m0.5 0h0m0.1 0.9h0m0 0.7h0m1-0.6h0m0.1 0.4h0m0.8-0.8h0m0.1 0.5h0m1 1h0m0.1-1.6h0m0.8 1.6h0m0.1-1.1h0m1 0.1h0m0.1-0.5h0m0.8 0h0m0.2 0.7h0m0.9 0.2h0m0-0.5h0m0.9-0.2h0m0 0.9h0m1.1-0.9h0m0-0.7h0m0.3 1.4h0m0.6-1h0m0.2 1.3h0m0.1-1.8h0m0.8 0.4h0m0 1h0m0.9 0.3h0m0.2-1.5h0m0.9 1.7h0m0.1-1.1h0m0.8-0.3h0m0.1 0.7h0m1 0.3h0m0.3-0.5h0m0.3-1h0m0.3 0.3h0m0.4 1.2h0m0.7 0.2h0m0.2-0.9h0m0.2-0.8h0m0.5 0h0m0.1 1.2h0m0.1-0.2h0m0.9 0.3h0m0.1-1.1h0m0.8 0.5h0m0 0.5h0m1.1-0.2h0m0.3 0.3h0m0.1-1.3h0m0.5 0.3h0m0 1.3h0m1.1-0.7h0m0.1 0.9h0m0.3-1.8h0m0.5 1h0m0.1 0.3h0m1-0.8h0m0.1 1h0m0.1-1.5h0m0.7 0.9h0m0.1 1.2h0m1-0.9h0m0.3-0.3h0m0.6 0.5h0m0.1-0.6h0m1 0.4h0m0.1-0.2h0m0.2-1h0m0.6 0.7h0m0.2 0.4h0m0.2-1.1h0m0.7 2h0m0.1-1.1h0m0.8 0.8h0m0.1-1.3h0m1 1.3h0m0.1-1.1h0m0.8 1.3h0m0.1-1.4h0m1 1.4h0m0.2-0.9h0m0.7-0.5h0m0 0.8h0m1.1-0.1h0m0-0.6h0m0.9 1h0m0.1-0.9h0m1 0.2h0m0.1 0.2h0m0.7-1h0m0.1 1h0m0.2-0.7h0m0.9 0.5h0m0 0.3h0m0.2-1.2h0m0.7 1.3h0m0.1-0.3h0m0.5-1h0m0.5 1.8h0m0.1-1.2h0m0.3-0.5h0m0.5 0.4h0m0.1 0.6h0m1-1.1h0m0.1 0.7h0m0.3 0.9h0m0.5-0.4h0m0.1-0.7h0m0.9-0.5h0m0.1 1h0m0.1 0.2h0m0.6-1.1h0m0.2 1.1h0m0.1-1h0m0.9-0.2h0m0.1 0.7h0m0.3 0.4h0m0.6 0.3h0m0-0.7h0m0.9-0.6h0m0.2 1.4h0m0-1h0m0.9 1h0m0.2-0.9h0m0.6-0.6h0m0.3 1.3h0m0-1.3h0m0.1 0.9h0m0.8-0.4h0m0.1 0.8h0m0.7-1.3h0m0.3 0.8h0m0 0.8h0m0.2-1.6h0m0.7 0.5h0m0.2 0.7h0m0.9 0h0m0.1-0.4h0m0.8 0.4h0m0.1-1h0m1 1.2h0m0.2-0.4h0m0.5-1h0m0.2 0h0m0.1 1h0m0 0.7h0m1-0.8h0m0.2 0.6h0m0.7-0.2h0m0.2-0.4h0m0.9 0h0m0.1 0.6h0m0-1.5h0m0.8 0.8h0m0.1 0.5h0m0.8-1.3h0m0.2 0.3h0m0.1 0.8h0m0.8 0.4h0m0.2-0.5h0m0.7-1h0m0.2 0.9h0m0.1 0.2h0m0.8-0.1h0m0.2 0.5h0m0.9 0h0m0.1-0.7h0m0.8 0h0m0.3 0.4h0m0.8-1h0m0.1 1.2h0m0.8-1.2h0m0.1 1.5h0m1-0.6h0m0.2-1.1h0m0 0.7h0m0.7-0.1h0m0.1 0.8h0m0.5-1.3h0m0.5 0.4h0m0.1 0.6h0m0.8-0.4h0m0.2 0.7h0m0.9-0.3h0m0.1-0.2h0m0.8-0.2h0m0 1.2h0m0.9-1.8h0m0.2 1h0m0.1-1.1h0m0 0.7h0m0.8 0.5h0m0.1-0.6h0m1 0.1h0m0.1 0.7h0m0.8-1h0m0 0.7h0m1.1-0.5h0m0 0.8h0m0.9 0.7h0m0.3-1.4h0m0.4-0.7h0m0.4 1.4h0m0.1-0.4h0m0.8 0.3h0m0.2-0.6h0m0.1-0.6h0m0.8 0.8h0m0.2 0.8h0m0.7-0.3h0m0.2-1.3h0m0.1 0.9h0m0.8-0.3h0m0.1 0.6h0m0.6-1.3h0m0.2 1.4h0m0.4-0.5h0m0.7 0.3h0m0.1-0.5h0m0-0.7h0m0.8 0.3h0m0.1 0.9h0m1-0.6h0m0.1 0.9h0m0.8-1.1h0m0 1h0m0.6-1.4h0m0.5 1.6h0m0-0.8h0m0.9 0.9h0m0.1-0.7h0m1 0.3h0m0.1-0.5h0m0.8 0h0m0.1 1.1h0m0.5-1.9h0m0.5 1.7h0m0-1.3h0m0.1-0.4h0m0.8 0.8h0m0.1 0.3h0m0.4-1.1h0m0.6 0.5h0m0.1 0.6h0m0.2-1.1h0m0.6 2.1h0m0.1-1.4h0m1 1.1h0m0.2-1.6h0m0.2-0.1h0m0.5 1h0m0.1-0.4h0m1-0.1h0m0.1 0.7h0m0.8-0.3h0m0.2 1.1h0m0.9-0.7h0m0.1-1.1h0m0.3-0.3h0m0.5 0.6h0m0 1.1h0m1.1-0.9h0m0.2 0.6h0m0.7-1h0m0 0.9h0m1.1-0.1h0m0-0.4h0m0.8-0.8h0m0.1 0.9h0m0.5 0.6h0m0.6-1.4h0m0 1.2h0m0.4-1.1h0m0.5 0.3h0m0.1 0.9h0m0.3-1.3h0m0.7 0.4h0m0.2 0.7h0m0.6-1.1h0m0.1 0.4h0m0.1 0.6h0m0.8-1.1h0m0.2 1.3h0m0.1-0.5h0m0.3-0.8h0m0.5 0.8h0m0.1 0.5h0m1-0.8h0m0.1 0.7h0m0.8-0.3h0m0.6 0.5h0m0.5-0.3h0m0.1-0.3h0m0.8 0.6h0m0.1-0.9h0m0.5-0.5h0m0.5 0.4h0m0.1 1h0m0.6-1.4h0m0.2 0.4h0m0.1 1.3h0m1-0.9h0m0 0.7h0m0.3-1.5h0m0.6 1.3h0m0.2-0.5h0m0.9-0.1h0m0 0.4h0m0.9-0.2h0m0.1 0.2h0m1 0h0m0.2-0.3h0m0.7-0.1h0m0.2 0.6h0m0.9-0.5h0m0.2 0.8h0m0.7-0.5h0m0.1-0.6h0m0.1-0.5h0m0.9 1.3h0m0.1-0.6h0m0.2-0.7h0m0.6 0.8h0m0.6 0.4h0m0.5 0h0m0.1-0.2h0m0-1h0m0.8 1.7h0m0.1-1.4h0m1 0.3h0m0.2 1.4h0m0.3-1.9h0m0.4 0.5h0m0 1.1h0m1.1-0.5h0m0.1-0.5h0m0.3-0.7h0m0.5 0.7h0m0.1 0.5h0m0.2-1.2h0m0.8 0h0m0 1.4h0m0.1-0.5h0m0.8-0.4h0m0.2 1.1h0m0.3-1.5h0m0.6 1.7h0m0-1.2h0m0.5-0.5h0m0.4 0.4h0m0.1 0.6h0m0.1-1h0m0.9 0.5h0m0.1 0.7h0m0.8-0.6h0m0.1 0.6h0m0.1-1.2h0m0.9 1.2h0m0.1-1h0m0.8 0.4h0m0.1 0.9h0m1-1.4h0m0.2 1h0m0.3-1.2h0m0.4 0.1h0m0.1 1.9h0m0-1h0m1 0.1h0m0.1-0.2h0m0.5-0.9h0m0.3 0.6h0m0.3 0.5h0m0.8 0.4h0m0.3-0.6h0m0.6 0.6h0m0.2-0.7h0m0.9-0.1h0m0.1-0.6h0m0.3 1.3h0m0.5-1.4h0m0.1 0.9h0m0.4 0.4h0m0.6-0.6h0m0.1 0.6h0m0.1-1.2h0m0.7 0.8h0m0.1 0.5h0m0.8-1.3h0m0.2 1.2h0m0.1-0.5h0m0.4-0.8h0m0.4 0.3h0m0.2 1h0m0.7-1.2h0m0.2 1.2h0m0.3-0.4h0m0.6 0.7h0m0.4-0.9h0m0.7 1h0m0.2-1.4h0m0.5-0.3h0m0.2 1.2h0m0.1-0.4h0m1 0.7h0m0.3-1h0m0.6 1.5h0m0-1.3h0m1.1 0.2h0m0.1 0.3h0m0.8-1.2h0m0 0.9h0m0.2 0.7h0m0.9-1.4h0m0 1.3h0m0.1-1.5h0m0.8 1.6h0m0.4-1.3h0m0.7 1.5h0m0-1.5h0m0.9-0.1h0m0.2 1.2h0m0.4-1.4h0m0.5 1.4h0m0.2-0.9h0m0.3-0.4h0m0.4 1.6h0m0.2-1.1h0m0.2-0.6h0m0.7 0.8h0m0.1 0.5h0m0.8-1h0m0.1 1.2h0m0.5-1.5h0m0.5 1.5h0m0.1-1h0m0.2-0.5h0m0.6 1.2h0m0.2-0.7h0m0.9 1.3h0m0.2-1h0m0.7 1.3h0m0-2h0m0.1 0.7h0m1 0.4h0m0.1-0.3h0m0.2-0.8h0m0.6 0.3h0m0 0.9h0m1.1 0h0m0-0.9h0m0.9 0.7h0m0.1-0.2h0m1 0.9h0m0.1-0.8h0m0.8 0.5h0m0.2-0.9h0m0.9 1.5h0m0-1.4h0m0.8-0.6h0m0.1 0.4h0m0.1 0.6h0m1 0h0m0.1-0.6h0m0.8 1.3h0m0.2-1.3h0m0.9 1.4h0m0.1-1.4h0m0.8 0.6h0m0.1-0.2h0m0.7-0.9h0m0.3 1.5h0m0.4-0.6h0m0.5-0.5h0m0.1 1.7h0m1-1.7h0m0.3 0.8h0m0.5-1.2h0m0.1 0.8h0m0 1.1h0m0.2-1.9h0m0.9 1.7h0m0.2-0.8h0m0.7 0.4h0m0-1.2h0m0.1 0.9h0m1-0.4h0m0 1.1h0m0.9-1.2h0m0.1 1.2h0m1-0.7h0m0.1 0.9h0m0.5-1.9h0m0.3 0.8h0m0.1 0.7h0m1-0.3h0m0.5-1.2h0m0 1h0m0.4-0.9h0m0.1 1.2h0m0.3-0.3h0m0.7 0.3h0m0.1-0.3h0m0.3-0.9h0m0.5 0.8h0m0.1 0.4h0m0.6-1.2h0m0.4 0.3h0m0.1 1.4h0m0.8-0.5h0m0.1-1h0m1 0.8h0m0.1-0.5h0m0.6-0.5h0m0.2 2h0m0.1-1.6h0m1 1.6h0m0.1-1.3h0m0.8 0.3h0m0.1-0.6h0m0.3-0.4h0m0.7 1.8h0m0.1-1.1h0m0.8-0.3h0m0-0.4h0m0.1 1.2h0m1-1.2h0m0 0.9h0m0.4 1.1h0m0.5-0.8h0m0.1-1.3h0m0.1 0.8h0m0.9 0.3h0m0.4-0.9h0m0.5 0.8h0m0.2 1.1h0m0.8-2h0m0.1 0.9h0m0.2 0.2h0m0.7-1.2h0m0.1 1h0m0.1 0.8h0m0.9-0.5h0m0.1-0.8h0m0.7-0.5h0m0.1 1.4h0m0.1-0.6h0m1 0.8h0m0.4-1h0m0.5-0.1h0m0-0.5h0m0.2 1.3h0m0.9-1.2h0m0.1 1.8h0m0.2-1.4h0m0.6 0.1h0m0 0.6h0m0.3-1.2h0m0.8 1h0m0.1 0.2h0m0.8-0.1h0m0-0.3h0m1.1 0.7h0m0-0.6h0m0.8-0.9h0m0.1 1.6h0m0.1-1.2h0m0.1-0.3h0m0.9 0.8h0m0.1 1h0m0.8-1.3h0m0.1 0.9h0m0.2-1.5h0m0.8 1.4h0m0.1-1h0m0.8 0.2h0m0.1 0.7h0m0.6-1.3h0m0.4 1.4h0m0.1-0.8h0m0.8 0.3h0m0.5 0.8h0m0.6-0.6h0m0.1-1.1h0m0 0.9h0m0.8-0.4h0m0.1 1.6h0m0.5-2h0m0.5 0.7h0m0.2 0.5h0m0.7-0.7h0m0.2 0.6h0m0.4-1.2h0m0.5 0.9h0m0.1-0.9h0m0.5 1.3h0m0.3 0h0m0-0.7h0m1.1 0.7h0m0-0.3h0m0.9-0.1h0m0.2 0.3h0m0.8-1.1h0m0.1 0.7h0m0.2 1h0m0.7-1.1h0m0.1-0.7h0m0.1 1.2h0m0.9 0.4h0m0.2-1.2h0m0.7 0.8h0m0.1-0.7h0m1 0.3h0m0.2 0.7h0m0.7-0.5h0m0.1 0.6h0m1-0.3h0m0.4-0.4h0m0.1-0.8h0m0.4 0.3h0m0.1 1.1h0m1-1.5h0m0.1 1.3h0m0-0.3h0m0.8-0.4h0m0.3 0.5h0m0.8 0h0m0-0.1h0m0.9-0.7h0m0 0.8h0m1.1-0.2h0m0.1 0.8h0m0.8-0.5h0m0-1h0m0.1-0.1h0m1 2h0m0.2-1.4h0m0.7-0.3h0m0.6 1.4h0m0.5-0.8h0m0.2 0.3h0m0.7-0.1h0m0.3-1.1h0m0.1 0.7h0m0.7-0.3h0m0.2 0.7h0m0.7 0.2h0m0.2-0.6h0m0.9 0.2h0m0.1 0.7h0m0.8-1.1h0m0.2 1.1h0m0.9-0.4h0m0.1-1.3h0m0.3 0.5h0m0.5 0.4h0m0.2 0.2h0m0.9-0.7h0m0.1 1.2h0m0.4-1.5h0m0.4-0.1h0m0 0.6h0m0.1 0.5h0m1 0h0m0.1-0.2h0m0.8-0.4h0m0 1.2h0m0.5-1.6h0m0.6 0.5h0m0 1.3h0m0.5-1.9h0m0.4 0.3h0m0.1 1.1h0m1-0.6h0m0.2 0.3h0m0.5-1.1h0m0.2 0.5h0m0.1 1.2h0m0.9-1.6h0m0.1 0.9h0m0.2-0.9h0m0 1.3h0m0.7-0.3h0m0.1-0.1h0m1 0.8h0m0.4-1.1h0m0.5 0.9h0m0.1-1.5h0m0 0.7h0m1-0.2h0m0.1 0.7h0m0.1-1.3h0m0.7 0.2h0m0.1 1.3h0m1-0.4h0m0.1-1h0m0.2 0.4h0m0.6 1.6h0m0-1.3h0m1.1-0.6h0m0.2 0.9h0m0.7-0.8h0m0 1.3h0m1.1 0h0m0.4-1.2h0m0.5 0.7h0m0.1-0.2h0m1-0.4h0m0.1 1h0m0.7-1.5h0m0.1 0.6h0m0.1 0.5h0m1-0.5h0m0.1 1.3h0m0.8-0.4h0m0.1-0.5h0m1 1.1h0m0.3-1.1h0m0.6 0.1h0m0.1-0.4h0m0.5-0.7h0m0.5 1.5h0m0.1-0.7h0m0.6-0.7h0m0.2 1.3h0m0.2-0.7h0m0.1-0.6h0m0.8 0.7h0m0.1 0.8h0m0.3-1.5h0m0.5 1.5h0m0-0.8h0m1.1 0.8h0m0-1.1h0m0.9-0.2h0m0.4 0.9h0m0.7-1.1h0m0 0.7h0m0.1 0.5h0m0.8 0.7h0m0.2-1.2h0m0.5-0.8h0m0.4 1.6h0m0.1-0.6h0m0.8 0.3h0m0.1-0.4h0m1 0.2h0m0.2-0.2h0m0.7 0.6h0m0.2-0.8h0m0.8-0.7h0m0.1 1.2h0m0.2-0.2h0m0.7-0.2h0m0.1 0.3h0m1 0.8h0m0.1-1.2h0m0.3-0.7h0m0.5 0.6h0m0.1 1.5h0m1-1h0m0.1-0.4h0m0-0.6h0m0.8-0.1h0m0 1.4h0m0.1-0.8h0m1 0.3h0m0.2-0.9h0m0.3 1.1h0m0.4 0.5h0m0.4-0.7h0m0.7-0.9h0m0 0.8h0m0.3 1.3h0m0.6-1h0m0-0.7h0m0.4-0.4h0m0.7 0h0m0 0.2h0m0.1 1.3h0m0.8-0.6h0m0.3 0.4h0m0.2-1.3h0m0.6 2h0m0.1-1.1h0m0.8 0.3h0m0.2-0.8h0m0.8-0.4h0m0.1 0.4h0m0.1 1.1h0m0.8-1.4h0m0.1 0.4h0m0 0.9h0m1-0.5h0m0.1-0.9h0m0 1.6h0m0.8 0.5h0m0.1-1.3h0m0-0.7h0m1 1.1h0m0.1-1h0m0.8 1.7h0m0.2-1.2h0m0.3-0.7h0m0.6 1.1h0m0.1-0.4h0m0-0.7h0m0.8 1h0m0.1-1h0m0.1 1.4h0m0.9-0.2h0m0-0.5h0m0.9 1h0m0.2-1.5h0m0.3-0.1h0m0.6 1.1h0m0-0.2h0m0.5-1h0m0.4 1.5h0m0.2-1.3h0m0.5-0.1h0m0.4 0.7h0m0.2 1.1h0m0.7-0.9h0m0.1 0.1h0m1-0.1h0m0.1-1h0m0.1 1.2h0m0.7-0.7h0m0.1 0.9h0m1-0.5h0m0.1 0.7h0m0.8-0.2h0m0.1-0.6h0m1 0.3h0m0.1-0.1h0m0.8-0.9h0m0.1 1h0m0-0.1h0m1 0.3h0m0.1-0.5h0m0-0.8h0m0.8 1.1h0m0-0.1h0m1.1-0.1h0m0 0.7h0m0.9-0.3h0m0.1-0.5h0m1 0.1h0m0.1 0.2h0m0.6-1h0m0.2 1.2h0m0.1-0.6h0m1 1.4h0m0-1.1h0m0.9-0.3h0m0.1 0.6h0m0.4-1.2h0m0.6 0.9h0m0.4 0.2h0m0.5-0.2h0m0.1 0.1h0m0.3-1.1h0m0.7 1.5h0m0.2-0.9h0m0.7-0.2h0m0.1 1h0m0.7-1.4h0m0.3 1.2h0m0.1-0.4h0m0.8 0.5h0m0.1-0.3h0m1 0.5h0m0.5-0.7h0m0.4-0.6h0m0 0.9h0m0.4-1h0m0.7 1h0m0.1-0.1h0m0.8 0.4h0m0.1-0.5h0m1-0.3h0m0.2 0.5h0m0.7 0.2h0m0.3-0.5h0m0.8 0.3h0m0.1-0.7h0m0.2-0.3h0m0.6 0.8h0m0.2-0.9h0m0 1.5h0m0.9-0.3h0m0.2-0.7h0m0.3-0.4h0m0.4 0.3h0m0.2 1.5h0m0.9-0.3h0m0.4-1.6h0m0.2 1h0m0.3-0.4h0m0.1 0.9h0m0.1-1.5h0m0.9 1.4h0m0.1-1h0m0.7-0.4h0m0.1 1h0m0.1 0.8h0m0.2-1.8h0m0.8 1.3h0m0.1-0.8h0m0.8 0.5h0m0 0.1h0m0.4-1.1h0m0.7 1.1h0m0.3-0.9h0m0.6 0.4h0m0 1h0m0.3-1.5h0m0.8 1.8h0m0-1h0m0.6-0.9h0m0.3 1.6h0m0-0.8h0m1.1-0.4h0m0 0.8h0m0.9-0.2h0m0.2 0.1h0m0.9 0.5h0m0.1-0.9h0m0.8 1.4h0m0.2-1.2h0m0.9 0.1h0m0.1 0.3h0m0.8-0.7h0m0.1 0.7h0m1-0.7h0m0.1 0.8h0m0.8-0.5h0m0.1 0.8h0m1-0.8h0m0.1 1.2h0m0.8-1.4h0m0.4 1h0m0.7-0.5h0m0.1-0.7h0m0.8 0.5h0m0 0.4h0m1.1-1.1h0m0 0.9h0m0.9 0.1h0m0.2-0.6h0m0.8-0.6h0m0.1 0.7h0m0 0.4h0m0.9 0.4h0m0.2-0.8h0m0.9 0h0m0.2 0.3h0m0.7-0.2h0m0.1 0.4h0m0.6-1.2h0m0.4 1.2h0m0.2-0.3h0m0.7-1h0m0.1 0.6h0m0.3 0.6h0m0.7 0.2h0m0.2-1h0m0.7 1.1h0m0.1-1.2h0m0.5-0.2h0m0.5 1.4h0m0.2-0.7h0m0.7 0.8h0m0.1-1h0m0.7-0.6h0m0.3 0.9h0m0.1 0.6h0m0.8 0.4h0m0.2-1.4h0m0.9 0.3h0m0.2 0.3h0m0.1-1.1h0m0.6 1h0m0 0.8h0m1.1-0.9h0m0 0.2h0m0.9 0.5h0m0.1-0.8h0m1-0.1h0m0 0.4h0m0.5-1h0m0.4 0.8h0m0.2 0.8h0m0.6-1.6h0m0.3 1.8h0m0.1-0.9h0m0.3-1h0m0.5 1.1h0m0.2-0.6h0m0.9-0.1h0m0.2 1.5h0m0.7-0.3h0m0.1-0.9h0m1 0.7h0m0.1-0.5h0m0.8 0.3h0m0.1-0.2h0m1-0.1h0m0.1 0.5h0m0.5-1.4h0m0.3 1h0m0.3 0.3h0m0.4-1.3h0m0.4 0.4h0m0.1 0.9h0m0.8-0.3h0m0 0.9h0m1.1-1.9h0m0.1 0.2h0m0.1 1.2h0m0.7-0.2h0m0-0.3h0m1.1 1h0m0.1-1h0m0.4-0.9h0m0.4 1.3h0m0.5-0.4h0m0.6-0.1h0m0.2 0.5h0m0.7 0h0m0.1-1.2h0m0.1 0.9h0m0.9-0.2h0m0.2 0.4h0m0.7 0.6h0m0.1-1.5h0m1 1.1h0m0.1-0.7h0m0.8 1.1h0m0.1-0.9h0m1 0.4h0m0.4-0.7h0m0.5 1.3h0m0.1-1h0m1 0.3h0m0.1-0.3h0m0.8-0.9h0m0 1.5h0m0.1-0.9h0m1 0.8h0m0.1-1h0m0.4-0.4h0m0.4 0.2h0m0 1h0m1.1-0.6h0m0 0.9h0m0.9-0.6h0m0.1 0.4h0m1-0.9h0m0-0.4h0m0.1 1.4h0m0.8-1.2h0m0.2 1.1h0m0.5-1.3h0m0.4 1.6h0m0.1-0.8h0m0.4-0.8h0m0.4 1.2h0m0.1-0.6h0m1 1.2h0m0.1-1.3h0m0.8 0.3h0m0.1 0.6h0m0.8-1.3h0m0.2 1.7h0m0.1-1.8h0m0.1 0.9h0m0.7-0.3h0m0.4 0.9h0m0.4-1.4h0m0.3 0.4h0m0.1 0.9h0m0.8-0.2h0m0-1h0m0.7-0.2h0m0.4 1.1h0m0-0.2h0m0.1-0.9h0m0.8 0.7h0m0.1 0.4h0m1 0h0m0-1.1h0m0.2 0.9h0m0.7 0.3h0m0.2-0.5h0m0.6-0.7h0m0.3 2.1h0m0.1-1.2h0m0.1-0.9h0m0.7 0.2h0m0.2 1.7h0m0.9-1.2h0m0.1 1.1h0m0.8 0h0m0.1-1h0m1 0.8h0m0.3-1.4h0m0.6 0.2h0m0.1 0.9h0m1 0.7h0m0.1-1.3h0m0.8 0.1h0m0.2 0.8h0m0.2-1.5h0m0.7 0.1h0m0.3 0.9h0m0.6 0.2h0m0.1-0.4h0m0.8-0.9h0m0.2 0.2h0m0.2 1h0m0.7-0.2h0m0-1h0m0.3 1.6h0m0.8-0.2h0m0-1.3h0m0.3 0.5h0m0.6 0.7h0m0-0.3h0m0.4-0.9h0m0.7 1.5h0m0-1.2h0m0.9 0.7h0m0.2-0.2h0m0.9-0.1h0m0.1 0.8h0m0.8 0.1h0m0.3-1.4h0m0.8 1.1h0m0.1-0.4h0m0.8 0.9h0m0.1-1.2h0m0.2-0.7h0m0.8 0.6h0m0.1 0.7h0m0.6-1.2h0m0.2 1.3h0m0.1-0.5h0m1 1h0m0.2-1.7h0m0.7 0.8h0m0.1 0.5h0m1-1h0m0.1 1h0m0.8-0.1h0m0.1-1.3h0m0.2 0.5h0m0.8 0.1h0m0.1 0.5h0m0.8-0.5h0m0.2 0.5h0m0.9-0.2h0m0.1 0.8h0m0.8-1.2h0m0.1 0.5h0m1 0.4h0m0-0.8h0m0.9 0.1h0m0.1 0.5h0m0.4-1.2h0m0.6 1.4h0m0.1-1.5h0m0.1 0.8h0m0.7 0.1h0m0.1 0.4h0m0.5-1.2h0m0.5 1.3h0m0.4-0.4h0m0.5-0.2h0m0.1 0.5h0m0.1-1.2h0m0.9 1.5h0m0.1-1.6h0m0.1 0.7h0m0.7 0.7h0m0.1-0.5h0m1 0.4h0m0.1-0.5h0m0.8 1.1h0m0-1.4h0m1.1 1.3h0m0.3-1.6h0m0.6 0.7h0m0 0.5h0m1.1-1h0m0 0.9h0m0.4-1.2h0m0.5 0.8h0m0.2 0.5h0m0.9-0.2h0m0-0.6h0m0.9 0.7h0m0.1-1.3h0m0.1 0.6h0m0.9 0.3h0m0.2 0.3h0m0.2-1.1h0m0.5 0.8h0m0.1 0.4h0m1-0.2h0m0.1-0.3h0m0.8 1h0m0.1-1h0m1 0.5h0m0.1-0.6h0m0.4-0.7h0m0.4 0.7h0m0.1 0.4h0m1 0.4h0m0.1-0.8h0m0.8 0.3h0m0 0.7h0m1.1-0.4h0m0.1-1.1h0m0.2-0.1h0m0.6 0.7h0m0 0.9h0m0.5-1.6h0m0.6 1h0m0-0.1h0m0.9-0.5h0m0 1h0m1.1-0.8h0m0.3 0.9h0m0.5-1.5h0m0.1 1.6h0m0.1-0.7h0m1-0.6h0m0.2 1.3h0m0.7-0.5h0m0.2-0.7h0m0.9 0.4h0m0.2 0.4h0m0.1-1.2h0m0.6 2h0m0.1-1.3h0m1-0.2h0m0.1 0.8h0m0-1.4h0m0.8 1.2h0m0.2-1h0m0.4-0.2h0m0.5 1.3h0m0.2-1.2h0m0.5 0.6h0m0.2 0.7h0m0.2-0.6h0m0.8-0.8h0m0.1 1.1h0m0.1-0.6h0m0.8 1.1h0m0.1-0.8h0m0.3-0.7h0m0.7 1.2h0m0.1-0.6h0m0.2-0.7h0m0.6 1.3h0m0.2-0.8h0m0.9 0.6h0m0-0.7h0m0.1-0.4h0m0.8 1.7h0m0.2-1.2h0m0.1-0.5h0m0.8 0.9h0m0.1 1h0m0.8-0.9h0m0.1 1h0m1-0.5h0m0.2-0.5h0m0.7-0.1h0m0.1 0.2h0m0.6-1.1h0m0.4 0.4h0m0.2 0.8h0m0.7 0.1h0m0.2-0.6h0m0.9 0.9h0m0.1-0.9h0m0.8 0.2h0m0.2 0.5h0m0.1-1.3h0m0.8 0.4h0m0.1 1.6h0m0.8-1.3h0m0 0.9h0m1-1.7h0m0.1 1.3h0m0.3-0.8h0m0.6 0.6h0m0.2-0.1h0m0.9 0h0m0 0.1h0m0.9-1.1h0m0.2 1.3h0m0.2-0.4h0m0.7-0.6h0m0.2 1.1h0m0.7-0.1h0m0.1-0.8h0m1-0.5h0m0.1 0.8h0m0.1 0.3h0m0.7-0.4h0m0.1 0.4h0m1-0.1h0m0.2 0.1h0m0-1.1h0m0.7 0.7h0m0.1-0.6h0m0 1.6h0m1-0.4h0m0.1-0.9h0m0.8 0.1h0m0.1-0.5h0m0 1.3h0m1 0.2h0m0.1-0.7h0m0.8 0.9h0m0.2-1h0m0.9 0.8h0m0-0.6h0m0.5-0.9h0m0.4 1.1h0m0.4-0.5h0m0.7 0.9h0m0-1.2h0m0.9-0.2h0m0.1 1.2h0m0.1-0.3h0m0.9 0.9h0m0.1-1.6h0m0.8 0.8h0m0.2-1h0m0 0.5h0m0.9-0.5h0m0.1 1.2h0m0.4-0.8h0m0.4 0.9h0m0.1-0.6h0m1 0.1h0m0.2 0.3h0m0.7 0.7h0m0.2-1.8h0m0.2 0.6h0m0.7 0.1h0m0.1 0.5h0m0.4-1.3h0m0.4 1.1h0m0.1-0.1h0m0.3-1h0m0.7 0.1h0m0.1 1.6h0m0.2-0.7h0m0.6 0h0m0.3 0.7h0m0.8-1.3h0m0.1 0.8h0m0.8 0.3h0m0.1-0.5h0m1 0.2h0m0-0.4h0m0.9 0.5h0m0-1h0m1.1 1.1h0m0.3-1.4h0m0 0.8h0m0.6 0h0m0.1 0.6h0m1-1.1h0m0.2 1.5h0m0-1.8h0m0.7 0h0m0.1 1.5h0m0.1-0.8h0m0.9-0.3h0m0.1 1.2h0m0.6-1.6h0m0.2 0.9h0m0.3 0.4h0m0.8-0.3h0m0.1 0.5h0m0.8-1.4h0m0.1 1.2h0m0.1-1.1h0m0.9 1.1h0m0.1-0.4h0m0.2-0.8h0m0.6 0.1h0m0.2 1.5h0m0.9 0.2h0m0.1-1.4h0m0.8 1.4h0m0-1.5h0m1-0.3h0m0.1-0.1h0m0 0.9h0m0.3 0.9h0m0.6-1.8h0m0 1h0m0.1 0.2h0m1-0.6h0m0.1 0.7h0m0.5-1.3h0m0.3 0.9h0m0.1 1.2h0m1-1.4h0m0.1 0.6h0m0.8-0.3h0m0.3 0.1h0m0.2-1.1h0m0.6 1h0m0.4 0.7h0m0.4-1.7h0m0.1 0.4h0m0.3 0.7h0m0.8-0.2h0m0.1 1.2h0m0.8-1h0m0.1-0.3h0m0.7-0.8h0m0.3 1.4h0m0.1-0.4h0m0.1-1h0m0.7 1h0m0.1-0.9h0m0.1 1h0m0.9-0.6h0m0.1 0.8h0m0.8 0.1h0m0.1-1.4h0m0.1 1h0m0.9-0.8h0m0.2 1h0m0.7 0.1h0m0.4-0.4h0m0.5-0.9h0m0.2 1.1h0m0-0.1h0m0.3-1h0m0.6 0.5h0m0.1 0.7h0m0.6-1.2h0m0.4 1.8h0m0.1-1h0m0.8 0.5h0m0.1-0.8h0m1 1.6h0m0.2-1.3h0m0.3-0.8h0m0.4 0.4h0m0.1 0.8h0m0.7-1.1h0m0.3 1.3h0m0.1-0.8h0m0.6-0.6h0m0.2 1.4h0m0.1-1.3h0m0.1 0.4h0m0.9 0.9h0m0.1-0.6h0m0.8 0.2h0m0.1 0.1h0m0.8-1.1h0m0.2 1.6h0m0.1-1.6h0m0 0.8h0m0.8 0.2h0m0.2 0.4h0m0.5-1.4h0m0.4 1.2h0m0.1-0.2h0m0.4-1h0m0.4 1h0m0.4-0.9h0m0.2 1.6h0m0.5-0.9h0m0 1.1h0m0.9-0.8h0m0.1-0.1h0m0.2-1h0m0.8 0h0m0 1.5h0m0.1-0.5h0m0.8 0.6h0m0.2-1h0m0.1-0.6h0m0.8 1.4h0m0.1-0.4h0m0.7-1h0m0.1 1.8h0m0.1-0.8h0m0.3-1h0m0.7 2.1h0m0.4-1.2h0m0.5 0.9h0m0.1-1.5h0m1 1h0m0.1-0.4h0m0.8 0.5h0m0.1-0.6h0m0-0.8h0m1 1.1h0m0.1-1.1h0m0.1 0.2h0m0.7 1.4h0m0-0.7h0m0.6-0.8h0m0.5 0.8h0m0.1 1.2h0m0.8-1.3h0m0 1.3h0m1.1-1.8h0m0 1.6h0m0.4-1.9h0m0.5 1.3h0m0-0.4h0m1.1-0.2h0m0 0.7h0m0.9-1.1h0m0.2 1.4h0m0.3-1.7h0m0.6 0.5h0m0.2 1.1h0m0.4-1.6h0m0.3 0.3h0m0.1 1h0m1-1h0m0.2 1h0m0.7 0.3h0m0.1-1.6h0m0 0.3h0m1 0.4h0m0.1 0.8h0m0.8-0.7h0m0.1-0.8h0m0.4 1.6h0m0.6 0.5h0m0.1-1.5h0m0.8 1.4h0m0.1-1.4h0m1 0.6h0m0.1-0.6h0m0-0.6h0m0.8 2h0m0.1-1.9h0m0.1 0.7h0m0.9 0.8h0m0.2-1.3h0m0.7 0.5h0m0 0.3h0m1.1 0.6h0m0-1.1h0m0.7-0.5h0m0.2 0.7h0m0.2 0.8h0m0.9-0.4h0m0-0.2h0m0.5-1h0m0.4 1.2h0m0.2-0.9h0m0.9 0.1h0m0.1 0.8h0m0.8-0.2h0m0.1 0.1h0m0-1h0m1 0.3h0m0.1 1.7h0m0.8-1h0m0.1-0.9h0m1 0.9h0m0.2-0.6h0m0.7 1h0m0.1-0.8h0m0.9-0.7h0m0.1 0.9h0m0.1 0.2h0m0.8 0.1h0m0.1-0.3h0m0.6-0.8h0m0.4 0.4h0m0.1 0.6h0m0.6-1h0m0.2 1h0m0.3-0.4h0m0.2-0.6h0m0.6 0.9h0m0 0.3h0m0.9-0.7h0m0 1.3h0m1.1-1.2h0m0 0.4h0m0.9-0.3h0m0.1 1.2h0m1-1.2h0m0.1-0.7h0m0.1 1.4h0m0.7 0h0m0.1-0.8h0m0.1-0.7h0m0.9 0.5h0m0.2 0.8h0m0.3-1.3h0m0.4 0.6h0m0.3 1.5h0m0.8-0.1h0m0.2-1.8h0m0.3-0.2h0m0.4 1.4h0m0.1-1.3h0m0.2 0.6h0m0.8 1h0m0.1-0.8h0m0.1-0.9h0m0.7 0.9h0m0.3 1h0m0-1.9h0m0.8 0h0m0.1 0.3h0m0 1h0m0.8 0.3h0m0.2-1.2h0m0.9-0.4h0m0 0.7h0m0.5 1.3h0m0.4-1.2h0m0.1 0.5h0m0.9-1.3h0m0.1 0.8h0m0 0.5h0m0.9 0h0m0.1-0.4h0m1-0.2h0m0.2 0.6h0m0.7-0.4h0m0.1 0.8h0m0.6-1.7h0m0.4 0.5h0m0.2 0.6h0m0.7-0.9h0m0.1-0.1h0m0.1 1.4h0m0.9-1h0m0.1 0.7h0m0-1.2h0m0.8 0.1h0m0.1 1.2h0m0-0.5h0m1-0.5h0m0.1 0.9h0m0.1-1.2h0m0.7 0.9h0m0.1 0.5h0m1-0.4h0m0.1 0.5h0m0-1.5h0m0.8 0h0m0 0.6h0m0.3 0.6h0m0.8 0h0m0.3-0.5h0m0.5-0.7h0m0.1 1h0m0 0.2h0m0.1-1.1h0m1 0.5h0m0.1 0.8h0m0.3-1.4h0m0.5 1.4h0m0.2-0.4h0m0.4-0.9h0m0.5 1.1h0m0.2-0.8h0m0.7 0.7h0m0.1-0.2h0m1-0.4h0m0.1 1h0m0.8 0.4h0m0.1-1.3h0m0.5-0.6h0m0.5 0.1h0m0.1 1.5h0m0.1-0.7h0m0.7 0.5h0m0.1-1.1h0m1 0.6h0m0.1 0.2h0m0.3-1.1h0m0.5 0.1h0m0.1 0.5h0m0.1 1h0m0.9-0.9h0m0.1 0.8h0m0.8-0.2h0m0.1-0.9h0m0.6-0.3h0m0.4 1.3h0m0.2-0.7h0m0.7-0.1h0m0.3 0.9h0m0.8 0h0m0.2-0.6h0m0.7 0.6h0m0.1-0.5h0m1 0h0m0 0.3h0m0.9-1.3h0m0.1 0.8h0m0.1 0.9h0m0.9-0.2h0m0.2-1h0m0-0.5h0m0.7 1.6h0m0.2-0.7h0m0.9 0.4h0m0.1-0.8h0m0.5-0.5h0m0.3 0.5h0m0.1-0.5h0m0.2 1.4h0m0.8-0.6h0m0.1 1.3h0m0.1-2.1h0m0.7 0.8h0m0.1 0.5h0m1 0.1h0m0.1-1.4h0m0 1h0m0.8 0.4h0m0.1-0.7h0m1 0.7h0m0.1-0.6h0m0.8 1.3h0m0-1.9h0m1.1 0.5h0m0 0.5h0m0.8-1.1h0m0.1 0.7h0m0.2 0.3h0m0.5-1h0m0.4 1.1h0m0-0.4h0m0.9-0.1h0m0.1 1.1h0m0.1-1.7h0m0.9 1.3h0m0.2-1.2h0m0.6-0.1h0m0.1 0.8h0m0.2 0.2h0m0.9-0.5h0m0.1 1h0m0.8-0.1h0m0.2-0.7h0m0.2-0.7h0m0.7 0.9h0m0.1 0.3h0m0.8-0.6h0m0.4 0.7h0m0.1-1.3h0m0.6 0.1h0m0.1 1.1h0m0.8-0.9h0m0 1.5h0m1.1-1.2h0m0.1 0.8h0m0.8-0.4h0m0-0.1h0m1.1-0.4h0m0 0.7h0m0.3-1.2h0m0.6 0.5h0m0 0.8h0m1.1 0.1h0m0-0.9h0m0.9 0.9h0m0.1-0.6h0m0.4-0.8h0m0.6 0.6h0m0.2 0.7h0m0.7 0.2h0m0.1-1.2h0m1 1h0m0.1-0.6h0m0.7-0.8h0m0.1 1.4h0m0.1-0.6h0m0.7-0.8h0m0.3 1.1h0m0.1-0.9h0m0.2-0.1h0m0.6 1.1h0m0.1-0.2h0m1 0.3h0m0.1-0.8h0m0.8 0.1h0m0.1 1.5h0m1-1.5h0m0.2 0.8h0m0.7 0.1h0m0-0.6h0m1.1 0.7h0m0-0.7h0m0.9 0.3h0m0-0.6h0m0.8-0.6h0m0.3 1.1h0m0.1-0.3h0m0.3-0.7h0m0.5 1.2h0m0.1-0.3h0m0.9-1h0m0.1 0.9h0m0.2 0.2h0m0.7-0.7h0m0.1 1.4h0m1-0.8h0m0.2 0.1h0m0.4-1.1h0m0.3 1.3h0m0.1-0.7h0m1 0.4h0m0.1 1.1h0m0.8-0.4h0m0.1-0.9h0m1 0.4h0m0.2-0.2h0m0.7 0.3h0m0.1-0.4h0m1 0.7h0m0.1-1.4h0m0-0.2h0m0.8 1.2h0m0.2-0.5h0m0.9 0.9h0m0.5-1h0m0.4 0.6h0m0.1-0.8h0m0.2-0.3h0m0.8 1.3h0m0-0.6h0m0.9 0.3h0m0-0.6h0m0.1-0.4h0m1 0.9h0m0 0.1h0m0.9 0.4h0m0.1-0.9h0m0.4-0.5h0m0.6 1h0m0.1-1.1h0m0.2 0.5h0m0.6 1.5h0m0.1-1.1h0m1-0.1h0m0.1 0.7h0m0.8-0.3h0m0.1-0.5h0m1-0.7h0m0.1 2.1h0m0.4-1.4h0m0.4 1.4h0m0.1-1.3h0m1-0.5h0m0.4 0.8h0m0.2-1.1h0m0.3 1.2h0m0-0.6h0m1.1 0.6h0m0.1-1h0m0.8 0.1h0m0-0.2h0m0.2 1h0m0.9-0.3h0m0 0.4h0m0.8-1.2h0m0.1 0.7h0m0-0.6h0m0.1 1.7h0m1-0.4h0m0.1-1.3h0m0.2 0.7h0m0.6 0.2h0m0.1-0.9h0m0.1 1.7h0m0.9-1.7h0m0.1 0.4h0m0.1 1h0m0.7-0.6h0m0.1 0.8h0m1-0.8h0m0.1-0.8h0m0.1 1.3h0m0.7-0.3h0m0.1-0.6h0m0.7-0.5h0m0.3 0.6h0m0.2 0.9h0m0.7 0.1h0m0.2-0.7h0m0.3-0.8h0m0.6 1.4h0m0.1-1h0m0.8 0.5h0m0.5-0.9h0m0.1 1.1h0m0.5-0.1h0m0.3-0.5h0m0.6-0.3h0m0 1.2h0m1.1-0.9h0m0.1 0.5h0m0.7-1.1h0m0.1 0.3h0m0 0.8h0m0.3-1.1h0m0.8 1.2h0m0.3-0.2h0m0-0.9h0m0.6 1.1h0m0.2-0.6h0m0.5-0.6h0m0.4 1.2h0m0-0.3h0m0.9 0.3h0m0.2-0.5h0m0.6-0.7h0m0.3 1.3h0m0.1-0.3h0m0.8 0.6h0m0.2-1.4h0m0.9 1.9h0m0.5-1.6h0m0.4 0.4h0m0.1 0.4h0m0.5-1.2h0m0.5 1.3h0m0.2-0.7h0m0.7-0.7h0m0.1 1.4h0m0-0.8h0m1 0.3h0m0.1 0.4h0m0.8-0.1h0m0.3-0.4h0m0.8 0.7h0m0.1-1.5h0m0.1 0.2h0m0.7 0.9h0m0.1-0.9h0m1 0.2h0m0 1.4h0m0.9 0h0m0.3-0.9h0m0.8 1h0m0.2-1.5h0m0.3-0.3h0m0.4 1.2h0m0.1-0.4h0m0.5-0.8h0m0.5 0.9h0m0.1 1.1h0m0.8-0.7h0m0.1-0.7h0m0.6-0.6h0m0.4 1h0m0.2-0.6h0m0.7 0.8h0m0.1-1.3h0m0 0.3h0m1 1h0m0.3-0.4h0m0.6 0.1h0m0.1 0.3h0m1-0.2h0m0.2-0.1h0m0.7 0.4h0m0-1.4h0m0.3 0.9h0m0.8 0.8h0m0.1-1.4h0m0.8 0.4h0m0.2 0.5h0m0.2-1.2h0m0.7 1.4h0m0-0.4h0m0.7-0.9h0m0.2 1.4h0m0-0.5h0m1.1 0.2h0m0.1-0.4h0m0.8 0h0m0.1 0.7h0m1-0.6h0m0.1 0.2h0m0.8-0.8h0m0.2 1.8h0m0.9-1.6h0m0.3 0.8h0m0.2-1.3h0m0.4 0.7h0m0.1 0.4h0m0-1h0m1 0.5h0m0.1 0.7h0m0.3-1.3h0m0.5 1.1h0m0.1-0.7h0m1 0.6h0m0.1-1h0m0.1 1.3h0m0.7-0.4h0m0.1 0.6h0m0.5-1.4h0m0.5-0.1h0m0.1 0.9h0m0 0.2h0m0.8-0.5h0m0.3-0.5h0m0.4 1.4h0m0.4-1.5h0m0 0.8h0m0.3 0.3h0m0.6-1.1h0m0 1.2h0m0.1-0.4h0m1-0.2h0m0-0.6h0m0.1 1.3h0m0.8-0.9h0m0.5 1.4h0m0.6-0.4h0m0-0.8h0m0.2-0.6h0m0.7 1.5h0m0.1-0.8h0m0.1-0.7h0m0.9 0.7h0m0.2 0.6h0m0.7-0.5h0m0.3 0.9h0m0.4-1.7h0m0.4 1.3h0m0.1-0.8h0m0.2-0.5h0m0.6 1.2h0m0.1-0.4h0m0.9-0.8h0m0.1 1.4h0m0.1-0.6h0m0.7-0.8h0m0.1 0.6h0m0.1-0.5h0m0.1 1.2h0m0.9-0.7h0m0.7-0.5h0m0.2 0.9h0m0.3 0.2h0m0.3-1.2h0m0.5 0.2h0m0-0.2h0m0.1 1.1h0m0.8 0.1h0m0-0.4h0m1.1-0.3h0m0 0.9h0m0.9-0.6h0m0.1 1h0m0.7-1.7h0m0.3 0.9h0m0 0.5h0m0.9-0.7h0m0.1 0.5h0m1-1.1h0m0.2 1.7h0m0.7-1.1h0m0.3 1h0m0.8 0.3h0m0.2-1.3h0m0.7-0.1h0m0.1 0.4h0m1-0.5h0m0.1 0.9h0m0.8-1.2h0m0.1 0.8h0m1-0.9h0m0.1 1.1h0m0.8-0.9h0m0 0.8h0m1.1-0.7h0m0.3 0.8h0m0.5-1.3h0m0.1 1.4h0m0-0.8h0m1.1 0.8h0m0.3-1.4h0m0 0.9h0m0.6 0.5h0m0.1-0.7h0m1 0.6h0m0-0.7h0m0.1-0.6h0m0.8 1.1h0m0.2-0.6h0m0.5-0.5h0m0.4 1h0m0.1 0.4h0m0.7-1.4h0m0.1 0.3h0m0.2 1.4h0m0.9-1.1h0m0.2 0.7h0m0.1-1.2h0m0.6 1.9h0m0.2-1.3h0m0.9-0.7h0m0.1 1.2h0m0.6-0.4h0m0.2-0.6h0m0.1 1.1h0m0.9-1.3h0m0.1 1.8h0m0.1-1.2h0m0.8-0.5h0m0.1 0.3h0m0.1 1.1h0m0.9-0.4h0m0.1-0.2h0m0.8 0.2h0m0.3-0.5h0m0.8 0.6h0m0.1-0.2h0m0.8-0.1h0m0 0.9h0m1.1-0.9h0m0.1 0.8h0m0.8-1.2h0m0.2 0.6h0m0.9-0.4h0m0.2 0.4h0m0.7 0.1h0m0.2-1.2h0m0 1h0m0.9-0.1h0m0.1 0.3h0m0.8 0.8h0m0.1-1h0m0.6-1h0m0.4 0.7h0m0.1 0.4h0m0.8 0.5h0m0.1-1.6h0m0 1h0m1-0.5h0m0.1 0.8h0m0.1-1.3h0m0.7 1.2h0m0.1-0.7h0m1 0.6h0m0.4-0.1h0m0.5-0.4h0m0 1.2h0m0.8-1.8h0m0.3 1.6h0m0.3-1.5h0m0 0.7h0m0.6 1.1h0m0-1.6h0m1.1 0.2h0m0.1 0.6h0m0.1-1.1h0m0.7 1.2h0m0.1-0.8h0m0.5-0.3h0m0.5 0.3h0m0.1 0.7h0m0.8-0.7h0m0.2 0.7h0m0.9-1h0m0.1 1.1h0m0.3-0.6h0m0.5 1h0m0.1-0.7h0m1-0.4h0m0.2-0.4h0m0.4 1.3h0m0.3-0.4h0m0.1 0.3h0m0.9-1.3h0m0.1 0.9h0m0.1 0.4h0m0.8-0.5h0m0.1 0.5h0m1-1.3h0m0.1 1h0m0 0.4h0m0.8-0.7h0m0-0.7h0m0.1 1.7h0m1-0.4h0m0.3-0.7h0m0.6 0.5h0m0-0.8h0m0.5-0.2h0m0.6 0.9h0m0.1 0.3h0m0.4-1.3h0m0.4 0.5h0m0.1 1.2h0m0.1-1.7h0m0.9 1.1h0m0.1-1h0m0.1 0.4h0m0.7 1.4h0m0.2-1.1h0m0.9-0.7h0m0.1 0.8h0m0.3 0.9h0m0.5-0.4h0m0.3-0.8h0m0.8-0.5h0m0.1 0.9h0m-921.4-9.1h0m-4 5h0m-132 1h0m238 0h0m19.7-1h0m135.3-2h0m4.7 0h0m125.2-6.3h0m122 6.2h0m148-4.1h0m135.1 4.9h0m27.3-2h0" stroke="#000" stroke-width="3.0" stroke-linecap="round" fill="none"/>
<path d="M390.3 987h0m119 1.3h0m286.2 0.9h0" stroke="#f00" stroke-width="3.2" stroke-linecap="round" fill="none"/>
<path d="M233 959.4h4.6l-2.3-4.2zM364 959.4h4.6l-2.3-4.2zM375 959.4h4.6l-2.3-4.2zM379 959.4h4.6l-2.3-4.2zM388 959.4h4.6l-2.3-4.2zM448 959.4h4.6l-2.3-4.2zM507 959.4h4.6l-2.3-4.2zM636 959.4h4.6l-2.3-4.2zM640.7 959.4h4.6l-2.3-4.2zM765.9 959.4h4.6l-2.3-4.2zM793.2 959.4h4.6l-2.3-4.2zM887.9 959.4h4.6l-2.3-4.2zM947.8 959.4h4.6l-2.3-4.2zM1026.4 959.4h4.6l-2.3-4.2zM1035.9 959.4h4.6l-2.3-4.2zM1171 959.4h4.6l-2.3-4.2z" fill="#f00"/>
<path d="M162.2 1010.9V954.5M1302.8 1010.9V954.5" stroke="#800080" stroke-width="2.08" stroke-dasharray="2.08 3.44" fill="none"/>
</g>
<path d="M105.5 954.5H1485.5M105.5 1011.5H1485.5M105.5 954.5V1011.5M1485.5 954.5V1011.5" stroke="#000" stroke-width="1.11" fill="none" stroke-linecap="square"/>
<path d="M162.5 1011.5v4.86M346.5 1011.5v4.86M530.5 1011.5v4.86M715.5 1011.5v4.86M899.5 1011.5v4.86M1083.5 1011.5v4.86M1267.5 1011.5v4.86M1452.5 1011.5v4.86" stroke="#000" stroke-width="1.11" fill="none"/>
<text x="157.83" y="1031.7" font-size="14.44" textLength="8.84" lengthAdjust="spacingAndGlyphs">0</text>
<text x="328.83" y="1031.7" font-size="14.44" textLength="35.35" lengthAdjust="spacingAndGlyphs">2500</text>
<text x="513.08" y="1031.7" font-size="14.44" textLength="35.35" lengthAdjust="spacingAndGlyphs">5000</text>
<text x="697.33" y="1031.7" font-size="14.44" textLength="35.35" lengthAdjust="spacingAndGlyphs">7500</text>
<text x="877.16" y="1031.7" font-size="14.44" textLength="44.18" lengthAdjust="spacingAndGlyphs">10000</text>
<text x="1061.41" y="1031.7" font-size="14.44" textLength="44.18" lengthAdjust="spacingAndGlyphs">12500</text>
<text x="1245.66" y="1031.7" font-size="14.44" textLength="44.18" lengthAdjust="spacingAndGlyphs">15000</text>
<text x="1429.91" y="1031.7" font-size="14.44" textLength="44.18" lengthAdjust="spacingAndGlyphs">17500</text>
<path d="M100.6 1009.5h4.86M100.6 983.5h4.86M100.6 957.5h4.86" stroke="#000" stroke-width="1.11" fill="none"/>
<path d="M102.7 996.5h2.78M102.7 970.5h2.78" stroke="#000" stroke-width="0.83" fill="none"/>
<text x="86.94" y="1014.5" font-size="14.44" textLength="8.84" lengthAdjust="spacingAndGlyphs">0</text>
<text x="86.94" y="988.5" font-size="14.44" textLength="8.84" lengthAdjust="spacingAndGlyphs">5</text>
<text x="78.11" y="962.5" font-size="14.44" textLength="17.67" lengthAdjust="spacingAndGlyphs">10</text>
<text x="0" y="0" font-size="14.44" text-anchor="middle" textLength="14.53" lengthAdjust="spacingAndGlyphs" transform="translate(69.2 984.2) rotate(-90)">dr</text>
</svg></body></html>
